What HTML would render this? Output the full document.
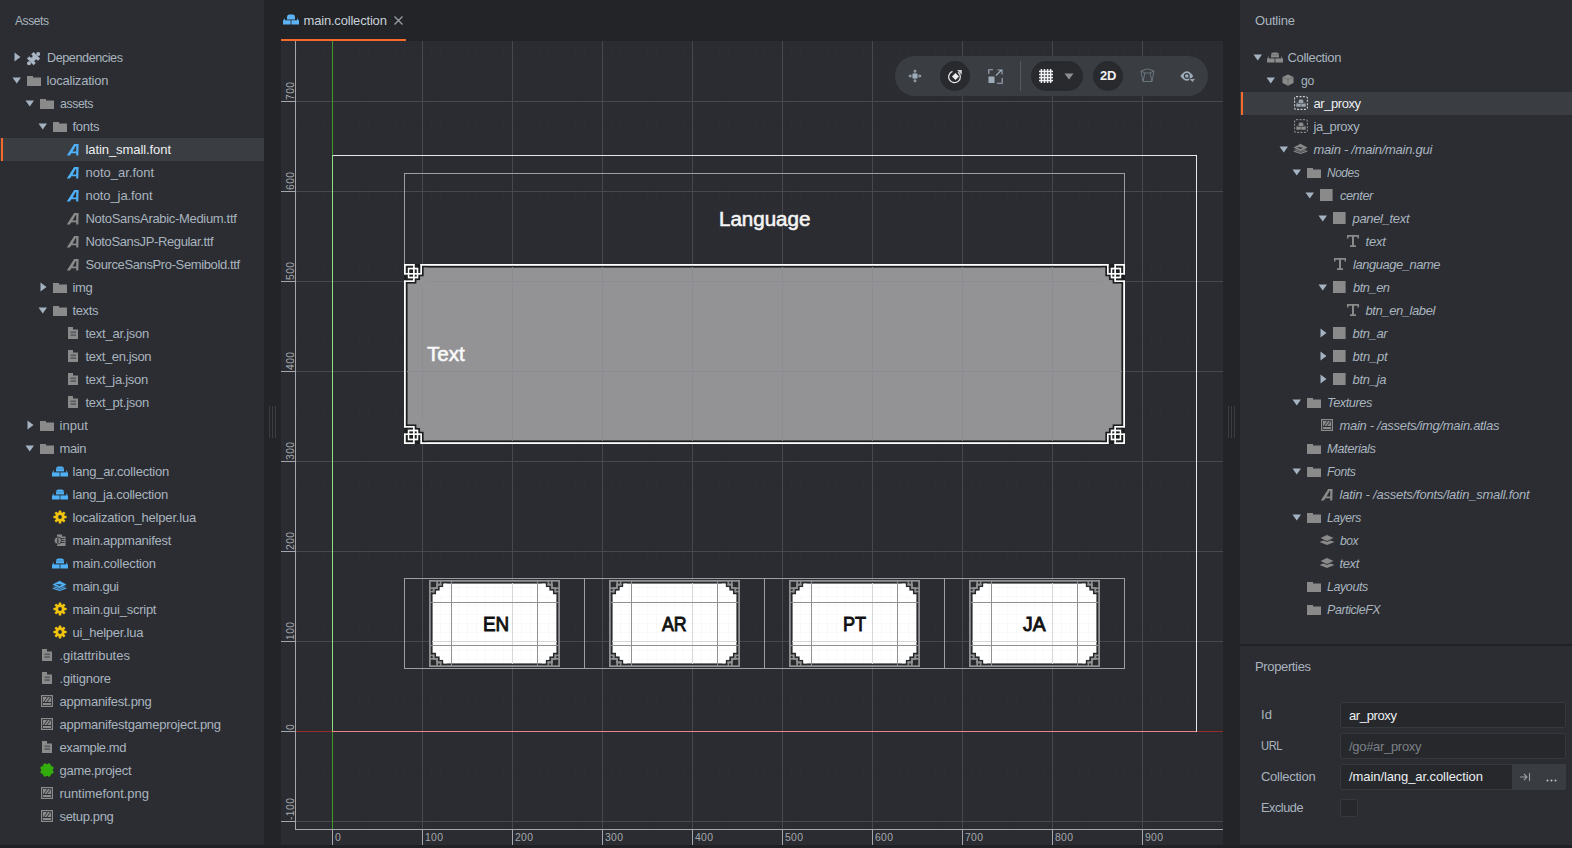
<!DOCTYPE html>
<html><head><meta charset="utf-8">
<style>
html,body{margin:0;padding:0;}
body{width:1572px;height:848px;overflow:hidden;position:relative;background:#1f2124;font-family:"Liberation Sans",sans-serif;}
.abs{position:absolute;}
svg{display:block;}
</style></head><body>
<!-- left panel -->
<div class="abs" style="left:0;top:0;width:264px;height:845px;background:#2b2d32;"></div>
<div class="abs" style="left:0;top:138px;width:264px;height:23px;background:#3a3d42;"></div>
<div class="abs" style="left:1px;top:138px;width:2px;height:23px;background:#f5692a;"></div>
<!-- editor area -->
<div class="abs" style="left:264px;top:0;width:976px;height:845px;background:#222428;"></div>
<!-- grips -->
<div class="abs" style="left:269px;top:406px;width:1px;height:32px;background:#3a3d42;"></div>
<div class="abs" style="left:272px;top:406px;width:1px;height:32px;background:#3a3d42;"></div>
<div class="abs" style="left:275px;top:406px;width:1px;height:32px;background:#3a3d42;"></div>
<div class="abs" style="left:1228px;top:406px;width:1px;height:32px;background:#3a3d42;"></div>
<div class="abs" style="left:1231px;top:406px;width:1px;height:32px;background:#3a3d42;"></div>
<div class="abs" style="left:1234px;top:406px;width:1px;height:32px;background:#3a3d42;"></div>
<!-- right panel -->
<div class="abs" style="left:1240px;top:0;width:332px;height:644px;background:#2b2d32;"></div>
<div class="abs" style="left:1240px;top:646px;width:332px;height:199px;background:#2b2d32;"></div>
<div class="abs" style="left:1240px;top:92px;width:332px;height:23px;background:#3a3d42;"></div>
<div class="abs" style="left:1241px;top:92px;width:2px;height:23px;background:#f5692a;"></div>
<!-- property fields -->
<div class="abs" style="left:1340px;top:702px;width:224px;height:24px;background:#26282c;border:1px solid #35383d;border-radius:2px;"></div>
<div class="abs" style="left:1340px;top:733px;width:224px;height:24px;background:#26282c;border:1px solid #35383d;border-radius:2px;"></div>
<div class="abs" style="left:1340px;top:764px;width:224px;height:24px;background:#26282c;border:1px solid #35383d;border-radius:2px;"></div>
<div class="abs" style="left:1512px;top:764px;width:54px;height:26px;background:#393c41;border-radius:0 2px 2px 0;"></div>
<div class="abs" style="left:1519px;top:771px;width:12px;height:12px;">
<svg width="12" height="12" viewBox="0 0 12 12"><path d="M1 6 H8 M5 3 L8 6 L5 9 M10.5 2 V10" stroke="#9aa0a6" stroke-width="1.1" fill="none"/></svg></div>
<div class="abs" style="left:1546px;top:779px;width:11px;height:3px;">
<svg width="11" height="3" viewBox="0 0 11 3"><circle cx="1.5" cy="1.5" r="1" fill="#c0c5ca"/><circle cx="5.5" cy="1.5" r="1" fill="#c0c5ca"/><circle cx="9.5" cy="1.5" r="1" fill="#c0c5ca"/></svg></div>
<div class="abs" style="left:1340px;top:799px;width:16px;height:16px;background:#26282c;border:1px solid #35383d;border-radius:2px;"></div>
<!-- tab -->
<div class="abs" style="left:281px;top:39px;width:125px;height:2px;background:#f5692a;"></div>
<div class="abs" style="left:283px;top:14px;"><svg width="16" height="11" viewBox="0 0 16 11"><path d="M4 3 Q4 0.5 6 0.5 H10 Q12 0.5 12 3 V5.5 H4 Z" fill="#5db3f5"/><path d="M1.5 4 L0 7 V10.5 H7.6 V6.2 H2 Z" fill="#5db3f5"/><path d="M14.5 4 L16 7 V10.5 H8.4 V6.2 H14 Z" fill="#5db3f5"/></svg></div>
<div class="abs" style="left:394px;top:16px;"><svg width="9" height="9" viewBox="0 0 9 9"><path d="M0.5 0.5 L8.5 8.5 M8.5 0.5 L0.5 8.5" stroke="#9a9fa5" stroke-width="1.3"/></svg></div>
<div style="position:absolute;left:303.5px;top:11px;height:20px;line-height:20px;white-space:nowrap;color:#c8d0d8;font-family:'Liberation Sans', sans-serif;font-size:13px;letter-spacing:-0.186px;">main.collection</div>
<svg style="position:absolute;left:13.75px;top:52px" width="7" height="10" viewBox="0 0 7 10"><path d="M0.5 0.5 V9.5 L6.5 5 Z" fill="#a4b2c1"/></svg>
<svg style="position:absolute;left:25.9px;top:49.6px" width="16" height="16" viewBox="0 0 16 16"><path d="M1 8.6 L7.6 2 L14.2 8.6 L7.6 15.2 Z" fill="#a9b6c3"/><circle cx="12.2" cy="4" r="2" fill="#a9b6c3"/><circle cx="3" cy="13.2" r="2" fill="#a9b6c3"/><circle cx="5" cy="6" r="1.6" fill="#2b2d32"/><circle cx="10.2" cy="11.2" r="1.6" fill="#2b2d32"/></svg>
<div style="position:absolute;left:46.5px;top:48px;height:20px;line-height:20px;white-space:nowrap;color:#a9b4bf;font-family:'Liberation Sans', sans-serif;font-size:13px;letter-spacing:-0.450px;transform:scaleX(0.9722);transform-origin:0 0;">Dependencies</div>
<svg style="position:absolute;left:12.0px;top:76.5px" width="10" height="7" viewBox="0 0 10 7"><path d="M0.5 0.5 H9 L4.75 6.5 Z" fill="#a4b2c1"/></svg>
<svg style="position:absolute;left:26.5px;top:75px" width="14" height="11" viewBox="0 0 14 11"><path d="M0 1 H6 V2.5 H14 V11 H0 Z" fill="#8a8a8a"/></svg>
<div style="position:absolute;left:46.5px;top:71px;height:20px;line-height:20px;white-space:nowrap;color:#a9b4bf;font-family:'Liberation Sans', sans-serif;font-size:13px;letter-spacing:-0.212px;">localization</div>
<svg style="position:absolute;left:25.0px;top:99.5px" width="10" height="7" viewBox="0 0 10 7"><path d="M0.5 0.5 H9 L4.75 6.5 Z" fill="#a4b2c1"/></svg>
<svg style="position:absolute;left:39.5px;top:98px" width="14" height="11" viewBox="0 0 14 11"><path d="M0 1 H6 V2.5 H14 V11 H0 Z" fill="#8a8a8a"/></svg>
<div style="position:absolute;left:59.5px;top:94px;height:20px;line-height:20px;white-space:nowrap;color:#a9b4bf;font-family:'Liberation Sans', sans-serif;font-size:13px;letter-spacing:-0.450px;transform:scaleX(0.9483);transform-origin:0 0;">assets</div>
<svg style="position:absolute;left:38.0px;top:122.5px" width="10" height="7" viewBox="0 0 10 7"><path d="M0.5 0.5 H9 L4.75 6.5 Z" fill="#a4b2c1"/></svg>
<svg style="position:absolute;left:52.5px;top:121px" width="14" height="11" viewBox="0 0 14 11"><path d="M0 1 H6 V2.5 H14 V11 H0 Z" fill="#8a8a8a"/></svg>
<div style="position:absolute;left:72.5px;top:117px;height:20px;line-height:20px;white-space:nowrap;color:#a9b4bf;font-family:'Liberation Sans', sans-serif;font-size:13px;letter-spacing:-0.297px;">fonts</div>
<svg style="position:absolute;left:66.3px;top:143.2px" width="13" height="13" viewBox="0 0 13 13"><path d="M0.8 12.5 L8.2 1 H12.6 L12.3 12.5 H10.2 V10.2 H5.4 L3.9 12.5 Z M6.6 8.4 H10.2 V3.1 H9.6 Z" fill="#4fb1f7" fill-rule="evenodd"/></svg>
<div style="position:absolute;left:85.5px;top:140px;height:20px;line-height:20px;white-space:nowrap;color:#eceff1;font-family:'Liberation Sans', sans-serif;font-size:13px;letter-spacing:-0.081px;">latin_small.font</div>
<svg style="position:absolute;left:66.3px;top:166.2px" width="13" height="13" viewBox="0 0 13 13"><path d="M0.8 12.5 L8.2 1 H12.6 L12.3 12.5 H10.2 V10.2 H5.4 L3.9 12.5 Z M6.6 8.4 H10.2 V3.1 H9.6 Z" fill="#4fb1f7" fill-rule="evenodd"/></svg>
<div style="position:absolute;left:85.5px;top:163px;height:20px;line-height:20px;white-space:nowrap;color:#a9b4bf;font-family:'Liberation Sans', sans-serif;font-size:13px;letter-spacing:-0.007px;">noto_ar.font</div>
<svg style="position:absolute;left:66.3px;top:189.2px" width="13" height="13" viewBox="0 0 13 13"><path d="M0.8 12.5 L8.2 1 H12.6 L12.3 12.5 H10.2 V10.2 H5.4 L3.9 12.5 Z M6.6 8.4 H10.2 V3.1 H9.6 Z" fill="#4fb1f7" fill-rule="evenodd"/></svg>
<div style="position:absolute;left:85.5px;top:186px;height:20px;line-height:20px;white-space:nowrap;color:#a9b4bf;font-family:'Liberation Sans', sans-serif;font-size:13px;letter-spacing:-0.087px;">noto_ja.font</div>
<svg style="position:absolute;left:66.3px;top:212.2px" width="13" height="13" viewBox="0 0 13 13"><path d="M0.8 12.5 L8.2 1 H12.6 L12.3 12.5 H10.2 V10.2 H5.4 L3.9 12.5 Z M6.6 8.4 H10.2 V3.1 H9.6 Z" fill="#8a8a8a" fill-rule="evenodd"/></svg>
<div style="position:absolute;left:85.5px;top:209px;height:20px;line-height:20px;white-space:nowrap;color:#a9b4bf;font-family:'Liberation Sans', sans-serif;font-size:13px;letter-spacing:-0.319px;">NotoSansArabic-Medium.ttf</div>
<svg style="position:absolute;left:66.3px;top:235.2px" width="13" height="13" viewBox="0 0 13 13"><path d="M0.8 12.5 L8.2 1 H12.6 L12.3 12.5 H10.2 V10.2 H5.4 L3.9 12.5 Z M6.6 8.4 H10.2 V3.1 H9.6 Z" fill="#8a8a8a" fill-rule="evenodd"/></svg>
<div style="position:absolute;left:85.5px;top:232px;height:20px;line-height:20px;white-space:nowrap;color:#a9b4bf;font-family:'Liberation Sans', sans-serif;font-size:13px;letter-spacing:-0.374px;">NotoSansJP-Regular.ttf</div>
<svg style="position:absolute;left:66.3px;top:258.2px" width="13" height="13" viewBox="0 0 13 13"><path d="M0.8 12.5 L8.2 1 H12.6 L12.3 12.5 H10.2 V10.2 H5.4 L3.9 12.5 Z M6.6 8.4 H10.2 V3.1 H9.6 Z" fill="#8a8a8a" fill-rule="evenodd"/></svg>
<div style="position:absolute;left:85.5px;top:255px;height:20px;line-height:20px;white-space:nowrap;color:#a9b4bf;font-family:'Liberation Sans', sans-serif;font-size:13px;letter-spacing:-0.377px;">SourceSansPro-Semibold.ttf</div>
<svg style="position:absolute;left:39.75px;top:282px" width="7" height="10" viewBox="0 0 7 10"><path d="M0.5 0.5 V9.5 L6.5 5 Z" fill="#a4b2c1"/></svg>
<svg style="position:absolute;left:52.5px;top:282px" width="14" height="11" viewBox="0 0 14 11"><path d="M0 1 H6 V2.5 H14 V11 H0 Z" fill="#8a8a8a"/></svg>
<div style="position:absolute;left:72.5px;top:278px;height:20px;line-height:20px;white-space:nowrap;color:#a9b4bf;font-family:'Liberation Sans', sans-serif;font-size:13px;letter-spacing:-0.327px;">img</div>
<svg style="position:absolute;left:38.0px;top:306.5px" width="10" height="7" viewBox="0 0 10 7"><path d="M0.5 0.5 H9 L4.75 6.5 Z" fill="#a4b2c1"/></svg>
<svg style="position:absolute;left:52.5px;top:305px" width="14" height="11" viewBox="0 0 14 11"><path d="M0 1 H6 V2.5 H14 V11 H0 Z" fill="#8a8a8a"/></svg>
<div style="position:absolute;left:72.5px;top:301px;height:20px;line-height:20px;white-space:nowrap;color:#a9b4bf;font-family:'Liberation Sans', sans-serif;font-size:13px;letter-spacing:-0.367px;">texts</div>
<svg style="position:absolute;left:67.5px;top:327px" width="10" height="12" viewBox="0 0 10 12"><path d="M0 0 H5 V2.5 H10 V12 H0 Z" fill="#8a8a8a"/><rect x="2.5" y="4.5" width="5.5" height="1.6" fill="#55585c"/><rect x="2.5" y="7.3" width="5.5" height="1.6" fill="#55585c"/></svg>
<div style="position:absolute;left:85.5px;top:324px;height:20px;line-height:20px;white-space:nowrap;color:#a9b4bf;font-family:'Liberation Sans', sans-serif;font-size:13px;letter-spacing:-0.245px;">text_ar.json</div>
<svg style="position:absolute;left:67.5px;top:350px" width="10" height="12" viewBox="0 0 10 12"><path d="M0 0 H5 V2.5 H10 V12 H0 Z" fill="#8a8a8a"/><rect x="2.5" y="4.5" width="5.5" height="1.6" fill="#55585c"/><rect x="2.5" y="7.3" width="5.5" height="1.6" fill="#55585c"/></svg>
<div style="position:absolute;left:85.5px;top:347px;height:20px;line-height:20px;white-space:nowrap;color:#a9b4bf;font-family:'Liberation Sans', sans-serif;font-size:13px;letter-spacing:-0.374px;">text_en.json</div>
<svg style="position:absolute;left:67.5px;top:373px" width="10" height="12" viewBox="0 0 10 12"><path d="M0 0 H5 V2.5 H10 V12 H0 Z" fill="#8a8a8a"/><rect x="2.5" y="4.5" width="5.5" height="1.6" fill="#55585c"/><rect x="2.5" y="7.3" width="5.5" height="1.6" fill="#55585c"/></svg>
<div style="position:absolute;left:85.5px;top:370px;height:20px;line-height:20px;white-space:nowrap;color:#a9b4bf;font-family:'Liberation Sans', sans-serif;font-size:13px;letter-spacing:-0.279px;">text_ja.json</div>
<svg style="position:absolute;left:67.5px;top:396px" width="10" height="12" viewBox="0 0 10 12"><path d="M0 0 H5 V2.5 H10 V12 H0 Z" fill="#8a8a8a"/><rect x="2.5" y="4.5" width="5.5" height="1.6" fill="#55585c"/><rect x="2.5" y="7.3" width="5.5" height="1.6" fill="#55585c"/></svg>
<div style="position:absolute;left:85.5px;top:393px;height:20px;line-height:20px;white-space:nowrap;color:#a9b4bf;font-family:'Liberation Sans', sans-serif;font-size:13px;letter-spacing:-0.245px;">text_pt.json</div>
<svg style="position:absolute;left:26.75px;top:420px" width="7" height="10" viewBox="0 0 7 10"><path d="M0.5 0.5 V9.5 L6.5 5 Z" fill="#a4b2c1"/></svg>
<svg style="position:absolute;left:39.5px;top:420px" width="14" height="11" viewBox="0 0 14 11"><path d="M0 1 H6 V2.5 H14 V11 H0 Z" fill="#8a8a8a"/></svg>
<div style="position:absolute;left:59.5px;top:416px;height:20px;line-height:20px;white-space:nowrap;color:#a9b4bf;font-family:'Liberation Sans', sans-serif;font-size:13px;letter-spacing:0.049px;">input</div>
<svg style="position:absolute;left:25.0px;top:444.5px" width="10" height="7" viewBox="0 0 10 7"><path d="M0.5 0.5 H9 L4.75 6.5 Z" fill="#a4b2c1"/></svg>
<svg style="position:absolute;left:39.5px;top:443px" width="14" height="11" viewBox="0 0 14 11"><path d="M0 1 H6 V2.5 H14 V11 H0 Z" fill="#8a8a8a"/></svg>
<div style="position:absolute;left:59.5px;top:439px;height:20px;line-height:20px;white-space:nowrap;color:#a9b4bf;font-family:'Liberation Sans', sans-serif;font-size:13px;letter-spacing:-0.396px;">main</div>
<svg style="position:absolute;left:51.5px;top:466px" width="16" height="11" viewBox="0 0 16 11"><path d="M4 3 Q4 0.5 6 0.5 H10 Q12 0.5 12 3 V5.5 H4 Z" fill="#4fb1f7"/><rect x="4" y="2.5" width="8" height="0.8" fill="#2b2d32" opacity="0.35"/><path d="M1.5 4 L0 7 V10.5 H7.6 V6.2 H2 Z" fill="#4fb1f7"/><path d="M14.5 4 L16 7 V10.5 H8.4 V6.2 H14 Z" fill="#4fb1f7"/><rect x="0" y="5.6" width="16" height="0.8" fill="#2b2d32" opacity="0.5"/></svg>
<div style="position:absolute;left:72.5px;top:462px;height:20px;line-height:20px;white-space:nowrap;color:#a9b4bf;font-family:'Liberation Sans', sans-serif;font-size:13px;letter-spacing:-0.216px;">lang_ar.collection</div>
<svg style="position:absolute;left:51.5px;top:489px" width="16" height="11" viewBox="0 0 16 11"><path d="M4 3 Q4 0.5 6 0.5 H10 Q12 0.5 12 3 V5.5 H4 Z" fill="#4fb1f7"/><rect x="4" y="2.5" width="8" height="0.8" fill="#2b2d32" opacity="0.35"/><path d="M1.5 4 L0 7 V10.5 H7.6 V6.2 H2 Z" fill="#4fb1f7"/><path d="M14.5 4 L16 7 V10.5 H8.4 V6.2 H14 Z" fill="#4fb1f7"/><rect x="0" y="5.6" width="16" height="0.8" fill="#2b2d32" opacity="0.5"/></svg>
<div style="position:absolute;left:72.5px;top:485px;height:20px;line-height:20px;white-space:nowrap;color:#a9b4bf;font-family:'Liberation Sans', sans-serif;font-size:13px;letter-spacing:-0.237px;">lang_ja.collection</div>
<svg style="position:absolute;left:52.5px;top:510px" width="14" height="14" viewBox="0 0 14 14"><circle cx="7" cy="7" r="4.7" fill="#f1c40f"/><rect x="5.7" y="0.4" width="2.6" height="3.6" rx="0.7" fill="#f1c40f" transform="rotate(0 7 7)"/><rect x="5.7" y="0.4" width="2.6" height="3.6" rx="0.7" fill="#f1c40f" transform="rotate(45 7 7)"/><rect x="5.7" y="0.4" width="2.6" height="3.6" rx="0.7" fill="#f1c40f" transform="rotate(90 7 7)"/><rect x="5.7" y="0.4" width="2.6" height="3.6" rx="0.7" fill="#f1c40f" transform="rotate(135 7 7)"/><rect x="5.7" y="0.4" width="2.6" height="3.6" rx="0.7" fill="#f1c40f" transform="rotate(180 7 7)"/><rect x="5.7" y="0.4" width="2.6" height="3.6" rx="0.7" fill="#f1c40f" transform="rotate(225 7 7)"/><rect x="5.7" y="0.4" width="2.6" height="3.6" rx="0.7" fill="#f1c40f" transform="rotate(270 7 7)"/><rect x="5.7" y="0.4" width="2.6" height="3.6" rx="0.7" fill="#f1c40f" transform="rotate(315 7 7)"/><circle cx="7" cy="7" r="1.9" fill="#2b2d32"/></svg>
<div style="position:absolute;left:72.5px;top:508px;height:20px;line-height:20px;white-space:nowrap;color:#a9b4bf;font-family:'Liberation Sans', sans-serif;font-size:13px;letter-spacing:-0.193px;">localization_helper.lua</div>
<svg style="position:absolute;left:53.5px;top:533.5px" width="12" height="13" viewBox="0 0 12 13"><path d="M3 0.5 H8 V2.5 H11.5 V12 H3 Z" fill="#8a8a8a"/><rect x="6" y="4" width="4.5" height="0.9" fill="#2b2d32"/><rect x="6" y="6" width="4.5" height="0.9" fill="#2b2d32"/><rect x="6" y="8" width="4.5" height="0.9" fill="#2b2d32"/><circle cx="3.8" cy="6.5" r="3.6" fill="#8a8a8a" stroke="#2b2d32" stroke-width="0.8"/><rect x="3.2" y="5.2" width="1.3" height="3.6" fill="#2b2d32"/><rect x="3.2" y="3.6" width="1.3" height="1" fill="#2b2d32"/></svg>
<div style="position:absolute;left:72.5px;top:531px;height:20px;line-height:20px;white-space:nowrap;color:#a9b4bf;font-family:'Liberation Sans', sans-serif;font-size:13px;letter-spacing:-0.242px;">main.appmanifest</div>
<svg style="position:absolute;left:51.5px;top:558px" width="16" height="11" viewBox="0 0 16 11"><path d="M4 3 Q4 0.5 6 0.5 H10 Q12 0.5 12 3 V5.5 H4 Z" fill="#4fb1f7"/><rect x="4" y="2.5" width="8" height="0.8" fill="#2b2d32" opacity="0.35"/><path d="M1.5 4 L0 7 V10.5 H7.6 V6.2 H2 Z" fill="#4fb1f7"/><path d="M14.5 4 L16 7 V10.5 H8.4 V6.2 H14 Z" fill="#4fb1f7"/><rect x="0" y="5.6" width="16" height="0.8" fill="#2b2d32" opacity="0.5"/></svg>
<div style="position:absolute;left:72.5px;top:554px;height:20px;line-height:20px;white-space:nowrap;color:#a9b4bf;font-family:'Liberation Sans', sans-serif;font-size:13px;letter-spacing:-0.171px;">main.collection</div>
<svg style="position:absolute;left:52.0px;top:580px" width="15" height="12" viewBox="0 0 15 12"><path d="M7.5 6 L15 8.5 L7.5 11 L0 8.5 Z" fill="#4fb1f7"/><path d="M7.5 4.5 L15 7 L7.5 9.5 L0 7 Z" fill="#4fb1f7" stroke="#2b2d32" stroke-width="0.6"/><path d="M7.5 0.5 L15 4.5 L7.5 8.5 L0 4.5 Z" fill="#4fb1f7" stroke="#2b2d32" stroke-width="0.6"/><path d="M3.5 4 L10 4.3 L7.5 6.6 Z" fill="#2b2d32" opacity="0.8"/></svg>
<div style="position:absolute;left:72.5px;top:577px;height:20px;line-height:20px;white-space:nowrap;color:#a9b4bf;font-family:'Liberation Sans', sans-serif;font-size:13px;letter-spacing:-0.377px;">main.gui</div>
<svg style="position:absolute;left:52.5px;top:602px" width="14" height="14" viewBox="0 0 14 14"><circle cx="7" cy="7" r="4.7" fill="#f1c40f"/><rect x="5.7" y="0.4" width="2.6" height="3.6" rx="0.7" fill="#f1c40f" transform="rotate(0 7 7)"/><rect x="5.7" y="0.4" width="2.6" height="3.6" rx="0.7" fill="#f1c40f" transform="rotate(45 7 7)"/><rect x="5.7" y="0.4" width="2.6" height="3.6" rx="0.7" fill="#f1c40f" transform="rotate(90 7 7)"/><rect x="5.7" y="0.4" width="2.6" height="3.6" rx="0.7" fill="#f1c40f" transform="rotate(135 7 7)"/><rect x="5.7" y="0.4" width="2.6" height="3.6" rx="0.7" fill="#f1c40f" transform="rotate(180 7 7)"/><rect x="5.7" y="0.4" width="2.6" height="3.6" rx="0.7" fill="#f1c40f" transform="rotate(225 7 7)"/><rect x="5.7" y="0.4" width="2.6" height="3.6" rx="0.7" fill="#f1c40f" transform="rotate(270 7 7)"/><rect x="5.7" y="0.4" width="2.6" height="3.6" rx="0.7" fill="#f1c40f" transform="rotate(315 7 7)"/><circle cx="7" cy="7" r="1.9" fill="#2b2d32"/></svg>
<div style="position:absolute;left:72.5px;top:600px;height:20px;line-height:20px;white-space:nowrap;color:#a9b4bf;font-family:'Liberation Sans', sans-serif;font-size:13px;letter-spacing:-0.246px;">main.gui_script</div>
<svg style="position:absolute;left:52.5px;top:625px" width="14" height="14" viewBox="0 0 14 14"><circle cx="7" cy="7" r="4.7" fill="#f1c40f"/><rect x="5.7" y="0.4" width="2.6" height="3.6" rx="0.7" fill="#f1c40f" transform="rotate(0 7 7)"/><rect x="5.7" y="0.4" width="2.6" height="3.6" rx="0.7" fill="#f1c40f" transform="rotate(45 7 7)"/><rect x="5.7" y="0.4" width="2.6" height="3.6" rx="0.7" fill="#f1c40f" transform="rotate(90 7 7)"/><rect x="5.7" y="0.4" width="2.6" height="3.6" rx="0.7" fill="#f1c40f" transform="rotate(135 7 7)"/><rect x="5.7" y="0.4" width="2.6" height="3.6" rx="0.7" fill="#f1c40f" transform="rotate(180 7 7)"/><rect x="5.7" y="0.4" width="2.6" height="3.6" rx="0.7" fill="#f1c40f" transform="rotate(225 7 7)"/><rect x="5.7" y="0.4" width="2.6" height="3.6" rx="0.7" fill="#f1c40f" transform="rotate(270 7 7)"/><rect x="5.7" y="0.4" width="2.6" height="3.6" rx="0.7" fill="#f1c40f" transform="rotate(315 7 7)"/><circle cx="7" cy="7" r="1.9" fill="#2b2d32"/></svg>
<div style="position:absolute;left:72.5px;top:623px;height:20px;line-height:20px;white-space:nowrap;color:#a9b4bf;font-family:'Liberation Sans', sans-serif;font-size:13px;letter-spacing:-0.228px;">ui_helper.lua</div>
<svg style="position:absolute;left:41.5px;top:649px" width="10" height="12" viewBox="0 0 10 12"><path d="M0 0 H5 V2.5 H10 V12 H0 Z" fill="#8a8a8a"/><rect x="2.5" y="4.5" width="5.5" height="1.6" fill="#55585c"/><rect x="2.5" y="7.3" width="5.5" height="1.6" fill="#55585c"/></svg>
<div style="position:absolute;left:59.5px;top:646px;height:20px;line-height:20px;white-space:nowrap;color:#a9b4bf;font-family:'Liberation Sans', sans-serif;font-size:13px;letter-spacing:-0.033px;">.gitattributes</div>
<svg style="position:absolute;left:41.5px;top:672px" width="10" height="12" viewBox="0 0 10 12"><path d="M0 0 H5 V2.5 H10 V12 H0 Z" fill="#8a8a8a"/><rect x="2.5" y="4.5" width="5.5" height="1.6" fill="#55585c"/><rect x="2.5" y="7.3" width="5.5" height="1.6" fill="#55585c"/></svg>
<div style="position:absolute;left:59.5px;top:669px;height:20px;line-height:20px;white-space:nowrap;color:#a9b4bf;font-family:'Liberation Sans', sans-serif;font-size:13px;letter-spacing:-0.220px;">.gitignore</div>
<svg style="position:absolute;left:40.5px;top:695px" width="12" height="12" viewBox="0 0 12 12"><rect x="0.6" y="0.6" width="10.8" height="10.8" fill="none" stroke="#8a8a8a" stroke-width="1.2"/><rect x="2" y="2" width="8" height="5" fill="#8a8a8a"/><path d="M3 7 L6.5 2 M6 7 L9.5 2" stroke="#2b2d32" stroke-width="0.9"/><rect x="2" y="8" width="8" height="2" fill="#8a8a8a"/></svg>
<div style="position:absolute;left:59.5px;top:692px;height:20px;line-height:20px;white-space:nowrap;color:#a9b4bf;font-family:'Liberation Sans', sans-serif;font-size:13px;letter-spacing:-0.273px;">appmanifest.png</div>
<svg style="position:absolute;left:40.5px;top:718px" width="12" height="12" viewBox="0 0 12 12"><rect x="0.6" y="0.6" width="10.8" height="10.8" fill="none" stroke="#8a8a8a" stroke-width="1.2"/><rect x="2" y="2" width="8" height="5" fill="#8a8a8a"/><path d="M3 7 L6.5 2 M6 7 L9.5 2" stroke="#2b2d32" stroke-width="0.9"/><rect x="2" y="8" width="8" height="2" fill="#8a8a8a"/></svg>
<div style="position:absolute;left:59.5px;top:715px;height:20px;line-height:20px;white-space:nowrap;color:#a9b4bf;font-family:'Liberation Sans', sans-serif;font-size:13px;letter-spacing:-0.243px;">appmanifestgameproject.png</div>
<svg style="position:absolute;left:41.5px;top:741px" width="10" height="12" viewBox="0 0 10 12"><path d="M0 0 H5 V2.5 H10 V12 H0 Z" fill="#8a8a8a"/><rect x="2.5" y="4.5" width="5.5" height="1.6" fill="#55585c"/><rect x="2.5" y="7.3" width="5.5" height="1.6" fill="#55585c"/></svg>
<div style="position:absolute;left:59.5px;top:738px;height:20px;line-height:20px;white-space:nowrap;color:#a9b4bf;font-family:'Liberation Sans', sans-serif;font-size:13px;letter-spacing:-0.424px;">example.md</div>
<svg style="position:absolute;left:39.5px;top:763px" width="14" height="14" viewBox="0 0 14 14"><circle cx="7" cy="7" r="5.9" fill="#33ad0d"/><circle cx="7" cy="1.5" r="1.5" fill="#33ad0d" transform="rotate(22.5 7 7)"/><circle cx="7" cy="1.5" r="1.5" fill="#33ad0d" transform="rotate(67.5 7 7)"/><circle cx="7" cy="1.5" r="1.5" fill="#33ad0d" transform="rotate(112.5 7 7)"/><circle cx="7" cy="1.5" r="1.5" fill="#33ad0d" transform="rotate(157.5 7 7)"/><circle cx="7" cy="1.5" r="1.5" fill="#33ad0d" transform="rotate(202.5 7 7)"/><circle cx="7" cy="1.5" r="1.5" fill="#33ad0d" transform="rotate(247.5 7 7)"/><circle cx="7" cy="1.5" r="1.5" fill="#33ad0d" transform="rotate(292.5 7 7)"/><circle cx="7" cy="1.5" r="1.5" fill="#33ad0d" transform="rotate(337.5 7 7)"/></svg>
<div style="position:absolute;left:59.5px;top:761px;height:20px;line-height:20px;white-space:nowrap;color:#a9b4bf;font-family:'Liberation Sans', sans-serif;font-size:13px;letter-spacing:-0.287px;">game.project</div>
<svg style="position:absolute;left:40.5px;top:787px" width="12" height="12" viewBox="0 0 12 12"><rect x="0.6" y="0.6" width="10.8" height="10.8" fill="none" stroke="#8a8a8a" stroke-width="1.2"/><rect x="2" y="2" width="8" height="5" fill="#8a8a8a"/><path d="M3 7 L6.5 2 M6 7 L9.5 2" stroke="#2b2d32" stroke-width="0.9"/><rect x="2" y="8" width="8" height="2" fill="#8a8a8a"/></svg>
<div style="position:absolute;left:59.5px;top:784px;height:20px;line-height:20px;white-space:nowrap;color:#a9b4bf;font-family:'Liberation Sans', sans-serif;font-size:13px;letter-spacing:-0.067px;">runtimefont.png</div>
<svg style="position:absolute;left:40.5px;top:810px" width="12" height="12" viewBox="0 0 12 12"><rect x="0.6" y="0.6" width="10.8" height="10.8" fill="none" stroke="#8a8a8a" stroke-width="1.2"/><rect x="2" y="2" width="8" height="5" fill="#8a8a8a"/><path d="M3 7 L6.5 2 M6 7 L9.5 2" stroke="#2b2d32" stroke-width="0.9"/><rect x="2" y="8" width="8" height="2" fill="#8a8a8a"/></svg>
<div style="position:absolute;left:59.5px;top:807px;height:20px;line-height:20px;white-space:nowrap;color:#a9b4bf;font-family:'Liberation Sans', sans-serif;font-size:13px;letter-spacing:-0.351px;">setup.png</div>
<svg style="position:absolute;left:1253.0px;top:53.5px" width="10" height="7" viewBox="0 0 10 7"><path d="M0.5 0.5 H9 L4.75 6.5 Z" fill="#a4b2c1"/></svg>
<svg style="position:absolute;left:1266.5px;top:52px" width="16" height="11" viewBox="0 0 16 11"><path d="M4 3 Q4 0.5 6 0.5 H10 Q12 0.5 12 3 V5.5 H4 Z" fill="#8a8a8a"/><rect x="4" y="2.5" width="8" height="0.8" fill="#2b2d32" opacity="0.35"/><path d="M1.5 4 L0 7 V10.5 H7.6 V6.2 H2 Z" fill="#8a8a8a"/><path d="M14.5 4 L16 7 V10.5 H8.4 V6.2 H14 Z" fill="#8a8a8a"/><rect x="0" y="5.6" width="16" height="0.8" fill="#2b2d32" opacity="0.5"/></svg>
<div style="position:absolute;left:1287.5px;top:48px;height:20px;line-height:20px;white-space:nowrap;color:#a9b4bf;font-family:'Liberation Sans', sans-serif;font-size:13px;letter-spacing:-0.344px;">Collection</div>
<svg style="position:absolute;left:1266.0px;top:76.5px" width="10" height="7" viewBox="0 0 10 7"><path d="M0.5 0.5 H9 L4.75 6.5 Z" fill="#a4b2c1"/></svg>
<svg style="position:absolute;left:1281.5px;top:74px" width="12" height="12" viewBox="0 0 12 12"><path d="M6 0.5 L11.5 3 V9 L6 11.8 L0.5 9 V3 Z" fill="#8a8a8a"/><path d="M0.5 3 L6 5.6 L11.5 3 M6 5.6 V11.8" stroke="#6a6a6a" stroke-width="0.8" fill="none"/></svg>
<div style="position:absolute;left:1300.5px;top:71px;height:20px;line-height:20px;white-space:nowrap;color:#a9b4bf;font-family:'Liberation Sans', sans-serif;font-size:13px;letter-spacing:-0.450px;transform:scaleX(0.9416);transform-origin:0 0;">go</div>
<svg style="position:absolute;left:1293.5px;top:96px" width="14" height="14" viewBox="0 0 14 14"><rect x="0.6" y="0.6" width="12.8" height="12.8" rx="1.5" fill="none" stroke="#c9ced3" stroke-width="1.1" stroke-dasharray="2 1.4"/><g transform="translate(2.3 3.2) scale(0.59 0.72)"><path d="M4 3 Q4 0.5 6 0.5 H10 Q12 0.5 12 3 V5.5 H4 Z" fill="#9aa3ab"/><path d="M1.5 4 L0 7 V10.5 H7.6 V6.2 H2 Z" fill="#9aa3ab"/><path d="M14.5 4 L16 7 V10.5 H8.4 V6.2 H14 Z" fill="#9aa3ab"/></g></svg>
<div style="position:absolute;left:1313.5px;top:94px;height:20px;line-height:20px;white-space:nowrap;color:#eceff1;font-family:'Liberation Sans', sans-serif;font-size:13px;letter-spacing:-0.425px;">ar_proxy</div>
<svg style="position:absolute;left:1293.5px;top:119px" width="14" height="14" viewBox="0 0 14 14"><rect x="0.6" y="0.6" width="12.8" height="12.8" rx="1.5" fill="none" stroke="#8a8a8a" stroke-width="1.1" stroke-dasharray="2 1.4"/><g transform="translate(2.3 3.2) scale(0.59 0.72)"><path d="M4 3 Q4 0.5 6 0.5 H10 Q12 0.5 12 3 V5.5 H4 Z" fill="#8a8a8a"/><path d="M1.5 4 L0 7 V10.5 H7.6 V6.2 H2 Z" fill="#8a8a8a"/><path d="M14.5 4 L16 7 V10.5 H8.4 V6.2 H14 Z" fill="#8a8a8a"/></g></svg>
<div style="position:absolute;left:1313.5px;top:117px;height:20px;line-height:20px;white-space:nowrap;color:#a9b4bf;font-family:'Liberation Sans', sans-serif;font-size:13px;letter-spacing:-0.420px;">ja_proxy</div>
<svg style="position:absolute;left:1279.0px;top:145.5px" width="10" height="7" viewBox="0 0 10 7"><path d="M0.5 0.5 H9 L4.75 6.5 Z" fill="#a4b2c1"/></svg>
<svg style="position:absolute;left:1293.0px;top:143px" width="15" height="12" viewBox="0 0 15 12"><path d="M7.5 6 L15 8.5 L7.5 11 L0 8.5 Z" fill="#8a8a8a"/><path d="M7.5 4.5 L15 7 L7.5 9.5 L0 7 Z" fill="#8a8a8a" stroke="#2b2d32" stroke-width="0.6"/><path d="M7.5 0.5 L15 4.5 L7.5 8.5 L0 4.5 Z" fill="#8a8a8a" stroke="#2b2d32" stroke-width="0.6"/><path d="M3.5 4 L10 4.3 L7.5 6.6 Z" fill="#2b2d32" opacity="0.8"/></svg>
<div style="position:absolute;left:1313.5px;top:140px;height:20px;line-height:20px;white-space:nowrap;color:#a9b4bf;font-family:'Liberation Sans', sans-serif;font-size:13px;font-style:italic;letter-spacing:-0.274px;">main - /main/main.gui</div>
<svg style="position:absolute;left:1292.0px;top:168.5px" width="10" height="7" viewBox="0 0 10 7"><path d="M0.5 0.5 H9 L4.75 6.5 Z" fill="#a4b2c1"/></svg>
<svg style="position:absolute;left:1306.5px;top:167px" width="14" height="11" viewBox="0 0 14 11"><path d="M0 1 H6 V2.5 H14 V11 H0 Z" fill="#8a8a8a"/></svg>
<div style="position:absolute;left:1326.5px;top:163px;height:20px;line-height:20px;white-space:nowrap;color:#a9b4bf;font-family:'Liberation Sans', sans-serif;font-size:13px;font-style:italic;letter-spacing:-0.450px;transform:scaleX(0.9140);transform-origin:0 0;">Nodes</div>
<svg style="position:absolute;left:1305.0px;top:191.5px" width="10" height="7" viewBox="0 0 10 7"><path d="M0.5 0.5 H9 L4.75 6.5 Z" fill="#a4b2c1"/></svg>
<svg style="position:absolute;left:1320.2px;top:189px" width="13" height="12" viewBox="0 0 13 12"><rect x="0" y="0" width="12.6" height="12" fill="#8a8a8a"/></svg>
<div style="position:absolute;left:1339.5px;top:186px;height:20px;line-height:20px;white-space:nowrap;color:#a9b4bf;font-family:'Liberation Sans', sans-serif;font-size:13px;font-style:italic;letter-spacing:-0.450px;transform:scaleX(0.9826);transform-origin:0 0;">center</div>
<svg style="position:absolute;left:1318.0px;top:214.5px" width="10" height="7" viewBox="0 0 10 7"><path d="M0.5 0.5 H9 L4.75 6.5 Z" fill="#a4b2c1"/></svg>
<svg style="position:absolute;left:1333.2px;top:212px" width="13" height="12" viewBox="0 0 13 12"><rect x="0" y="0" width="12.6" height="12" fill="#8a8a8a"/></svg>
<div style="position:absolute;left:1352.5px;top:209px;height:20px;line-height:20px;white-space:nowrap;color:#a9b4bf;font-family:'Liberation Sans', sans-serif;font-size:13px;font-style:italic;letter-spacing:-0.333px;">panel_text</div>
<svg style="position:absolute;left:1346.5px;top:235px" width="12" height="12" viewBox="0 0 12 12"><path d="M0 0 H12 V3.5 H10.5 V1.8 H7 V10.2 H9 V12 H3 V10.2 H5 V1.8 H1.5 V3.5 H0 Z" fill="#8a8a8a"/></svg>
<div style="position:absolute;left:1365.5px;top:232px;height:20px;line-height:20px;white-space:nowrap;color:#a9b4bf;font-family:'Liberation Sans', sans-serif;font-size:13px;font-style:italic;letter-spacing:-0.190px;">text</div>
<svg style="position:absolute;left:1333.5px;top:258px" width="12" height="12" viewBox="0 0 12 12"><path d="M0 0 H12 V3.5 H10.5 V1.8 H7 V10.2 H9 V12 H3 V10.2 H5 V1.8 H1.5 V3.5 H0 Z" fill="#8a8a8a"/></svg>
<div style="position:absolute;left:1352.5px;top:255px;height:20px;line-height:20px;white-space:nowrap;color:#a9b4bf;font-family:'Liberation Sans', sans-serif;font-size:13px;font-style:italic;letter-spacing:-0.450px;transform:scaleX(0.9949);transform-origin:0 0;">language_name</div>
<svg style="position:absolute;left:1318.0px;top:283.5px" width="10" height="7" viewBox="0 0 10 7"><path d="M0.5 0.5 H9 L4.75 6.5 Z" fill="#a4b2c1"/></svg>
<svg style="position:absolute;left:1333.2px;top:281px" width="13" height="12" viewBox="0 0 13 12"><rect x="0" y="0" width="12.6" height="12" fill="#8a8a8a"/></svg>
<div style="position:absolute;left:1352.5px;top:278px;height:20px;line-height:20px;white-space:nowrap;color:#a9b4bf;font-family:'Liberation Sans', sans-serif;font-size:13px;font-style:italic;letter-spacing:-0.450px;transform:scaleX(0.9863);transform-origin:0 0;">btn_en</div>
<svg style="position:absolute;left:1346.5px;top:304px" width="12" height="12" viewBox="0 0 12 12"><path d="M0 0 H12 V3.5 H10.5 V1.8 H7 V10.2 H9 V12 H3 V10.2 H5 V1.8 H1.5 V3.5 H0 Z" fill="#8a8a8a"/></svg>
<div style="position:absolute;left:1365.5px;top:301px;height:20px;line-height:20px;white-space:nowrap;color:#a9b4bf;font-family:'Liberation Sans', sans-serif;font-size:13px;font-style:italic;letter-spacing:-0.415px;">btn_en_label</div>
<svg style="position:absolute;left:1319.75px;top:328px" width="7" height="10" viewBox="0 0 7 10"><path d="M0.5 0.5 V9.5 L6.5 5 Z" fill="#a4b2c1"/></svg>
<svg style="position:absolute;left:1333.2px;top:327px" width="13" height="12" viewBox="0 0 13 12"><rect x="0" y="0" width="12.6" height="12" fill="#8a8a8a"/></svg>
<div style="position:absolute;left:1352.5px;top:324px;height:20px;line-height:20px;white-space:nowrap;color:#a9b4bf;font-family:'Liberation Sans', sans-serif;font-size:13px;font-style:italic;letter-spacing:-0.335px;">btn_ar</div>
<svg style="position:absolute;left:1319.75px;top:351px" width="7" height="10" viewBox="0 0 7 10"><path d="M0.5 0.5 V9.5 L6.5 5 Z" fill="#a4b2c1"/></svg>
<svg style="position:absolute;left:1333.2px;top:350px" width="13" height="12" viewBox="0 0 13 12"><rect x="0" y="0" width="12.6" height="12" fill="#8a8a8a"/></svg>
<div style="position:absolute;left:1352.5px;top:347px;height:20px;line-height:20px;white-space:nowrap;color:#a9b4bf;font-family:'Liberation Sans', sans-serif;font-size:13px;font-style:italic;letter-spacing:-0.191px;">btn_pt</div>
<svg style="position:absolute;left:1319.75px;top:374px" width="7" height="10" viewBox="0 0 7 10"><path d="M0.5 0.5 V9.5 L6.5 5 Z" fill="#a4b2c1"/></svg>
<svg style="position:absolute;left:1333.2px;top:373px" width="13" height="12" viewBox="0 0 13 12"><rect x="0" y="0" width="12.6" height="12" fill="#8a8a8a"/></svg>
<div style="position:absolute;left:1352.5px;top:370px;height:20px;line-height:20px;white-space:nowrap;color:#a9b4bf;font-family:'Liberation Sans', sans-serif;font-size:13px;font-style:italic;letter-spacing:-0.284px;">btn_ja</div>
<svg style="position:absolute;left:1292.0px;top:398.5px" width="10" height="7" viewBox="0 0 10 7"><path d="M0.5 0.5 H9 L4.75 6.5 Z" fill="#a4b2c1"/></svg>
<svg style="position:absolute;left:1306.5px;top:397px" width="14" height="11" viewBox="0 0 14 11"><path d="M0 1 H6 V2.5 H14 V11 H0 Z" fill="#8a8a8a"/></svg>
<div style="position:absolute;left:1326.5px;top:393px;height:20px;line-height:20px;white-space:nowrap;color:#a9b4bf;font-family:'Liberation Sans', sans-serif;font-size:13px;font-style:italic;letter-spacing:-0.450px;transform:scaleX(0.9797);transform-origin:0 0;">Textures</div>
<svg style="position:absolute;left:1320.5px;top:419px" width="12" height="12" viewBox="0 0 12 12"><rect x="0.6" y="0.6" width="10.8" height="10.8" fill="none" stroke="#8a8a8a" stroke-width="1.2"/><rect x="2" y="2" width="8" height="5" fill="#8a8a8a"/><path d="M3 7 L6.5 2 M6 7 L9.5 2" stroke="#2b2d32" stroke-width="0.9"/><rect x="2" y="8" width="8" height="2" fill="#8a8a8a"/></svg>
<div style="position:absolute;left:1339.5px;top:416px;height:20px;line-height:20px;white-space:nowrap;color:#a9b4bf;font-family:'Liberation Sans', sans-serif;font-size:13px;font-style:italic;letter-spacing:-0.302px;">main - /assets/img/main.atlas</div>
<svg style="position:absolute;left:1306.5px;top:443px" width="14" height="11" viewBox="0 0 14 11"><path d="M0 1 H6 V2.5 H14 V11 H0 Z" fill="#8a8a8a"/></svg>
<div style="position:absolute;left:1326.5px;top:439px;height:20px;line-height:20px;white-space:nowrap;color:#a9b4bf;font-family:'Liberation Sans', sans-serif;font-size:13px;font-style:italic;letter-spacing:-0.450px;transform:scaleX(0.9969);transform-origin:0 0;">Materials</div>
<svg style="position:absolute;left:1292.0px;top:467.5px" width="10" height="7" viewBox="0 0 10 7"><path d="M0.5 0.5 H9 L4.75 6.5 Z" fill="#a4b2c1"/></svg>
<svg style="position:absolute;left:1306.5px;top:466px" width="14" height="11" viewBox="0 0 14 11"><path d="M0 1 H6 V2.5 H14 V11 H0 Z" fill="#8a8a8a"/></svg>
<div style="position:absolute;left:1326.5px;top:462px;height:20px;line-height:20px;white-space:nowrap;color:#a9b4bf;font-family:'Liberation Sans', sans-serif;font-size:13px;font-style:italic;letter-spacing:-0.450px;transform:scaleX(0.9376);transform-origin:0 0;">Fonts</div>
<svg style="position:absolute;left:1320.3px;top:488.2px" width="13" height="13" viewBox="0 0 13 13"><path d="M0.8 12.5 L8.2 1 H12.6 L12.3 12.5 H10.2 V10.2 H5.4 L3.9 12.5 Z M6.6 8.4 H10.2 V3.1 H9.6 Z" fill="#8a8a8a" fill-rule="evenodd"/></svg>
<div style="position:absolute;left:1339.5px;top:485px;height:20px;line-height:20px;white-space:nowrap;color:#a9b4bf;font-family:'Liberation Sans', sans-serif;font-size:13px;font-style:italic;letter-spacing:-0.230px;">latin - /assets/fonts/latin_small.font</div>
<svg style="position:absolute;left:1292.0px;top:513.5px" width="10" height="7" viewBox="0 0 10 7"><path d="M0.5 0.5 H9 L4.75 6.5 Z" fill="#a4b2c1"/></svg>
<svg style="position:absolute;left:1306.5px;top:512px" width="14" height="11" viewBox="0 0 14 11"><path d="M0 1 H6 V2.5 H14 V11 H0 Z" fill="#8a8a8a"/></svg>
<div style="position:absolute;left:1326.5px;top:508px;height:20px;line-height:20px;white-space:nowrap;color:#a9b4bf;font-family:'Liberation Sans', sans-serif;font-size:13px;font-style:italic;letter-spacing:-0.450px;transform:scaleX(0.9298);transform-origin:0 0;">Layers</div>
<svg style="position:absolute;left:1318.5px;top:534px" width="16" height="12" viewBox="0 0 16 12"><path d="M8 5 L15.5 8 L8 11 L0.5 8 Z" fill="#8a8a8a"/><path d="M8 0.5 L15.5 4 L8 7.5 L0.5 4 Z" fill="#8a8a8a" stroke="#2b2d32" stroke-width="0.9"/></svg>
<div style="position:absolute;left:1339.5px;top:531px;height:20px;line-height:20px;white-space:nowrap;color:#a9b4bf;font-family:'Liberation Sans', sans-serif;font-size:13px;font-style:italic;letter-spacing:-0.450px;transform:scaleX(0.9268);transform-origin:0 0;">box</div>
<svg style="position:absolute;left:1318.5px;top:557px" width="16" height="12" viewBox="0 0 16 12"><path d="M8 5 L15.5 8 L8 11 L0.5 8 Z" fill="#8a8a8a"/><path d="M8 0.5 L15.5 4 L8 7.5 L0.5 4 Z" fill="#8a8a8a" stroke="#2b2d32" stroke-width="0.9"/></svg>
<div style="position:absolute;left:1339.5px;top:554px;height:20px;line-height:20px;white-space:nowrap;color:#a9b4bf;font-family:'Liberation Sans', sans-serif;font-size:13px;font-style:italic;letter-spacing:-0.390px;">text</div>
<svg style="position:absolute;left:1306.5px;top:581px" width="14" height="11" viewBox="0 0 14 11"><path d="M0 1 H6 V2.5 H14 V11 H0 Z" fill="#8a8a8a"/></svg>
<div style="position:absolute;left:1326.5px;top:577px;height:20px;line-height:20px;white-space:nowrap;color:#a9b4bf;font-family:'Liberation Sans', sans-serif;font-size:13px;font-style:italic;letter-spacing:-0.450px;transform:scaleX(0.9616);transform-origin:0 0;">Layouts</div>
<svg style="position:absolute;left:1306.5px;top:604px" width="14" height="11" viewBox="0 0 14 11"><path d="M0 1 H6 V2.5 H14 V11 H0 Z" fill="#8a8a8a"/></svg>
<div style="position:absolute;left:1326.5px;top:600px;height:20px;line-height:20px;white-space:nowrap;color:#a9b4bf;font-family:'Liberation Sans', sans-serif;font-size:13px;font-style:italic;letter-spacing:-0.450px;transform:scaleX(0.9603);transform-origin:0 0;">ParticleFX</div>
<div style="position:absolute;left:15px;top:11px;height:20px;line-height:20px;white-space:nowrap;color:#a9b4bf;font-family:'Liberation Sans', sans-serif;font-size:13px;letter-spacing:-0.450px;transform:scaleX(0.9248);transform-origin:0 0;">Assets</div>
<div style="position:absolute;left:1255px;top:11px;height:20px;line-height:20px;white-space:nowrap;color:#a9b4bf;font-family:'Liberation Sans', sans-serif;font-size:13px;letter-spacing:-0.201px;">Outline</div>
<div style="position:absolute;left:1255px;top:657px;height:20px;line-height:20px;white-space:nowrap;color:#a9b4bf;font-family:'Liberation Sans', sans-serif;font-size:13px;letter-spacing:-0.361px;">Properties</div>
<div style="position:absolute;left:1261px;top:705px;height:20px;line-height:20px;white-space:nowrap;color:#a9b4bf;font-family:'Liberation Sans', sans-serif;font-size:13px;letter-spacing:0.156px;">Id</div>
<div style="position:absolute;left:1261px;top:736px;height:20px;line-height:20px;white-space:nowrap;color:#a9b4bf;font-family:'Liberation Sans', sans-serif;font-size:13px;letter-spacing:-0.450px;transform:scaleX(0.8600);transform-origin:0 0;">URL</div>
<div style="position:absolute;left:1261px;top:767px;height:20px;line-height:20px;white-space:nowrap;color:#a9b4bf;font-family:'Liberation Sans', sans-serif;font-size:13px;letter-spacing:-0.266px;">Collection</div>
<div style="position:absolute;left:1261px;top:798px;height:20px;line-height:20px;white-space:nowrap;color:#a9b4bf;font-family:'Liberation Sans', sans-serif;font-size:13px;letter-spacing:-0.450px;transform:scaleX(0.9759);transform-origin:0 0;">Exclude</div>
<div style="position:absolute;left:1349px;top:706px;height:20px;line-height:20px;white-space:nowrap;color:#eceff1;font-family:'Liberation Sans', sans-serif;font-size:13px;letter-spacing:-0.368px;">ar_proxy</div>
<div style="position:absolute;left:1349px;top:737px;height:20px;line-height:20px;white-space:nowrap;color:#7b8086;font-family:'Liberation Sans', sans-serif;font-size:13px;letter-spacing:-0.308px;">/go#ar_proxy</div>
<div style="position:absolute;left:1349px;top:767px;height:20px;line-height:20px;white-space:nowrap;color:#eceff1;font-family:'Liberation Sans', sans-serif;font-size:13px;letter-spacing:-0.081px;">/main/lang_ar.collection</div>
<div class="abs" style="left:281px;top:41px;width:942px;height:804px;background:#2a2c31;overflow:hidden;">
<svg width="942" height="804" style="position:absolute;left:0;top:0" shape-rendering="crispEdges"><rect x="15" y="0" width="1" height="788" fill="#2c2e33" /><rect x="24" y="0" width="1" height="788" fill="#2c2e33" /><rect x="33" y="0" width="1" height="788" fill="#2c2e33" /><rect x="42" y="0" width="1" height="788" fill="#2c2e33" /><rect x="60" y="0" width="1" height="788" fill="#2c2e33" /><rect x="69" y="0" width="1" height="788" fill="#2c2e33" /><rect x="78" y="0" width="1" height="788" fill="#2c2e33" /><rect x="87" y="0" width="1" height="788" fill="#2c2e33" /><rect x="96" y="0" width="1" height="788" fill="#2c2e33" /><rect x="105" y="0" width="1" height="788" fill="#2c2e33" /><rect x="114" y="0" width="1" height="788" fill="#2c2e33" /><rect x="123" y="0" width="1" height="788" fill="#2c2e33" /><rect x="132" y="0" width="1" height="788" fill="#2c2e33" /><rect x="150" y="0" width="1" height="788" fill="#2c2e33" /><rect x="159" y="0" width="1" height="788" fill="#2c2e33" /><rect x="168" y="0" width="1" height="788" fill="#2c2e33" /><rect x="177" y="0" width="1" height="788" fill="#2c2e33" /><rect x="186" y="0" width="1" height="788" fill="#2c2e33" /><rect x="195" y="0" width="1" height="788" fill="#2c2e33" /><rect x="204" y="0" width="1" height="788" fill="#2c2e33" /><rect x="213" y="0" width="1" height="788" fill="#2c2e33" /><rect x="222" y="0" width="1" height="788" fill="#2c2e33" /><rect x="240" y="0" width="1" height="788" fill="#2c2e33" /><rect x="249" y="0" width="1" height="788" fill="#2c2e33" /><rect x="258" y="0" width="1" height="788" fill="#2c2e33" /><rect x="267" y="0" width="1" height="788" fill="#2c2e33" /><rect x="276" y="0" width="1" height="788" fill="#2c2e33" /><rect x="285" y="0" width="1" height="788" fill="#2c2e33" /><rect x="294" y="0" width="1" height="788" fill="#2c2e33" /><rect x="303" y="0" width="1" height="788" fill="#2c2e33" /><rect x="312" y="0" width="1" height="788" fill="#2c2e33" /><rect x="330" y="0" width="1" height="788" fill="#2c2e33" /><rect x="339" y="0" width="1" height="788" fill="#2c2e33" /><rect x="348" y="0" width="1" height="788" fill="#2c2e33" /><rect x="357" y="0" width="1" height="788" fill="#2c2e33" /><rect x="366" y="0" width="1" height="788" fill="#2c2e33" /><rect x="375" y="0" width="1" height="788" fill="#2c2e33" /><rect x="384" y="0" width="1" height="788" fill="#2c2e33" /><rect x="393" y="0" width="1" height="788" fill="#2c2e33" /><rect x="402" y="0" width="1" height="788" fill="#2c2e33" /><rect x="420" y="0" width="1" height="788" fill="#2c2e33" /><rect x="429" y="0" width="1" height="788" fill="#2c2e33" /><rect x="438" y="0" width="1" height="788" fill="#2c2e33" /><rect x="447" y="0" width="1" height="788" fill="#2c2e33" /><rect x="456" y="0" width="1" height="788" fill="#2c2e33" /><rect x="465" y="0" width="1" height="788" fill="#2c2e33" /><rect x="474" y="0" width="1" height="788" fill="#2c2e33" /><rect x="483" y="0" width="1" height="788" fill="#2c2e33" /><rect x="492" y="0" width="1" height="788" fill="#2c2e33" /><rect x="510" y="0" width="1" height="788" fill="#2c2e33" /><rect x="519" y="0" width="1" height="788" fill="#2c2e33" /><rect x="528" y="0" width="1" height="788" fill="#2c2e33" /><rect x="537" y="0" width="1" height="788" fill="#2c2e33" /><rect x="546" y="0" width="1" height="788" fill="#2c2e33" /><rect x="555" y="0" width="1" height="788" fill="#2c2e33" /><rect x="564" y="0" width="1" height="788" fill="#2c2e33" /><rect x="573" y="0" width="1" height="788" fill="#2c2e33" /><rect x="582" y="0" width="1" height="788" fill="#2c2e33" /><rect x="600" y="0" width="1" height="788" fill="#2c2e33" /><rect x="609" y="0" width="1" height="788" fill="#2c2e33" /><rect x="618" y="0" width="1" height="788" fill="#2c2e33" /><rect x="627" y="0" width="1" height="788" fill="#2c2e33" /><rect x="636" y="0" width="1" height="788" fill="#2c2e33" /><rect x="645" y="0" width="1" height="788" fill="#2c2e33" /><rect x="654" y="0" width="1" height="788" fill="#2c2e33" /><rect x="663" y="0" width="1" height="788" fill="#2c2e33" /><rect x="672" y="0" width="1" height="788" fill="#2c2e33" /><rect x="690" y="0" width="1" height="788" fill="#2c2e33" /><rect x="699" y="0" width="1" height="788" fill="#2c2e33" /><rect x="708" y="0" width="1" height="788" fill="#2c2e33" /><rect x="717" y="0" width="1" height="788" fill="#2c2e33" /><rect x="726" y="0" width="1" height="788" fill="#2c2e33" /><rect x="735" y="0" width="1" height="788" fill="#2c2e33" /><rect x="744" y="0" width="1" height="788" fill="#2c2e33" /><rect x="753" y="0" width="1" height="788" fill="#2c2e33" /><rect x="762" y="0" width="1" height="788" fill="#2c2e33" /><rect x="780" y="0" width="1" height="788" fill="#2c2e33" /><rect x="789" y="0" width="1" height="788" fill="#2c2e33" /><rect x="798" y="0" width="1" height="788" fill="#2c2e33" /><rect x="807" y="0" width="1" height="788" fill="#2c2e33" /><rect x="816" y="0" width="1" height="788" fill="#2c2e33" /><rect x="825" y="0" width="1" height="788" fill="#2c2e33" /><rect x="834" y="0" width="1" height="788" fill="#2c2e33" /><rect x="843" y="0" width="1" height="788" fill="#2c2e33" /><rect x="852" y="0" width="1" height="788" fill="#2c2e33" /><rect x="870" y="0" width="1" height="788" fill="#2c2e33" /><rect x="879" y="0" width="1" height="788" fill="#2c2e33" /><rect x="888" y="0" width="1" height="788" fill="#2c2e33" /><rect x="897" y="0" width="1" height="788" fill="#2c2e33" /><rect x="906" y="0" width="1" height="788" fill="#2c2e33" /><rect x="915" y="0" width="1" height="788" fill="#2c2e33" /><rect x="924" y="0" width="1" height="788" fill="#2c2e33" /><rect x="933" y="0" width="1" height="788" fill="#2c2e33" /><rect x="14" y="771" width="928" height="1" fill="#2c2e33" /><rect x="14" y="762" width="928" height="1" fill="#2c2e33" /><rect x="14" y="753" width="928" height="1" fill="#2c2e33" /><rect x="14" y="744" width="928" height="1" fill="#2c2e33" /><rect x="14" y="735" width="928" height="1" fill="#2c2e33" /><rect x="14" y="726" width="928" height="1" fill="#2c2e33" /><rect x="14" y="717" width="928" height="1" fill="#2c2e33" /><rect x="14" y="708" width="928" height="1" fill="#2c2e33" /><rect x="14" y="699" width="928" height="1" fill="#2c2e33" /><rect x="14" y="681" width="928" height="1" fill="#2c2e33" /><rect x="14" y="672" width="928" height="1" fill="#2c2e33" /><rect x="14" y="663" width="928" height="1" fill="#2c2e33" /><rect x="14" y="654" width="928" height="1" fill="#2c2e33" /><rect x="14" y="645" width="928" height="1" fill="#2c2e33" /><rect x="14" y="636" width="928" height="1" fill="#2c2e33" /><rect x="14" y="627" width="928" height="1" fill="#2c2e33" /><rect x="14" y="618" width="928" height="1" fill="#2c2e33" /><rect x="14" y="609" width="928" height="1" fill="#2c2e33" /><rect x="14" y="591" width="928" height="1" fill="#2c2e33" /><rect x="14" y="582" width="928" height="1" fill="#2c2e33" /><rect x="14" y="573" width="928" height="1" fill="#2c2e33" /><rect x="14" y="564" width="928" height="1" fill="#2c2e33" /><rect x="14" y="555" width="928" height="1" fill="#2c2e33" /><rect x="14" y="546" width="928" height="1" fill="#2c2e33" /><rect x="14" y="537" width="928" height="1" fill="#2c2e33" /><rect x="14" y="528" width="928" height="1" fill="#2c2e33" /><rect x="14" y="519" width="928" height="1" fill="#2c2e33" /><rect x="14" y="501" width="928" height="1" fill="#2c2e33" /><rect x="14" y="492" width="928" height="1" fill="#2c2e33" /><rect x="14" y="483" width="928" height="1" fill="#2c2e33" /><rect x="14" y="474" width="928" height="1" fill="#2c2e33" /><rect x="14" y="465" width="928" height="1" fill="#2c2e33" /><rect x="14" y="456" width="928" height="1" fill="#2c2e33" /><rect x="14" y="447" width="928" height="1" fill="#2c2e33" /><rect x="14" y="438" width="928" height="1" fill="#2c2e33" /><rect x="14" y="429" width="928" height="1" fill="#2c2e33" /><rect x="14" y="411" width="928" height="1" fill="#2c2e33" /><rect x="14" y="402" width="928" height="1" fill="#2c2e33" /><rect x="14" y="393" width="928" height="1" fill="#2c2e33" /><rect x="14" y="384" width="928" height="1" fill="#2c2e33" /><rect x="14" y="375" width="928" height="1" fill="#2c2e33" /><rect x="14" y="366" width="928" height="1" fill="#2c2e33" /><rect x="14" y="357" width="928" height="1" fill="#2c2e33" /><rect x="14" y="348" width="928" height="1" fill="#2c2e33" /><rect x="14" y="339" width="928" height="1" fill="#2c2e33" /><rect x="14" y="321" width="928" height="1" fill="#2c2e33" /><rect x="14" y="312" width="928" height="1" fill="#2c2e33" /><rect x="14" y="303" width="928" height="1" fill="#2c2e33" /><rect x="14" y="294" width="928" height="1" fill="#2c2e33" /><rect x="14" y="285" width="928" height="1" fill="#2c2e33" /><rect x="14" y="276" width="928" height="1" fill="#2c2e33" /><rect x="14" y="267" width="928" height="1" fill="#2c2e33" /><rect x="14" y="258" width="928" height="1" fill="#2c2e33" /><rect x="14" y="249" width="928" height="1" fill="#2c2e33" /><rect x="14" y="231" width="928" height="1" fill="#2c2e33" /><rect x="14" y="222" width="928" height="1" fill="#2c2e33" /><rect x="14" y="213" width="928" height="1" fill="#2c2e33" /><rect x="14" y="204" width="928" height="1" fill="#2c2e33" /><rect x="14" y="195" width="928" height="1" fill="#2c2e33" /><rect x="14" y="186" width="928" height="1" fill="#2c2e33" /><rect x="14" y="177" width="928" height="1" fill="#2c2e33" /><rect x="14" y="168" width="928" height="1" fill="#2c2e33" /><rect x="14" y="159" width="928" height="1" fill="#2c2e33" /><rect x="14" y="141" width="928" height="1" fill="#2c2e33" /><rect x="14" y="132" width="928" height="1" fill="#2c2e33" /><rect x="14" y="123" width="928" height="1" fill="#2c2e33" /><rect x="14" y="114" width="928" height="1" fill="#2c2e33" /><rect x="14" y="105" width="928" height="1" fill="#2c2e33" /><rect x="14" y="96" width="928" height="1" fill="#2c2e33" /><rect x="14" y="87" width="928" height="1" fill="#2c2e33" /><rect x="14" y="78" width="928" height="1" fill="#2c2e33" /><rect x="14" y="69" width="928" height="1" fill="#2c2e33" /><rect x="14" y="51" width="928" height="1" fill="#2c2e33" /><rect x="14" y="42" width="928" height="1" fill="#2c2e33" /><rect x="14" y="33" width="928" height="1" fill="#2c2e33" /><rect x="14" y="24" width="928" height="1" fill="#2c2e33" /><rect x="14" y="15" width="928" height="1" fill="#2c2e33" /><rect x="14" y="6" width="928" height="1" fill="#2c2e33" /><rect x="141" y="0" width="1" height="788" fill="#46484d" /><rect x="231" y="0" width="1" height="788" fill="#46484d" /><rect x="321" y="0" width="1" height="788" fill="#46484d" /><rect x="411" y="0" width="1" height="788" fill="#46484d" /><rect x="501" y="0" width="1" height="788" fill="#46484d" /><rect x="591" y="0" width="1" height="788" fill="#46484d" /><rect x="681" y="0" width="1" height="788" fill="#46484d" /><rect x="771" y="0" width="1" height="788" fill="#46484d" /><rect x="861" y="0" width="1" height="788" fill="#46484d" /><rect x="14" y="780" width="928" height="1" fill="#46484d" /><rect x="14" y="600" width="928" height="1" fill="#46484d" /><rect x="14" y="510" width="928" height="1" fill="#46484d" /><rect x="14" y="420" width="928" height="1" fill="#46484d" /><rect x="14" y="330" width="928" height="1" fill="#46484d" /><rect x="14" y="240" width="928" height="1" fill="#46484d" /><rect x="14" y="150" width="928" height="1" fill="#46484d" /><rect x="14" y="60" width="928" height="1" fill="#46484d" /><rect x="15" y="690" width="927" height="1" fill="#9a2b2b" /><rect x="51" y="0" width="1" height="788" fill="#3f9a2a" /><rect x="51" y="114" width="865" height="1" fill="#e6e6e6" /><rect x="915" y="114" width="1" height="577" fill="#e6e6e6" /><rect x="51" y="690" width="864" height="1" fill="#e98585" /><rect x="51" y="114" width="1" height="576" fill="#8fe07c" /><rect x="123" y="132" width="721" height="1" fill="#9c9ea2" /><rect x="123" y="132" width="1" height="271" fill="#9c9ea2" /><rect x="843" y="132" width="1" height="271" fill="#9c9ea2" /><rect x="123" y="223" width="721" height="180" fill="#ffffff" /><rect x="124.80000000000001" y="224.8" width="717.4" height="176.4" fill="#1d1e20" shape-rendering="auto"/><rect x="126.60000000000002" y="226.60000000000002" width="713.8" height="172.8" fill="#939395" shape-rendering="auto"/><rect x="141" y="226" width="1" height="174" fill="#8a8d93" /><rect x="231" y="226" width="1" height="174" fill="#8a8d93" /><rect x="321" y="226" width="1" height="174" fill="#8a8d93" /><rect x="411" y="226" width="1" height="174" fill="#8a8d93" /><rect x="501" y="226" width="1" height="174" fill="#8a8d93" /><rect x="591" y="226" width="1" height="174" fill="#8a8d93" /><rect x="681" y="226" width="1" height="174" fill="#8a8d93" /><rect x="771" y="226" width="1" height="174" fill="#8a8d93" /><rect x="126" y="330" width="715" height="1" fill="#8a8d93" /><rect x="126" y="240" width="715" height="1" fill="#8a8d93" /><path d="M123.00 223.00h1.8v1.8h-1.8ZM124.80 223.00h1.8v1.8h-1.8ZM126.60 223.00h1.8v1.8h-1.8ZM128.40 223.00h1.8v1.8h-1.8ZM130.20 223.00h1.8v1.8h-1.8ZM132.00 223.00h1.8v1.8h-1.8ZM139.20 223.00h1.8v1.8h-1.8ZM141.00 223.00h1.8v1.8h-1.8ZM142.80 223.00h1.8v1.8h-1.8ZM144.60 223.00h1.8v1.8h-1.8ZM123.00 224.80h1.8v1.8h-1.8ZM132.00 224.80h1.8v1.8h-1.8ZM139.20 224.80h1.8v1.8h-1.8ZM123.00 226.60h1.8v1.8h-1.8ZM126.60 226.60h1.8v1.8h-1.8ZM128.40 226.60h1.8v1.8h-1.8ZM130.20 226.60h1.8v1.8h-1.8ZM132.00 226.60h1.8v1.8h-1.8ZM133.80 226.60h1.8v1.8h-1.8ZM135.60 226.60h1.8v1.8h-1.8ZM139.20 226.60h1.8v1.8h-1.8ZM123.00 228.40h1.8v1.8h-1.8ZM126.60 228.40h1.8v1.8h-1.8ZM132.00 228.40h1.8v1.8h-1.8ZM135.60 228.40h1.8v1.8h-1.8ZM139.20 228.40h1.8v1.8h-1.8ZM123.00 230.20h1.8v1.8h-1.8ZM126.60 230.20h1.8v1.8h-1.8ZM132.00 230.20h1.8v1.8h-1.8ZM135.60 230.20h1.8v1.8h-1.8ZM139.20 230.20h1.8v1.8h-1.8ZM123.00 232.00h1.8v1.8h-1.8ZM124.80 232.00h1.8v1.8h-1.8ZM126.60 232.00h1.8v1.8h-1.8ZM128.40 232.00h1.8v1.8h-1.8ZM130.20 232.00h1.8v1.8h-1.8ZM132.00 232.00h1.8v1.8h-1.8ZM133.80 232.00h1.8v1.8h-1.8ZM135.60 232.00h1.8v1.8h-1.8ZM137.40 232.00h1.8v1.8h-1.8ZM139.20 232.00h1.8v1.8h-1.8ZM126.60 233.80h1.8v1.8h-1.8ZM132.00 233.80h1.8v1.8h-1.8ZM135.60 233.80h1.8v1.8h-1.8ZM126.60 235.60h1.8v1.8h-1.8ZM128.40 235.60h1.8v1.8h-1.8ZM130.20 235.60h1.8v1.8h-1.8ZM132.00 235.60h1.8v1.8h-1.8ZM133.80 235.60h1.8v1.8h-1.8ZM135.60 235.60h1.8v1.8h-1.8ZM132.00 237.40h1.8v1.8h-1.8ZM123.00 239.20h1.8v1.8h-1.8ZM124.80 239.20h1.8v1.8h-1.8ZM126.60 239.20h1.8v1.8h-1.8ZM128.40 239.20h1.8v1.8h-1.8ZM130.20 239.20h1.8v1.8h-1.8ZM132.00 239.20h1.8v1.8h-1.8ZM123.00 241.00h1.8v1.8h-1.8ZM123.00 242.80h1.8v1.8h-1.8ZM123.00 244.60h1.8v1.8h-1.8Z" fill="#ffffff" shape-rendering="auto"/><path d="M133.80 223.00h1.8v1.8h-1.8ZM135.60 223.00h1.8v1.8h-1.8ZM137.40 223.00h1.8v1.8h-1.8ZM124.80 224.80h1.8v1.8h-1.8ZM126.60 224.80h1.8v1.8h-1.8ZM128.40 224.80h1.8v1.8h-1.8ZM130.20 224.80h1.8v1.8h-1.8ZM133.80 224.80h1.8v1.8h-1.8ZM135.60 224.80h1.8v1.8h-1.8ZM137.40 224.80h1.8v1.8h-1.8ZM141.00 224.80h1.8v1.8h-1.8ZM142.80 224.80h1.8v1.8h-1.8ZM144.60 224.80h1.8v1.8h-1.8ZM124.80 226.60h1.8v1.8h-1.8ZM137.40 226.60h1.8v1.8h-1.8ZM141.00 226.60h1.8v1.8h-1.8ZM124.80 228.40h1.8v1.8h-1.8ZM128.40 228.40h1.8v1.8h-1.8ZM130.20 228.40h1.8v1.8h-1.8ZM133.80 228.40h1.8v1.8h-1.8ZM137.40 228.40h1.8v1.8h-1.8ZM141.00 228.40h1.8v1.8h-1.8ZM124.80 230.20h1.8v1.8h-1.8ZM128.40 230.20h1.8v1.8h-1.8ZM130.20 230.20h1.8v1.8h-1.8ZM133.80 230.20h1.8v1.8h-1.8ZM137.40 230.20h1.8v1.8h-1.8ZM141.00 230.20h1.8v1.8h-1.8ZM141.00 232.00h1.8v1.8h-1.8ZM123.00 233.80h1.8v1.8h-1.8ZM124.80 233.80h1.8v1.8h-1.8ZM128.40 233.80h1.8v1.8h-1.8ZM130.20 233.80h1.8v1.8h-1.8ZM133.80 233.80h1.8v1.8h-1.8ZM137.40 233.80h1.8v1.8h-1.8ZM139.20 233.80h1.8v1.8h-1.8ZM141.00 233.80h1.8v1.8h-1.8ZM123.00 235.60h1.8v1.8h-1.8ZM124.80 235.60h1.8v1.8h-1.8ZM137.40 235.60h1.8v1.8h-1.8ZM123.00 237.40h1.8v1.8h-1.8ZM124.80 237.40h1.8v1.8h-1.8ZM126.60 237.40h1.8v1.8h-1.8ZM128.40 237.40h1.8v1.8h-1.8ZM130.20 237.40h1.8v1.8h-1.8ZM133.80 237.40h1.8v1.8h-1.8ZM135.60 237.40h1.8v1.8h-1.8ZM137.40 237.40h1.8v1.8h-1.8ZM133.80 239.20h1.8v1.8h-1.8ZM124.80 241.00h1.8v1.8h-1.8ZM126.60 241.00h1.8v1.8h-1.8ZM128.40 241.00h1.8v1.8h-1.8ZM130.20 241.00h1.8v1.8h-1.8ZM132.00 241.00h1.8v1.8h-1.8ZM133.80 241.00h1.8v1.8h-1.8ZM124.80 242.80h1.8v1.8h-1.8ZM124.80 244.60h1.8v1.8h-1.8Z" fill="#1d1e20" shape-rendering="auto"/><path d="M142.80 226.60h1.8v1.8h-1.8ZM144.60 226.60h1.8v1.8h-1.8ZM142.80 228.40h1.8v1.8h-1.8ZM144.60 228.40h1.8v1.8h-1.8ZM142.80 230.20h1.8v1.8h-1.8ZM144.60 230.20h1.8v1.8h-1.8ZM142.80 232.00h1.8v1.8h-1.8ZM144.60 232.00h1.8v1.8h-1.8ZM142.80 233.80h1.8v1.8h-1.8ZM144.60 233.80h1.8v1.8h-1.8ZM139.20 235.60h1.8v1.8h-1.8ZM141.00 235.60h1.8v1.8h-1.8ZM142.80 235.60h1.8v1.8h-1.8ZM144.60 235.60h1.8v1.8h-1.8ZM139.20 237.40h1.8v1.8h-1.8ZM141.00 237.40h1.8v1.8h-1.8ZM142.80 237.40h1.8v1.8h-1.8ZM144.60 237.40h1.8v1.8h-1.8ZM135.60 239.20h1.8v1.8h-1.8ZM137.40 239.20h1.8v1.8h-1.8ZM139.20 239.20h1.8v1.8h-1.8ZM141.00 239.20h1.8v1.8h-1.8ZM142.80 239.20h1.8v1.8h-1.8ZM144.60 239.20h1.8v1.8h-1.8ZM135.60 241.00h1.8v1.8h-1.8ZM137.40 241.00h1.8v1.8h-1.8ZM139.20 241.00h1.8v1.8h-1.8ZM141.00 241.00h1.8v1.8h-1.8ZM142.80 241.00h1.8v1.8h-1.8ZM144.60 241.00h1.8v1.8h-1.8ZM126.60 242.80h1.8v1.8h-1.8ZM128.40 242.80h1.8v1.8h-1.8ZM130.20 242.80h1.8v1.8h-1.8ZM132.00 242.80h1.8v1.8h-1.8ZM133.80 242.80h1.8v1.8h-1.8ZM135.60 242.80h1.8v1.8h-1.8ZM137.40 242.80h1.8v1.8h-1.8ZM139.20 242.80h1.8v1.8h-1.8ZM141.00 242.80h1.8v1.8h-1.8ZM142.80 242.80h1.8v1.8h-1.8ZM144.60 242.80h1.8v1.8h-1.8ZM126.60 244.60h1.8v1.8h-1.8ZM128.40 244.60h1.8v1.8h-1.8ZM130.20 244.60h1.8v1.8h-1.8ZM132.00 244.60h1.8v1.8h-1.8ZM133.80 244.60h1.8v1.8h-1.8ZM135.60 244.60h1.8v1.8h-1.8ZM137.40 244.60h1.8v1.8h-1.8ZM139.20 244.60h1.8v1.8h-1.8ZM141.00 244.60h1.8v1.8h-1.8ZM142.80 244.60h1.8v1.8h-1.8ZM144.60 244.60h1.8v1.8h-1.8Z" fill="#939395" shape-rendering="auto"/><path d="M842.20 223.00h1.8v1.8h-1.8ZM840.40 223.00h1.8v1.8h-1.8ZM838.60 223.00h1.8v1.8h-1.8ZM836.80 223.00h1.8v1.8h-1.8ZM835.00 223.00h1.8v1.8h-1.8ZM833.20 223.00h1.8v1.8h-1.8ZM826.00 223.00h1.8v1.8h-1.8ZM824.20 223.00h1.8v1.8h-1.8ZM822.40 223.00h1.8v1.8h-1.8ZM820.60 223.00h1.8v1.8h-1.8ZM842.20 224.80h1.8v1.8h-1.8ZM833.20 224.80h1.8v1.8h-1.8ZM826.00 224.80h1.8v1.8h-1.8ZM842.20 226.60h1.8v1.8h-1.8ZM838.60 226.60h1.8v1.8h-1.8ZM836.80 226.60h1.8v1.8h-1.8ZM835.00 226.60h1.8v1.8h-1.8ZM833.20 226.60h1.8v1.8h-1.8ZM831.40 226.60h1.8v1.8h-1.8ZM829.60 226.60h1.8v1.8h-1.8ZM826.00 226.60h1.8v1.8h-1.8ZM842.20 228.40h1.8v1.8h-1.8ZM838.60 228.40h1.8v1.8h-1.8ZM833.20 228.40h1.8v1.8h-1.8ZM829.60 228.40h1.8v1.8h-1.8ZM826.00 228.40h1.8v1.8h-1.8ZM842.20 230.20h1.8v1.8h-1.8ZM838.60 230.20h1.8v1.8h-1.8ZM833.20 230.20h1.8v1.8h-1.8ZM829.60 230.20h1.8v1.8h-1.8ZM826.00 230.20h1.8v1.8h-1.8ZM842.20 232.00h1.8v1.8h-1.8ZM840.40 232.00h1.8v1.8h-1.8ZM838.60 232.00h1.8v1.8h-1.8ZM836.80 232.00h1.8v1.8h-1.8ZM835.00 232.00h1.8v1.8h-1.8ZM833.20 232.00h1.8v1.8h-1.8ZM831.40 232.00h1.8v1.8h-1.8ZM829.60 232.00h1.8v1.8h-1.8ZM827.80 232.00h1.8v1.8h-1.8ZM826.00 232.00h1.8v1.8h-1.8ZM838.60 233.80h1.8v1.8h-1.8ZM833.20 233.80h1.8v1.8h-1.8ZM829.60 233.80h1.8v1.8h-1.8ZM838.60 235.60h1.8v1.8h-1.8ZM836.80 235.60h1.8v1.8h-1.8ZM835.00 235.60h1.8v1.8h-1.8ZM833.20 235.60h1.8v1.8h-1.8ZM831.40 235.60h1.8v1.8h-1.8ZM829.60 235.60h1.8v1.8h-1.8ZM833.20 237.40h1.8v1.8h-1.8ZM842.20 239.20h1.8v1.8h-1.8ZM840.40 239.20h1.8v1.8h-1.8ZM838.60 239.20h1.8v1.8h-1.8ZM836.80 239.20h1.8v1.8h-1.8ZM835.00 239.20h1.8v1.8h-1.8ZM833.20 239.20h1.8v1.8h-1.8ZM842.20 241.00h1.8v1.8h-1.8ZM842.20 242.80h1.8v1.8h-1.8ZM842.20 244.60h1.8v1.8h-1.8Z" fill="#ffffff" shape-rendering="auto"/><path d="M831.40 223.00h1.8v1.8h-1.8ZM829.60 223.00h1.8v1.8h-1.8ZM827.80 223.00h1.8v1.8h-1.8ZM840.40 224.80h1.8v1.8h-1.8ZM838.60 224.80h1.8v1.8h-1.8ZM836.80 224.80h1.8v1.8h-1.8ZM835.00 224.80h1.8v1.8h-1.8ZM831.40 224.80h1.8v1.8h-1.8ZM829.60 224.80h1.8v1.8h-1.8ZM827.80 224.80h1.8v1.8h-1.8ZM824.20 224.80h1.8v1.8h-1.8ZM822.40 224.80h1.8v1.8h-1.8ZM820.60 224.80h1.8v1.8h-1.8ZM840.40 226.60h1.8v1.8h-1.8ZM827.80 226.60h1.8v1.8h-1.8ZM824.20 226.60h1.8v1.8h-1.8ZM840.40 228.40h1.8v1.8h-1.8ZM836.80 228.40h1.8v1.8h-1.8ZM835.00 228.40h1.8v1.8h-1.8ZM831.40 228.40h1.8v1.8h-1.8ZM827.80 228.40h1.8v1.8h-1.8ZM824.20 228.40h1.8v1.8h-1.8ZM840.40 230.20h1.8v1.8h-1.8ZM836.80 230.20h1.8v1.8h-1.8ZM835.00 230.20h1.8v1.8h-1.8ZM831.40 230.20h1.8v1.8h-1.8ZM827.80 230.20h1.8v1.8h-1.8ZM824.20 230.20h1.8v1.8h-1.8ZM824.20 232.00h1.8v1.8h-1.8ZM842.20 233.80h1.8v1.8h-1.8ZM840.40 233.80h1.8v1.8h-1.8ZM836.80 233.80h1.8v1.8h-1.8ZM835.00 233.80h1.8v1.8h-1.8ZM831.40 233.80h1.8v1.8h-1.8ZM827.80 233.80h1.8v1.8h-1.8ZM826.00 233.80h1.8v1.8h-1.8ZM824.20 233.80h1.8v1.8h-1.8ZM842.20 235.60h1.8v1.8h-1.8ZM840.40 235.60h1.8v1.8h-1.8ZM827.80 235.60h1.8v1.8h-1.8ZM842.20 237.40h1.8v1.8h-1.8ZM840.40 237.40h1.8v1.8h-1.8ZM838.60 237.40h1.8v1.8h-1.8ZM836.80 237.40h1.8v1.8h-1.8ZM835.00 237.40h1.8v1.8h-1.8ZM831.40 237.40h1.8v1.8h-1.8ZM829.60 237.40h1.8v1.8h-1.8ZM827.80 237.40h1.8v1.8h-1.8ZM831.40 239.20h1.8v1.8h-1.8ZM840.40 241.00h1.8v1.8h-1.8ZM838.60 241.00h1.8v1.8h-1.8ZM836.80 241.00h1.8v1.8h-1.8ZM835.00 241.00h1.8v1.8h-1.8ZM833.20 241.00h1.8v1.8h-1.8ZM831.40 241.00h1.8v1.8h-1.8ZM840.40 242.80h1.8v1.8h-1.8ZM840.40 244.60h1.8v1.8h-1.8Z" fill="#1d1e20" shape-rendering="auto"/><path d="M822.40 226.60h1.8v1.8h-1.8ZM820.60 226.60h1.8v1.8h-1.8ZM822.40 228.40h1.8v1.8h-1.8ZM820.60 228.40h1.8v1.8h-1.8ZM822.40 230.20h1.8v1.8h-1.8ZM820.60 230.20h1.8v1.8h-1.8ZM822.40 232.00h1.8v1.8h-1.8ZM820.60 232.00h1.8v1.8h-1.8ZM822.40 233.80h1.8v1.8h-1.8ZM820.60 233.80h1.8v1.8h-1.8ZM826.00 235.60h1.8v1.8h-1.8ZM824.20 235.60h1.8v1.8h-1.8ZM822.40 235.60h1.8v1.8h-1.8ZM820.60 235.60h1.8v1.8h-1.8ZM826.00 237.40h1.8v1.8h-1.8ZM824.20 237.40h1.8v1.8h-1.8ZM822.40 237.40h1.8v1.8h-1.8ZM820.60 237.40h1.8v1.8h-1.8ZM829.60 239.20h1.8v1.8h-1.8ZM827.80 239.20h1.8v1.8h-1.8ZM826.00 239.20h1.8v1.8h-1.8ZM824.20 239.20h1.8v1.8h-1.8ZM822.40 239.20h1.8v1.8h-1.8ZM820.60 239.20h1.8v1.8h-1.8ZM829.60 241.00h1.8v1.8h-1.8ZM827.80 241.00h1.8v1.8h-1.8ZM826.00 241.00h1.8v1.8h-1.8ZM824.20 241.00h1.8v1.8h-1.8ZM822.40 241.00h1.8v1.8h-1.8ZM820.60 241.00h1.8v1.8h-1.8ZM838.60 242.80h1.8v1.8h-1.8ZM836.80 242.80h1.8v1.8h-1.8ZM835.00 242.80h1.8v1.8h-1.8ZM833.20 242.80h1.8v1.8h-1.8ZM831.40 242.80h1.8v1.8h-1.8ZM829.60 242.80h1.8v1.8h-1.8ZM827.80 242.80h1.8v1.8h-1.8ZM826.00 242.80h1.8v1.8h-1.8ZM824.20 242.80h1.8v1.8h-1.8ZM822.40 242.80h1.8v1.8h-1.8ZM820.60 242.80h1.8v1.8h-1.8ZM838.60 244.60h1.8v1.8h-1.8ZM836.80 244.60h1.8v1.8h-1.8ZM835.00 244.60h1.8v1.8h-1.8ZM833.20 244.60h1.8v1.8h-1.8ZM831.40 244.60h1.8v1.8h-1.8ZM829.60 244.60h1.8v1.8h-1.8ZM827.80 244.60h1.8v1.8h-1.8ZM826.00 244.60h1.8v1.8h-1.8ZM824.20 244.60h1.8v1.8h-1.8ZM822.40 244.60h1.8v1.8h-1.8ZM820.60 244.60h1.8v1.8h-1.8Z" fill="#939395" shape-rendering="auto"/><path d="M123.00 401.20h1.8v1.8h-1.8ZM124.80 401.20h1.8v1.8h-1.8ZM126.60 401.20h1.8v1.8h-1.8ZM128.40 401.20h1.8v1.8h-1.8ZM130.20 401.20h1.8v1.8h-1.8ZM132.00 401.20h1.8v1.8h-1.8ZM139.20 401.20h1.8v1.8h-1.8ZM141.00 401.20h1.8v1.8h-1.8ZM142.80 401.20h1.8v1.8h-1.8ZM144.60 401.20h1.8v1.8h-1.8ZM123.00 399.40h1.8v1.8h-1.8ZM132.00 399.40h1.8v1.8h-1.8ZM139.20 399.40h1.8v1.8h-1.8ZM123.00 397.60h1.8v1.8h-1.8ZM126.60 397.60h1.8v1.8h-1.8ZM128.40 397.60h1.8v1.8h-1.8ZM130.20 397.60h1.8v1.8h-1.8ZM132.00 397.60h1.8v1.8h-1.8ZM133.80 397.60h1.8v1.8h-1.8ZM135.60 397.60h1.8v1.8h-1.8ZM139.20 397.60h1.8v1.8h-1.8ZM123.00 395.80h1.8v1.8h-1.8ZM126.60 395.80h1.8v1.8h-1.8ZM132.00 395.80h1.8v1.8h-1.8ZM135.60 395.80h1.8v1.8h-1.8ZM139.20 395.80h1.8v1.8h-1.8ZM123.00 394.00h1.8v1.8h-1.8ZM126.60 394.00h1.8v1.8h-1.8ZM132.00 394.00h1.8v1.8h-1.8ZM135.60 394.00h1.8v1.8h-1.8ZM139.20 394.00h1.8v1.8h-1.8ZM123.00 392.20h1.8v1.8h-1.8ZM124.80 392.20h1.8v1.8h-1.8ZM126.60 392.20h1.8v1.8h-1.8ZM128.40 392.20h1.8v1.8h-1.8ZM130.20 392.20h1.8v1.8h-1.8ZM132.00 392.20h1.8v1.8h-1.8ZM133.80 392.20h1.8v1.8h-1.8ZM135.60 392.20h1.8v1.8h-1.8ZM137.40 392.20h1.8v1.8h-1.8ZM139.20 392.20h1.8v1.8h-1.8ZM126.60 390.40h1.8v1.8h-1.8ZM132.00 390.40h1.8v1.8h-1.8ZM135.60 390.40h1.8v1.8h-1.8ZM126.60 388.60h1.8v1.8h-1.8ZM128.40 388.60h1.8v1.8h-1.8ZM130.20 388.60h1.8v1.8h-1.8ZM132.00 388.60h1.8v1.8h-1.8ZM133.80 388.60h1.8v1.8h-1.8ZM135.60 388.60h1.8v1.8h-1.8ZM132.00 386.80h1.8v1.8h-1.8ZM123.00 385.00h1.8v1.8h-1.8ZM124.80 385.00h1.8v1.8h-1.8ZM126.60 385.00h1.8v1.8h-1.8ZM128.40 385.00h1.8v1.8h-1.8ZM130.20 385.00h1.8v1.8h-1.8ZM132.00 385.00h1.8v1.8h-1.8ZM123.00 383.20h1.8v1.8h-1.8ZM123.00 381.40h1.8v1.8h-1.8ZM123.00 379.60h1.8v1.8h-1.8Z" fill="#ffffff" shape-rendering="auto"/><path d="M133.80 401.20h1.8v1.8h-1.8ZM135.60 401.20h1.8v1.8h-1.8ZM137.40 401.20h1.8v1.8h-1.8ZM124.80 399.40h1.8v1.8h-1.8ZM126.60 399.40h1.8v1.8h-1.8ZM128.40 399.40h1.8v1.8h-1.8ZM130.20 399.40h1.8v1.8h-1.8ZM133.80 399.40h1.8v1.8h-1.8ZM135.60 399.40h1.8v1.8h-1.8ZM137.40 399.40h1.8v1.8h-1.8ZM141.00 399.40h1.8v1.8h-1.8ZM142.80 399.40h1.8v1.8h-1.8ZM144.60 399.40h1.8v1.8h-1.8ZM124.80 397.60h1.8v1.8h-1.8ZM137.40 397.60h1.8v1.8h-1.8ZM141.00 397.60h1.8v1.8h-1.8ZM124.80 395.80h1.8v1.8h-1.8ZM128.40 395.80h1.8v1.8h-1.8ZM130.20 395.80h1.8v1.8h-1.8ZM133.80 395.80h1.8v1.8h-1.8ZM137.40 395.80h1.8v1.8h-1.8ZM141.00 395.80h1.8v1.8h-1.8ZM124.80 394.00h1.8v1.8h-1.8ZM128.40 394.00h1.8v1.8h-1.8ZM130.20 394.00h1.8v1.8h-1.8ZM133.80 394.00h1.8v1.8h-1.8ZM137.40 394.00h1.8v1.8h-1.8ZM141.00 394.00h1.8v1.8h-1.8ZM141.00 392.20h1.8v1.8h-1.8ZM123.00 390.40h1.8v1.8h-1.8ZM124.80 390.40h1.8v1.8h-1.8ZM128.40 390.40h1.8v1.8h-1.8ZM130.20 390.40h1.8v1.8h-1.8ZM133.80 390.40h1.8v1.8h-1.8ZM137.40 390.40h1.8v1.8h-1.8ZM139.20 390.40h1.8v1.8h-1.8ZM141.00 390.40h1.8v1.8h-1.8ZM123.00 388.60h1.8v1.8h-1.8ZM124.80 388.60h1.8v1.8h-1.8ZM137.40 388.60h1.8v1.8h-1.8ZM123.00 386.80h1.8v1.8h-1.8ZM124.80 386.80h1.8v1.8h-1.8ZM126.60 386.80h1.8v1.8h-1.8ZM128.40 386.80h1.8v1.8h-1.8ZM130.20 386.80h1.8v1.8h-1.8ZM133.80 386.80h1.8v1.8h-1.8ZM135.60 386.80h1.8v1.8h-1.8ZM137.40 386.80h1.8v1.8h-1.8ZM133.80 385.00h1.8v1.8h-1.8ZM124.80 383.20h1.8v1.8h-1.8ZM126.60 383.20h1.8v1.8h-1.8ZM128.40 383.20h1.8v1.8h-1.8ZM130.20 383.20h1.8v1.8h-1.8ZM132.00 383.20h1.8v1.8h-1.8ZM133.80 383.20h1.8v1.8h-1.8ZM124.80 381.40h1.8v1.8h-1.8ZM124.80 379.60h1.8v1.8h-1.8Z" fill="#1d1e20" shape-rendering="auto"/><path d="M142.80 397.60h1.8v1.8h-1.8ZM144.60 397.60h1.8v1.8h-1.8ZM142.80 395.80h1.8v1.8h-1.8ZM144.60 395.80h1.8v1.8h-1.8ZM142.80 394.00h1.8v1.8h-1.8ZM144.60 394.00h1.8v1.8h-1.8ZM142.80 392.20h1.8v1.8h-1.8ZM144.60 392.20h1.8v1.8h-1.8ZM142.80 390.40h1.8v1.8h-1.8ZM144.60 390.40h1.8v1.8h-1.8ZM139.20 388.60h1.8v1.8h-1.8ZM141.00 388.60h1.8v1.8h-1.8ZM142.80 388.60h1.8v1.8h-1.8ZM144.60 388.60h1.8v1.8h-1.8ZM139.20 386.80h1.8v1.8h-1.8ZM141.00 386.80h1.8v1.8h-1.8ZM142.80 386.80h1.8v1.8h-1.8ZM144.60 386.80h1.8v1.8h-1.8ZM135.60 385.00h1.8v1.8h-1.8ZM137.40 385.00h1.8v1.8h-1.8ZM139.20 385.00h1.8v1.8h-1.8ZM141.00 385.00h1.8v1.8h-1.8ZM142.80 385.00h1.8v1.8h-1.8ZM144.60 385.00h1.8v1.8h-1.8ZM135.60 383.20h1.8v1.8h-1.8ZM137.40 383.20h1.8v1.8h-1.8ZM139.20 383.20h1.8v1.8h-1.8ZM141.00 383.20h1.8v1.8h-1.8ZM142.80 383.20h1.8v1.8h-1.8ZM144.60 383.20h1.8v1.8h-1.8ZM126.60 381.40h1.8v1.8h-1.8ZM128.40 381.40h1.8v1.8h-1.8ZM130.20 381.40h1.8v1.8h-1.8ZM132.00 381.40h1.8v1.8h-1.8ZM133.80 381.40h1.8v1.8h-1.8ZM135.60 381.40h1.8v1.8h-1.8ZM137.40 381.40h1.8v1.8h-1.8ZM139.20 381.40h1.8v1.8h-1.8ZM141.00 381.40h1.8v1.8h-1.8ZM142.80 381.40h1.8v1.8h-1.8ZM144.60 381.40h1.8v1.8h-1.8ZM126.60 379.60h1.8v1.8h-1.8ZM128.40 379.60h1.8v1.8h-1.8ZM130.20 379.60h1.8v1.8h-1.8ZM132.00 379.60h1.8v1.8h-1.8ZM133.80 379.60h1.8v1.8h-1.8ZM135.60 379.60h1.8v1.8h-1.8ZM137.40 379.60h1.8v1.8h-1.8ZM139.20 379.60h1.8v1.8h-1.8ZM141.00 379.60h1.8v1.8h-1.8ZM142.80 379.60h1.8v1.8h-1.8ZM144.60 379.60h1.8v1.8h-1.8Z" fill="#939395" shape-rendering="auto"/><path d="M842.20 401.20h1.8v1.8h-1.8ZM840.40 401.20h1.8v1.8h-1.8ZM838.60 401.20h1.8v1.8h-1.8ZM836.80 401.20h1.8v1.8h-1.8ZM835.00 401.20h1.8v1.8h-1.8ZM833.20 401.20h1.8v1.8h-1.8ZM826.00 401.20h1.8v1.8h-1.8ZM824.20 401.20h1.8v1.8h-1.8ZM822.40 401.20h1.8v1.8h-1.8ZM820.60 401.20h1.8v1.8h-1.8ZM842.20 399.40h1.8v1.8h-1.8ZM833.20 399.40h1.8v1.8h-1.8ZM826.00 399.40h1.8v1.8h-1.8ZM842.20 397.60h1.8v1.8h-1.8ZM838.60 397.60h1.8v1.8h-1.8ZM836.80 397.60h1.8v1.8h-1.8ZM835.00 397.60h1.8v1.8h-1.8ZM833.20 397.60h1.8v1.8h-1.8ZM831.40 397.60h1.8v1.8h-1.8ZM829.60 397.60h1.8v1.8h-1.8ZM826.00 397.60h1.8v1.8h-1.8ZM842.20 395.80h1.8v1.8h-1.8ZM838.60 395.80h1.8v1.8h-1.8ZM833.20 395.80h1.8v1.8h-1.8ZM829.60 395.80h1.8v1.8h-1.8ZM826.00 395.80h1.8v1.8h-1.8ZM842.20 394.00h1.8v1.8h-1.8ZM838.60 394.00h1.8v1.8h-1.8ZM833.20 394.00h1.8v1.8h-1.8ZM829.60 394.00h1.8v1.8h-1.8ZM826.00 394.00h1.8v1.8h-1.8ZM842.20 392.20h1.8v1.8h-1.8ZM840.40 392.20h1.8v1.8h-1.8ZM838.60 392.20h1.8v1.8h-1.8ZM836.80 392.20h1.8v1.8h-1.8ZM835.00 392.20h1.8v1.8h-1.8ZM833.20 392.20h1.8v1.8h-1.8ZM831.40 392.20h1.8v1.8h-1.8ZM829.60 392.20h1.8v1.8h-1.8ZM827.80 392.20h1.8v1.8h-1.8ZM826.00 392.20h1.8v1.8h-1.8ZM838.60 390.40h1.8v1.8h-1.8ZM833.20 390.40h1.8v1.8h-1.8ZM829.60 390.40h1.8v1.8h-1.8ZM838.60 388.60h1.8v1.8h-1.8ZM836.80 388.60h1.8v1.8h-1.8ZM835.00 388.60h1.8v1.8h-1.8ZM833.20 388.60h1.8v1.8h-1.8ZM831.40 388.60h1.8v1.8h-1.8ZM829.60 388.60h1.8v1.8h-1.8ZM833.20 386.80h1.8v1.8h-1.8ZM842.20 385.00h1.8v1.8h-1.8ZM840.40 385.00h1.8v1.8h-1.8ZM838.60 385.00h1.8v1.8h-1.8ZM836.80 385.00h1.8v1.8h-1.8ZM835.00 385.00h1.8v1.8h-1.8ZM833.20 385.00h1.8v1.8h-1.8ZM842.20 383.20h1.8v1.8h-1.8ZM842.20 381.40h1.8v1.8h-1.8ZM842.20 379.60h1.8v1.8h-1.8Z" fill="#ffffff" shape-rendering="auto"/><path d="M831.40 401.20h1.8v1.8h-1.8ZM829.60 401.20h1.8v1.8h-1.8ZM827.80 401.20h1.8v1.8h-1.8ZM840.40 399.40h1.8v1.8h-1.8ZM838.60 399.40h1.8v1.8h-1.8ZM836.80 399.40h1.8v1.8h-1.8ZM835.00 399.40h1.8v1.8h-1.8ZM831.40 399.40h1.8v1.8h-1.8ZM829.60 399.40h1.8v1.8h-1.8ZM827.80 399.40h1.8v1.8h-1.8ZM824.20 399.40h1.8v1.8h-1.8ZM822.40 399.40h1.8v1.8h-1.8ZM820.60 399.40h1.8v1.8h-1.8ZM840.40 397.60h1.8v1.8h-1.8ZM827.80 397.60h1.8v1.8h-1.8ZM824.20 397.60h1.8v1.8h-1.8ZM840.40 395.80h1.8v1.8h-1.8ZM836.80 395.80h1.8v1.8h-1.8ZM835.00 395.80h1.8v1.8h-1.8ZM831.40 395.80h1.8v1.8h-1.8ZM827.80 395.80h1.8v1.8h-1.8ZM824.20 395.80h1.8v1.8h-1.8ZM840.40 394.00h1.8v1.8h-1.8ZM836.80 394.00h1.8v1.8h-1.8ZM835.00 394.00h1.8v1.8h-1.8ZM831.40 394.00h1.8v1.8h-1.8ZM827.80 394.00h1.8v1.8h-1.8ZM824.20 394.00h1.8v1.8h-1.8ZM824.20 392.20h1.8v1.8h-1.8ZM842.20 390.40h1.8v1.8h-1.8ZM840.40 390.40h1.8v1.8h-1.8ZM836.80 390.40h1.8v1.8h-1.8ZM835.00 390.40h1.8v1.8h-1.8ZM831.40 390.40h1.8v1.8h-1.8ZM827.80 390.40h1.8v1.8h-1.8ZM826.00 390.40h1.8v1.8h-1.8ZM824.20 390.40h1.8v1.8h-1.8ZM842.20 388.60h1.8v1.8h-1.8ZM840.40 388.60h1.8v1.8h-1.8ZM827.80 388.60h1.8v1.8h-1.8ZM842.20 386.80h1.8v1.8h-1.8ZM840.40 386.80h1.8v1.8h-1.8ZM838.60 386.80h1.8v1.8h-1.8ZM836.80 386.80h1.8v1.8h-1.8ZM835.00 386.80h1.8v1.8h-1.8ZM831.40 386.80h1.8v1.8h-1.8ZM829.60 386.80h1.8v1.8h-1.8ZM827.80 386.80h1.8v1.8h-1.8ZM831.40 385.00h1.8v1.8h-1.8ZM840.40 383.20h1.8v1.8h-1.8ZM838.60 383.20h1.8v1.8h-1.8ZM836.80 383.20h1.8v1.8h-1.8ZM835.00 383.20h1.8v1.8h-1.8ZM833.20 383.20h1.8v1.8h-1.8ZM831.40 383.20h1.8v1.8h-1.8ZM840.40 381.40h1.8v1.8h-1.8ZM840.40 379.60h1.8v1.8h-1.8Z" fill="#1d1e20" shape-rendering="auto"/><path d="M822.40 397.60h1.8v1.8h-1.8ZM820.60 397.60h1.8v1.8h-1.8ZM822.40 395.80h1.8v1.8h-1.8ZM820.60 395.80h1.8v1.8h-1.8ZM822.40 394.00h1.8v1.8h-1.8ZM820.60 394.00h1.8v1.8h-1.8ZM822.40 392.20h1.8v1.8h-1.8ZM820.60 392.20h1.8v1.8h-1.8ZM822.40 390.40h1.8v1.8h-1.8ZM820.60 390.40h1.8v1.8h-1.8ZM826.00 388.60h1.8v1.8h-1.8ZM824.20 388.60h1.8v1.8h-1.8ZM822.40 388.60h1.8v1.8h-1.8ZM820.60 388.60h1.8v1.8h-1.8ZM826.00 386.80h1.8v1.8h-1.8ZM824.20 386.80h1.8v1.8h-1.8ZM822.40 386.80h1.8v1.8h-1.8ZM820.60 386.80h1.8v1.8h-1.8ZM829.60 385.00h1.8v1.8h-1.8ZM827.80 385.00h1.8v1.8h-1.8ZM826.00 385.00h1.8v1.8h-1.8ZM824.20 385.00h1.8v1.8h-1.8ZM822.40 385.00h1.8v1.8h-1.8ZM820.60 385.00h1.8v1.8h-1.8ZM829.60 383.20h1.8v1.8h-1.8ZM827.80 383.20h1.8v1.8h-1.8ZM826.00 383.20h1.8v1.8h-1.8ZM824.20 383.20h1.8v1.8h-1.8ZM822.40 383.20h1.8v1.8h-1.8ZM820.60 383.20h1.8v1.8h-1.8ZM838.60 381.40h1.8v1.8h-1.8ZM836.80 381.40h1.8v1.8h-1.8ZM835.00 381.40h1.8v1.8h-1.8ZM833.20 381.40h1.8v1.8h-1.8ZM831.40 381.40h1.8v1.8h-1.8ZM829.60 381.40h1.8v1.8h-1.8ZM827.80 381.40h1.8v1.8h-1.8ZM826.00 381.40h1.8v1.8h-1.8ZM824.20 381.40h1.8v1.8h-1.8ZM822.40 381.40h1.8v1.8h-1.8ZM820.60 381.40h1.8v1.8h-1.8ZM838.60 379.60h1.8v1.8h-1.8ZM836.80 379.60h1.8v1.8h-1.8ZM835.00 379.60h1.8v1.8h-1.8ZM833.20 379.60h1.8v1.8h-1.8ZM831.40 379.60h1.8v1.8h-1.8ZM829.60 379.60h1.8v1.8h-1.8ZM827.80 379.60h1.8v1.8h-1.8ZM826.00 379.60h1.8v1.8h-1.8ZM824.20 379.60h1.8v1.8h-1.8ZM822.40 379.60h1.8v1.8h-1.8ZM820.60 379.60h1.8v1.8h-1.8Z" fill="#939395" shape-rendering="auto"/><rect x="123" y="537" width="181" height="1" fill="#9c9ea2" /><rect x="123" y="627" width="181" height="1" fill="#9c9ea2" /><rect x="123" y="537" width="1" height="91" fill="#9c9ea2" /><rect x="303" y="537" width="181" height="1" fill="#9c9ea2" /><rect x="303" y="627" width="181" height="1" fill="#9c9ea2" /><rect x="303" y="537" width="1" height="91" fill="#9c9ea2" /><rect x="483" y="537" width="181" height="1" fill="#9c9ea2" /><rect x="483" y="627" width="181" height="1" fill="#9c9ea2" /><rect x="483" y="537" width="1" height="91" fill="#9c9ea2" /><rect x="663" y="537" width="181" height="1" fill="#9c9ea2" /><rect x="663" y="627" width="181" height="1" fill="#9c9ea2" /><rect x="663" y="537" width="1" height="91" fill="#9c9ea2" /><rect x="843" y="537" width="1" height="91" fill="#9c9ea2" /><rect x="148" y="539" width="131" height="87" fill="#8e8f91" /><rect x="149.8" y="540.8" width="127.4" height="83.4" fill="#2a2b2e" shape-rendering="auto"/><rect x="151.60000000000002" y="542.6" width="123.8" height="79.8" fill="#ffffff" shape-rendering="auto"/><rect x="159" y="543" width="1" height="79" fill="#f9f9f9" /><rect x="168" y="543" width="1" height="79" fill="#f9f9f9" /><rect x="177" y="543" width="1" height="79" fill="#f9f9f9" /><rect x="186" y="543" width="1" height="79" fill="#f9f9f9" /><rect x="195" y="543" width="1" height="79" fill="#f9f9f9" /><rect x="204" y="543" width="1" height="79" fill="#f9f9f9" /><rect x="213" y="543" width="1" height="79" fill="#f9f9f9" /><rect x="222" y="543" width="1" height="79" fill="#f9f9f9" /><rect x="240" y="543" width="1" height="79" fill="#f9f9f9" /><rect x="249" y="543" width="1" height="79" fill="#f9f9f9" /><rect x="258" y="543" width="1" height="79" fill="#f9f9f9" /><rect x="267" y="543" width="1" height="79" fill="#f9f9f9" /><rect x="152" y="618" width="123" height="1" fill="#f9f9f9" /><rect x="152" y="609" width="123" height="1" fill="#f9f9f9" /><rect x="152" y="591" width="123" height="1" fill="#f9f9f9" /><rect x="152" y="582" width="123" height="1" fill="#f9f9f9" /><rect x="152" y="573" width="123" height="1" fill="#f9f9f9" /><rect x="152" y="564" width="123" height="1" fill="#f9f9f9" /><rect x="152" y="555" width="123" height="1" fill="#f9f9f9" /><rect x="152" y="546" width="123" height="1" fill="#f9f9f9" /><rect x="231" y="542" width="1" height="81" fill="#d8d8d8" /><rect x="151" y="600" width="125" height="1" fill="#d8d8d8" /><rect x="170" y="539" width="1" height="87" fill="#8e9094" /><rect x="256" y="539" width="1" height="87" fill="#8e9094" /><rect x="150" y="561" width="127" height="1" fill="#8e9094" /><rect x="150" y="604" width="127" height="1" fill="#8e9094" /><path d="M148.00 539.00h1.8v1.8h-1.8ZM149.80 539.00h1.8v1.8h-1.8ZM151.60 539.00h1.8v1.8h-1.8ZM153.40 539.00h1.8v1.8h-1.8ZM155.20 539.00h1.8v1.8h-1.8ZM157.00 539.00h1.8v1.8h-1.8ZM158.80 539.00h1.8v1.8h-1.8ZM160.60 539.00h1.8v1.8h-1.8ZM162.40 539.00h1.8v1.8h-1.8ZM164.20 539.00h1.8v1.8h-1.8ZM148.00 540.80h1.8v1.8h-1.8ZM155.20 540.80h1.8v1.8h-1.8ZM158.80 540.80h1.8v1.8h-1.8ZM148.00 542.60h1.8v1.8h-1.8ZM155.20 542.60h1.8v1.8h-1.8ZM157.00 542.60h1.8v1.8h-1.8ZM158.80 542.60h1.8v1.8h-1.8ZM148.00 544.40h1.8v1.8h-1.8ZM155.20 544.40h1.8v1.8h-1.8ZM148.00 546.20h1.8v1.8h-1.8ZM149.80 546.20h1.8v1.8h-1.8ZM151.60 546.20h1.8v1.8h-1.8ZM153.40 546.20h1.8v1.8h-1.8ZM155.20 546.20h1.8v1.8h-1.8ZM148.00 548.00h1.8v1.8h-1.8ZM151.60 548.00h1.8v1.8h-1.8ZM148.00 549.80h1.8v1.8h-1.8ZM149.80 549.80h1.8v1.8h-1.8ZM151.60 549.80h1.8v1.8h-1.8ZM148.00 551.60h1.8v1.8h-1.8ZM148.00 553.40h1.8v1.8h-1.8Z" fill="#8e8f91" shape-rendering="auto"/><path d="M149.80 540.80h1.8v1.8h-1.8ZM151.60 540.80h1.8v1.8h-1.8ZM153.40 540.80h1.8v1.8h-1.8ZM157.00 540.80h1.8v1.8h-1.8ZM160.60 540.80h1.8v1.8h-1.8ZM162.40 540.80h1.8v1.8h-1.8ZM164.20 540.80h1.8v1.8h-1.8ZM149.80 542.60h1.8v1.8h-1.8ZM151.60 542.60h1.8v1.8h-1.8ZM153.40 542.60h1.8v1.8h-1.8ZM160.60 542.60h1.8v1.8h-1.8ZM149.80 544.40h1.8v1.8h-1.8ZM151.60 544.40h1.8v1.8h-1.8ZM153.40 544.40h1.8v1.8h-1.8ZM157.00 544.40h1.8v1.8h-1.8ZM158.80 544.40h1.8v1.8h-1.8ZM160.60 544.40h1.8v1.8h-1.8ZM157.00 546.20h1.8v1.8h-1.8ZM149.80 548.00h1.8v1.8h-1.8ZM153.40 548.00h1.8v1.8h-1.8ZM155.20 548.00h1.8v1.8h-1.8ZM157.00 548.00h1.8v1.8h-1.8ZM153.40 549.80h1.8v1.8h-1.8ZM149.80 551.60h1.8v1.8h-1.8ZM151.60 551.60h1.8v1.8h-1.8ZM153.40 551.60h1.8v1.8h-1.8ZM149.80 553.40h1.8v1.8h-1.8Z" fill="#2a2b2e" shape-rendering="auto"/><path d="M162.40 542.60h1.8v1.8h-1.8ZM164.20 542.60h1.8v1.8h-1.8ZM162.40 544.40h1.8v1.8h-1.8ZM164.20 544.40h1.8v1.8h-1.8ZM158.80 546.20h1.8v1.8h-1.8ZM160.60 546.20h1.8v1.8h-1.8ZM162.40 546.20h1.8v1.8h-1.8ZM164.20 546.20h1.8v1.8h-1.8ZM158.80 548.00h1.8v1.8h-1.8ZM160.60 548.00h1.8v1.8h-1.8ZM162.40 548.00h1.8v1.8h-1.8ZM164.20 548.00h1.8v1.8h-1.8ZM155.20 549.80h1.8v1.8h-1.8ZM157.00 549.80h1.8v1.8h-1.8ZM158.80 549.80h1.8v1.8h-1.8ZM160.60 549.80h1.8v1.8h-1.8ZM162.40 549.80h1.8v1.8h-1.8ZM164.20 549.80h1.8v1.8h-1.8ZM155.20 551.60h1.8v1.8h-1.8ZM157.00 551.60h1.8v1.8h-1.8ZM158.80 551.60h1.8v1.8h-1.8ZM160.60 551.60h1.8v1.8h-1.8ZM162.40 551.60h1.8v1.8h-1.8ZM164.20 551.60h1.8v1.8h-1.8ZM151.60 553.40h1.8v1.8h-1.8ZM153.40 553.40h1.8v1.8h-1.8ZM155.20 553.40h1.8v1.8h-1.8ZM157.00 553.40h1.8v1.8h-1.8ZM158.80 553.40h1.8v1.8h-1.8ZM160.60 553.40h1.8v1.8h-1.8ZM162.40 553.40h1.8v1.8h-1.8ZM164.20 553.40h1.8v1.8h-1.8Z" fill="#ffffff" shape-rendering="auto"/><path d="M277.20 539.00h1.8v1.8h-1.8ZM275.40 539.00h1.8v1.8h-1.8ZM273.60 539.00h1.8v1.8h-1.8ZM271.80 539.00h1.8v1.8h-1.8ZM270.00 539.00h1.8v1.8h-1.8ZM268.20 539.00h1.8v1.8h-1.8ZM266.40 539.00h1.8v1.8h-1.8ZM264.60 539.00h1.8v1.8h-1.8ZM262.80 539.00h1.8v1.8h-1.8ZM261.00 539.00h1.8v1.8h-1.8ZM277.20 540.80h1.8v1.8h-1.8ZM270.00 540.80h1.8v1.8h-1.8ZM266.40 540.80h1.8v1.8h-1.8ZM277.20 542.60h1.8v1.8h-1.8ZM270.00 542.60h1.8v1.8h-1.8ZM268.20 542.60h1.8v1.8h-1.8ZM266.40 542.60h1.8v1.8h-1.8ZM277.20 544.40h1.8v1.8h-1.8ZM270.00 544.40h1.8v1.8h-1.8ZM277.20 546.20h1.8v1.8h-1.8ZM275.40 546.20h1.8v1.8h-1.8ZM273.60 546.20h1.8v1.8h-1.8ZM271.80 546.20h1.8v1.8h-1.8ZM270.00 546.20h1.8v1.8h-1.8ZM277.20 548.00h1.8v1.8h-1.8ZM273.60 548.00h1.8v1.8h-1.8ZM277.20 549.80h1.8v1.8h-1.8ZM275.40 549.80h1.8v1.8h-1.8ZM273.60 549.80h1.8v1.8h-1.8ZM277.20 551.60h1.8v1.8h-1.8ZM277.20 553.40h1.8v1.8h-1.8Z" fill="#8e8f91" shape-rendering="auto"/><path d="M275.40 540.80h1.8v1.8h-1.8ZM273.60 540.80h1.8v1.8h-1.8ZM271.80 540.80h1.8v1.8h-1.8ZM268.20 540.80h1.8v1.8h-1.8ZM264.60 540.80h1.8v1.8h-1.8ZM262.80 540.80h1.8v1.8h-1.8ZM261.00 540.80h1.8v1.8h-1.8ZM275.40 542.60h1.8v1.8h-1.8ZM273.60 542.60h1.8v1.8h-1.8ZM271.80 542.60h1.8v1.8h-1.8ZM264.60 542.60h1.8v1.8h-1.8ZM275.40 544.40h1.8v1.8h-1.8ZM273.60 544.40h1.8v1.8h-1.8ZM271.80 544.40h1.8v1.8h-1.8ZM268.20 544.40h1.8v1.8h-1.8ZM266.40 544.40h1.8v1.8h-1.8ZM264.60 544.40h1.8v1.8h-1.8ZM268.20 546.20h1.8v1.8h-1.8ZM275.40 548.00h1.8v1.8h-1.8ZM271.80 548.00h1.8v1.8h-1.8ZM270.00 548.00h1.8v1.8h-1.8ZM268.20 548.00h1.8v1.8h-1.8ZM271.80 549.80h1.8v1.8h-1.8ZM275.40 551.60h1.8v1.8h-1.8ZM273.60 551.60h1.8v1.8h-1.8ZM271.80 551.60h1.8v1.8h-1.8ZM275.40 553.40h1.8v1.8h-1.8Z" fill="#2a2b2e" shape-rendering="auto"/><path d="M262.80 542.60h1.8v1.8h-1.8ZM261.00 542.60h1.8v1.8h-1.8ZM262.80 544.40h1.8v1.8h-1.8ZM261.00 544.40h1.8v1.8h-1.8ZM266.40 546.20h1.8v1.8h-1.8ZM264.60 546.20h1.8v1.8h-1.8ZM262.80 546.20h1.8v1.8h-1.8ZM261.00 546.20h1.8v1.8h-1.8ZM266.40 548.00h1.8v1.8h-1.8ZM264.60 548.00h1.8v1.8h-1.8ZM262.80 548.00h1.8v1.8h-1.8ZM261.00 548.00h1.8v1.8h-1.8ZM270.00 549.80h1.8v1.8h-1.8ZM268.20 549.80h1.8v1.8h-1.8ZM266.40 549.80h1.8v1.8h-1.8ZM264.60 549.80h1.8v1.8h-1.8ZM262.80 549.80h1.8v1.8h-1.8ZM261.00 549.80h1.8v1.8h-1.8ZM270.00 551.60h1.8v1.8h-1.8ZM268.20 551.60h1.8v1.8h-1.8ZM266.40 551.60h1.8v1.8h-1.8ZM264.60 551.60h1.8v1.8h-1.8ZM262.80 551.60h1.8v1.8h-1.8ZM261.00 551.60h1.8v1.8h-1.8ZM273.60 553.40h1.8v1.8h-1.8ZM271.80 553.40h1.8v1.8h-1.8ZM270.00 553.40h1.8v1.8h-1.8ZM268.20 553.40h1.8v1.8h-1.8ZM266.40 553.40h1.8v1.8h-1.8ZM264.60 553.40h1.8v1.8h-1.8ZM262.80 553.40h1.8v1.8h-1.8ZM261.00 553.40h1.8v1.8h-1.8Z" fill="#ffffff" shape-rendering="auto"/><path d="M148.00 624.20h1.8v1.8h-1.8ZM149.80 624.20h1.8v1.8h-1.8ZM151.60 624.20h1.8v1.8h-1.8ZM153.40 624.20h1.8v1.8h-1.8ZM155.20 624.20h1.8v1.8h-1.8ZM157.00 624.20h1.8v1.8h-1.8ZM158.80 624.20h1.8v1.8h-1.8ZM160.60 624.20h1.8v1.8h-1.8ZM162.40 624.20h1.8v1.8h-1.8ZM164.20 624.20h1.8v1.8h-1.8ZM148.00 622.40h1.8v1.8h-1.8ZM155.20 622.40h1.8v1.8h-1.8ZM158.80 622.40h1.8v1.8h-1.8ZM148.00 620.60h1.8v1.8h-1.8ZM155.20 620.60h1.8v1.8h-1.8ZM157.00 620.60h1.8v1.8h-1.8ZM158.80 620.60h1.8v1.8h-1.8ZM148.00 618.80h1.8v1.8h-1.8ZM155.20 618.80h1.8v1.8h-1.8ZM148.00 617.00h1.8v1.8h-1.8ZM149.80 617.00h1.8v1.8h-1.8ZM151.60 617.00h1.8v1.8h-1.8ZM153.40 617.00h1.8v1.8h-1.8ZM155.20 617.00h1.8v1.8h-1.8ZM148.00 615.20h1.8v1.8h-1.8ZM151.60 615.20h1.8v1.8h-1.8ZM148.00 613.40h1.8v1.8h-1.8ZM149.80 613.40h1.8v1.8h-1.8ZM151.60 613.40h1.8v1.8h-1.8ZM148.00 611.60h1.8v1.8h-1.8ZM148.00 609.80h1.8v1.8h-1.8Z" fill="#8e8f91" shape-rendering="auto"/><path d="M149.80 622.40h1.8v1.8h-1.8ZM151.60 622.40h1.8v1.8h-1.8ZM153.40 622.40h1.8v1.8h-1.8ZM157.00 622.40h1.8v1.8h-1.8ZM160.60 622.40h1.8v1.8h-1.8ZM162.40 622.40h1.8v1.8h-1.8ZM164.20 622.40h1.8v1.8h-1.8ZM149.80 620.60h1.8v1.8h-1.8ZM151.60 620.60h1.8v1.8h-1.8ZM153.40 620.60h1.8v1.8h-1.8ZM160.60 620.60h1.8v1.8h-1.8ZM149.80 618.80h1.8v1.8h-1.8ZM151.60 618.80h1.8v1.8h-1.8ZM153.40 618.80h1.8v1.8h-1.8ZM157.00 618.80h1.8v1.8h-1.8ZM158.80 618.80h1.8v1.8h-1.8ZM160.60 618.80h1.8v1.8h-1.8ZM157.00 617.00h1.8v1.8h-1.8ZM149.80 615.20h1.8v1.8h-1.8ZM153.40 615.20h1.8v1.8h-1.8ZM155.20 615.20h1.8v1.8h-1.8ZM157.00 615.20h1.8v1.8h-1.8ZM153.40 613.40h1.8v1.8h-1.8ZM149.80 611.60h1.8v1.8h-1.8ZM151.60 611.60h1.8v1.8h-1.8ZM153.40 611.60h1.8v1.8h-1.8ZM149.80 609.80h1.8v1.8h-1.8Z" fill="#2a2b2e" shape-rendering="auto"/><path d="M162.40 620.60h1.8v1.8h-1.8ZM164.20 620.60h1.8v1.8h-1.8ZM162.40 618.80h1.8v1.8h-1.8ZM164.20 618.80h1.8v1.8h-1.8ZM158.80 617.00h1.8v1.8h-1.8ZM160.60 617.00h1.8v1.8h-1.8ZM162.40 617.00h1.8v1.8h-1.8ZM164.20 617.00h1.8v1.8h-1.8ZM158.80 615.20h1.8v1.8h-1.8ZM160.60 615.20h1.8v1.8h-1.8ZM162.40 615.20h1.8v1.8h-1.8ZM164.20 615.20h1.8v1.8h-1.8ZM155.20 613.40h1.8v1.8h-1.8ZM157.00 613.40h1.8v1.8h-1.8ZM158.80 613.40h1.8v1.8h-1.8ZM160.60 613.40h1.8v1.8h-1.8ZM162.40 613.40h1.8v1.8h-1.8ZM164.20 613.40h1.8v1.8h-1.8ZM155.20 611.60h1.8v1.8h-1.8ZM157.00 611.60h1.8v1.8h-1.8ZM158.80 611.60h1.8v1.8h-1.8ZM160.60 611.60h1.8v1.8h-1.8ZM162.40 611.60h1.8v1.8h-1.8ZM164.20 611.60h1.8v1.8h-1.8ZM151.60 609.80h1.8v1.8h-1.8ZM153.40 609.80h1.8v1.8h-1.8ZM155.20 609.80h1.8v1.8h-1.8ZM157.00 609.80h1.8v1.8h-1.8ZM158.80 609.80h1.8v1.8h-1.8ZM160.60 609.80h1.8v1.8h-1.8ZM162.40 609.80h1.8v1.8h-1.8ZM164.20 609.80h1.8v1.8h-1.8Z" fill="#ffffff" shape-rendering="auto"/><path d="M277.20 624.20h1.8v1.8h-1.8ZM275.40 624.20h1.8v1.8h-1.8ZM273.60 624.20h1.8v1.8h-1.8ZM271.80 624.20h1.8v1.8h-1.8ZM270.00 624.20h1.8v1.8h-1.8ZM268.20 624.20h1.8v1.8h-1.8ZM266.40 624.20h1.8v1.8h-1.8ZM264.60 624.20h1.8v1.8h-1.8ZM262.80 624.20h1.8v1.8h-1.8ZM261.00 624.20h1.8v1.8h-1.8ZM277.20 622.40h1.8v1.8h-1.8ZM270.00 622.40h1.8v1.8h-1.8ZM266.40 622.40h1.8v1.8h-1.8ZM277.20 620.60h1.8v1.8h-1.8ZM270.00 620.60h1.8v1.8h-1.8ZM268.20 620.60h1.8v1.8h-1.8ZM266.40 620.60h1.8v1.8h-1.8ZM277.20 618.80h1.8v1.8h-1.8ZM270.00 618.80h1.8v1.8h-1.8ZM277.20 617.00h1.8v1.8h-1.8ZM275.40 617.00h1.8v1.8h-1.8ZM273.60 617.00h1.8v1.8h-1.8ZM271.80 617.00h1.8v1.8h-1.8ZM270.00 617.00h1.8v1.8h-1.8ZM277.20 615.20h1.8v1.8h-1.8ZM273.60 615.20h1.8v1.8h-1.8ZM277.20 613.40h1.8v1.8h-1.8ZM275.40 613.40h1.8v1.8h-1.8ZM273.60 613.40h1.8v1.8h-1.8ZM277.20 611.60h1.8v1.8h-1.8ZM277.20 609.80h1.8v1.8h-1.8Z" fill="#8e8f91" shape-rendering="auto"/><path d="M275.40 622.40h1.8v1.8h-1.8ZM273.60 622.40h1.8v1.8h-1.8ZM271.80 622.40h1.8v1.8h-1.8ZM268.20 622.40h1.8v1.8h-1.8ZM264.60 622.40h1.8v1.8h-1.8ZM262.80 622.40h1.8v1.8h-1.8ZM261.00 622.40h1.8v1.8h-1.8ZM275.40 620.60h1.8v1.8h-1.8ZM273.60 620.60h1.8v1.8h-1.8ZM271.80 620.60h1.8v1.8h-1.8ZM264.60 620.60h1.8v1.8h-1.8ZM275.40 618.80h1.8v1.8h-1.8ZM273.60 618.80h1.8v1.8h-1.8ZM271.80 618.80h1.8v1.8h-1.8ZM268.20 618.80h1.8v1.8h-1.8ZM266.40 618.80h1.8v1.8h-1.8ZM264.60 618.80h1.8v1.8h-1.8ZM268.20 617.00h1.8v1.8h-1.8ZM275.40 615.20h1.8v1.8h-1.8ZM271.80 615.20h1.8v1.8h-1.8ZM270.00 615.20h1.8v1.8h-1.8ZM268.20 615.20h1.8v1.8h-1.8ZM271.80 613.40h1.8v1.8h-1.8ZM275.40 611.60h1.8v1.8h-1.8ZM273.60 611.60h1.8v1.8h-1.8ZM271.80 611.60h1.8v1.8h-1.8ZM275.40 609.80h1.8v1.8h-1.8Z" fill="#2a2b2e" shape-rendering="auto"/><path d="M262.80 620.60h1.8v1.8h-1.8ZM261.00 620.60h1.8v1.8h-1.8ZM262.80 618.80h1.8v1.8h-1.8ZM261.00 618.80h1.8v1.8h-1.8ZM266.40 617.00h1.8v1.8h-1.8ZM264.60 617.00h1.8v1.8h-1.8ZM262.80 617.00h1.8v1.8h-1.8ZM261.00 617.00h1.8v1.8h-1.8ZM266.40 615.20h1.8v1.8h-1.8ZM264.60 615.20h1.8v1.8h-1.8ZM262.80 615.20h1.8v1.8h-1.8ZM261.00 615.20h1.8v1.8h-1.8ZM270.00 613.40h1.8v1.8h-1.8ZM268.20 613.40h1.8v1.8h-1.8ZM266.40 613.40h1.8v1.8h-1.8ZM264.60 613.40h1.8v1.8h-1.8ZM262.80 613.40h1.8v1.8h-1.8ZM261.00 613.40h1.8v1.8h-1.8ZM270.00 611.60h1.8v1.8h-1.8ZM268.20 611.60h1.8v1.8h-1.8ZM266.40 611.60h1.8v1.8h-1.8ZM264.60 611.60h1.8v1.8h-1.8ZM262.80 611.60h1.8v1.8h-1.8ZM261.00 611.60h1.8v1.8h-1.8ZM273.60 609.80h1.8v1.8h-1.8ZM271.80 609.80h1.8v1.8h-1.8ZM270.00 609.80h1.8v1.8h-1.8ZM268.20 609.80h1.8v1.8h-1.8ZM266.40 609.80h1.8v1.8h-1.8ZM264.60 609.80h1.8v1.8h-1.8ZM262.80 609.80h1.8v1.8h-1.8ZM261.00 609.80h1.8v1.8h-1.8Z" fill="#ffffff" shape-rendering="auto"/><rect x="328" y="539" width="131" height="87" fill="#8e8f91" /><rect x="329.79999999999995" y="540.8" width="127.4" height="83.4" fill="#2a2b2e" shape-rendering="auto"/><rect x="331.6" y="542.6" width="123.8" height="79.8" fill="#ffffff" shape-rendering="auto"/><rect x="339" y="543" width="1" height="79" fill="#f9f9f9" /><rect x="348" y="543" width="1" height="79" fill="#f9f9f9" /><rect x="357" y="543" width="1" height="79" fill="#f9f9f9" /><rect x="366" y="543" width="1" height="79" fill="#f9f9f9" /><rect x="375" y="543" width="1" height="79" fill="#f9f9f9" /><rect x="384" y="543" width="1" height="79" fill="#f9f9f9" /><rect x="393" y="543" width="1" height="79" fill="#f9f9f9" /><rect x="402" y="543" width="1" height="79" fill="#f9f9f9" /><rect x="420" y="543" width="1" height="79" fill="#f9f9f9" /><rect x="429" y="543" width="1" height="79" fill="#f9f9f9" /><rect x="438" y="543" width="1" height="79" fill="#f9f9f9" /><rect x="447" y="543" width="1" height="79" fill="#f9f9f9" /><rect x="332" y="618" width="123" height="1" fill="#f9f9f9" /><rect x="332" y="609" width="123" height="1" fill="#f9f9f9" /><rect x="332" y="591" width="123" height="1" fill="#f9f9f9" /><rect x="332" y="582" width="123" height="1" fill="#f9f9f9" /><rect x="332" y="573" width="123" height="1" fill="#f9f9f9" /><rect x="332" y="564" width="123" height="1" fill="#f9f9f9" /><rect x="332" y="555" width="123" height="1" fill="#f9f9f9" /><rect x="332" y="546" width="123" height="1" fill="#f9f9f9" /><rect x="411" y="542" width="1" height="81" fill="#d8d8d8" /><rect x="331" y="600" width="125" height="1" fill="#d8d8d8" /><rect x="350" y="539" width="1" height="87" fill="#8e9094" /><rect x="436" y="539" width="1" height="87" fill="#8e9094" /><rect x="330" y="561" width="127" height="1" fill="#8e9094" /><rect x="330" y="604" width="127" height="1" fill="#8e9094" /><path d="M328.00 539.00h1.8v1.8h-1.8ZM329.80 539.00h1.8v1.8h-1.8ZM331.60 539.00h1.8v1.8h-1.8ZM333.40 539.00h1.8v1.8h-1.8ZM335.20 539.00h1.8v1.8h-1.8ZM337.00 539.00h1.8v1.8h-1.8ZM338.80 539.00h1.8v1.8h-1.8ZM340.60 539.00h1.8v1.8h-1.8ZM342.40 539.00h1.8v1.8h-1.8ZM344.20 539.00h1.8v1.8h-1.8ZM328.00 540.80h1.8v1.8h-1.8ZM335.20 540.80h1.8v1.8h-1.8ZM338.80 540.80h1.8v1.8h-1.8ZM328.00 542.60h1.8v1.8h-1.8ZM335.20 542.60h1.8v1.8h-1.8ZM337.00 542.60h1.8v1.8h-1.8ZM338.80 542.60h1.8v1.8h-1.8ZM328.00 544.40h1.8v1.8h-1.8ZM335.20 544.40h1.8v1.8h-1.8ZM328.00 546.20h1.8v1.8h-1.8ZM329.80 546.20h1.8v1.8h-1.8ZM331.60 546.20h1.8v1.8h-1.8ZM333.40 546.20h1.8v1.8h-1.8ZM335.20 546.20h1.8v1.8h-1.8ZM328.00 548.00h1.8v1.8h-1.8ZM331.60 548.00h1.8v1.8h-1.8ZM328.00 549.80h1.8v1.8h-1.8ZM329.80 549.80h1.8v1.8h-1.8ZM331.60 549.80h1.8v1.8h-1.8ZM328.00 551.60h1.8v1.8h-1.8ZM328.00 553.40h1.8v1.8h-1.8Z" fill="#8e8f91" shape-rendering="auto"/><path d="M329.80 540.80h1.8v1.8h-1.8ZM331.60 540.80h1.8v1.8h-1.8ZM333.40 540.80h1.8v1.8h-1.8ZM337.00 540.80h1.8v1.8h-1.8ZM340.60 540.80h1.8v1.8h-1.8ZM342.40 540.80h1.8v1.8h-1.8ZM344.20 540.80h1.8v1.8h-1.8ZM329.80 542.60h1.8v1.8h-1.8ZM331.60 542.60h1.8v1.8h-1.8ZM333.40 542.60h1.8v1.8h-1.8ZM340.60 542.60h1.8v1.8h-1.8ZM329.80 544.40h1.8v1.8h-1.8ZM331.60 544.40h1.8v1.8h-1.8ZM333.40 544.40h1.8v1.8h-1.8ZM337.00 544.40h1.8v1.8h-1.8ZM338.80 544.40h1.8v1.8h-1.8ZM340.60 544.40h1.8v1.8h-1.8ZM337.00 546.20h1.8v1.8h-1.8ZM329.80 548.00h1.8v1.8h-1.8ZM333.40 548.00h1.8v1.8h-1.8ZM335.20 548.00h1.8v1.8h-1.8ZM337.00 548.00h1.8v1.8h-1.8ZM333.40 549.80h1.8v1.8h-1.8ZM329.80 551.60h1.8v1.8h-1.8ZM331.60 551.60h1.8v1.8h-1.8ZM333.40 551.60h1.8v1.8h-1.8ZM329.80 553.40h1.8v1.8h-1.8Z" fill="#2a2b2e" shape-rendering="auto"/><path d="M342.40 542.60h1.8v1.8h-1.8ZM344.20 542.60h1.8v1.8h-1.8ZM342.40 544.40h1.8v1.8h-1.8ZM344.20 544.40h1.8v1.8h-1.8ZM338.80 546.20h1.8v1.8h-1.8ZM340.60 546.20h1.8v1.8h-1.8ZM342.40 546.20h1.8v1.8h-1.8ZM344.20 546.20h1.8v1.8h-1.8ZM338.80 548.00h1.8v1.8h-1.8ZM340.60 548.00h1.8v1.8h-1.8ZM342.40 548.00h1.8v1.8h-1.8ZM344.20 548.00h1.8v1.8h-1.8ZM335.20 549.80h1.8v1.8h-1.8ZM337.00 549.80h1.8v1.8h-1.8ZM338.80 549.80h1.8v1.8h-1.8ZM340.60 549.80h1.8v1.8h-1.8ZM342.40 549.80h1.8v1.8h-1.8ZM344.20 549.80h1.8v1.8h-1.8ZM335.20 551.60h1.8v1.8h-1.8ZM337.00 551.60h1.8v1.8h-1.8ZM338.80 551.60h1.8v1.8h-1.8ZM340.60 551.60h1.8v1.8h-1.8ZM342.40 551.60h1.8v1.8h-1.8ZM344.20 551.60h1.8v1.8h-1.8ZM331.60 553.40h1.8v1.8h-1.8ZM333.40 553.40h1.8v1.8h-1.8ZM335.20 553.40h1.8v1.8h-1.8ZM337.00 553.40h1.8v1.8h-1.8ZM338.80 553.40h1.8v1.8h-1.8ZM340.60 553.40h1.8v1.8h-1.8ZM342.40 553.40h1.8v1.8h-1.8ZM344.20 553.40h1.8v1.8h-1.8Z" fill="#ffffff" shape-rendering="auto"/><path d="M457.20 539.00h1.8v1.8h-1.8ZM455.40 539.00h1.8v1.8h-1.8ZM453.60 539.00h1.8v1.8h-1.8ZM451.80 539.00h1.8v1.8h-1.8ZM450.00 539.00h1.8v1.8h-1.8ZM448.20 539.00h1.8v1.8h-1.8ZM446.40 539.00h1.8v1.8h-1.8ZM444.60 539.00h1.8v1.8h-1.8ZM442.80 539.00h1.8v1.8h-1.8ZM441.00 539.00h1.8v1.8h-1.8ZM457.20 540.80h1.8v1.8h-1.8ZM450.00 540.80h1.8v1.8h-1.8ZM446.40 540.80h1.8v1.8h-1.8ZM457.20 542.60h1.8v1.8h-1.8ZM450.00 542.60h1.8v1.8h-1.8ZM448.20 542.60h1.8v1.8h-1.8ZM446.40 542.60h1.8v1.8h-1.8ZM457.20 544.40h1.8v1.8h-1.8ZM450.00 544.40h1.8v1.8h-1.8ZM457.20 546.20h1.8v1.8h-1.8ZM455.40 546.20h1.8v1.8h-1.8ZM453.60 546.20h1.8v1.8h-1.8ZM451.80 546.20h1.8v1.8h-1.8ZM450.00 546.20h1.8v1.8h-1.8ZM457.20 548.00h1.8v1.8h-1.8ZM453.60 548.00h1.8v1.8h-1.8ZM457.20 549.80h1.8v1.8h-1.8ZM455.40 549.80h1.8v1.8h-1.8ZM453.60 549.80h1.8v1.8h-1.8ZM457.20 551.60h1.8v1.8h-1.8ZM457.20 553.40h1.8v1.8h-1.8Z" fill="#8e8f91" shape-rendering="auto"/><path d="M455.40 540.80h1.8v1.8h-1.8ZM453.60 540.80h1.8v1.8h-1.8ZM451.80 540.80h1.8v1.8h-1.8ZM448.20 540.80h1.8v1.8h-1.8ZM444.60 540.80h1.8v1.8h-1.8ZM442.80 540.80h1.8v1.8h-1.8ZM441.00 540.80h1.8v1.8h-1.8ZM455.40 542.60h1.8v1.8h-1.8ZM453.60 542.60h1.8v1.8h-1.8ZM451.80 542.60h1.8v1.8h-1.8ZM444.60 542.60h1.8v1.8h-1.8ZM455.40 544.40h1.8v1.8h-1.8ZM453.60 544.40h1.8v1.8h-1.8ZM451.80 544.40h1.8v1.8h-1.8ZM448.20 544.40h1.8v1.8h-1.8ZM446.40 544.40h1.8v1.8h-1.8ZM444.60 544.40h1.8v1.8h-1.8ZM448.20 546.20h1.8v1.8h-1.8ZM455.40 548.00h1.8v1.8h-1.8ZM451.80 548.00h1.8v1.8h-1.8ZM450.00 548.00h1.8v1.8h-1.8ZM448.20 548.00h1.8v1.8h-1.8ZM451.80 549.80h1.8v1.8h-1.8ZM455.40 551.60h1.8v1.8h-1.8ZM453.60 551.60h1.8v1.8h-1.8ZM451.80 551.60h1.8v1.8h-1.8ZM455.40 553.40h1.8v1.8h-1.8Z" fill="#2a2b2e" shape-rendering="auto"/><path d="M442.80 542.60h1.8v1.8h-1.8ZM441.00 542.60h1.8v1.8h-1.8ZM442.80 544.40h1.8v1.8h-1.8ZM441.00 544.40h1.8v1.8h-1.8ZM446.40 546.20h1.8v1.8h-1.8ZM444.60 546.20h1.8v1.8h-1.8ZM442.80 546.20h1.8v1.8h-1.8ZM441.00 546.20h1.8v1.8h-1.8ZM446.40 548.00h1.8v1.8h-1.8ZM444.60 548.00h1.8v1.8h-1.8ZM442.80 548.00h1.8v1.8h-1.8ZM441.00 548.00h1.8v1.8h-1.8ZM450.00 549.80h1.8v1.8h-1.8ZM448.20 549.80h1.8v1.8h-1.8ZM446.40 549.80h1.8v1.8h-1.8ZM444.60 549.80h1.8v1.8h-1.8ZM442.80 549.80h1.8v1.8h-1.8ZM441.00 549.80h1.8v1.8h-1.8ZM450.00 551.60h1.8v1.8h-1.8ZM448.20 551.60h1.8v1.8h-1.8ZM446.40 551.60h1.8v1.8h-1.8ZM444.60 551.60h1.8v1.8h-1.8ZM442.80 551.60h1.8v1.8h-1.8ZM441.00 551.60h1.8v1.8h-1.8ZM453.60 553.40h1.8v1.8h-1.8ZM451.80 553.40h1.8v1.8h-1.8ZM450.00 553.40h1.8v1.8h-1.8ZM448.20 553.40h1.8v1.8h-1.8ZM446.40 553.40h1.8v1.8h-1.8ZM444.60 553.40h1.8v1.8h-1.8ZM442.80 553.40h1.8v1.8h-1.8ZM441.00 553.40h1.8v1.8h-1.8Z" fill="#ffffff" shape-rendering="auto"/><path d="M328.00 624.20h1.8v1.8h-1.8ZM329.80 624.20h1.8v1.8h-1.8ZM331.60 624.20h1.8v1.8h-1.8ZM333.40 624.20h1.8v1.8h-1.8ZM335.20 624.20h1.8v1.8h-1.8ZM337.00 624.20h1.8v1.8h-1.8ZM338.80 624.20h1.8v1.8h-1.8ZM340.60 624.20h1.8v1.8h-1.8ZM342.40 624.20h1.8v1.8h-1.8ZM344.20 624.20h1.8v1.8h-1.8ZM328.00 622.40h1.8v1.8h-1.8ZM335.20 622.40h1.8v1.8h-1.8ZM338.80 622.40h1.8v1.8h-1.8ZM328.00 620.60h1.8v1.8h-1.8ZM335.20 620.60h1.8v1.8h-1.8ZM337.00 620.60h1.8v1.8h-1.8ZM338.80 620.60h1.8v1.8h-1.8ZM328.00 618.80h1.8v1.8h-1.8ZM335.20 618.80h1.8v1.8h-1.8ZM328.00 617.00h1.8v1.8h-1.8ZM329.80 617.00h1.8v1.8h-1.8ZM331.60 617.00h1.8v1.8h-1.8ZM333.40 617.00h1.8v1.8h-1.8ZM335.20 617.00h1.8v1.8h-1.8ZM328.00 615.20h1.8v1.8h-1.8ZM331.60 615.20h1.8v1.8h-1.8ZM328.00 613.40h1.8v1.8h-1.8ZM329.80 613.40h1.8v1.8h-1.8ZM331.60 613.40h1.8v1.8h-1.8ZM328.00 611.60h1.8v1.8h-1.8ZM328.00 609.80h1.8v1.8h-1.8Z" fill="#8e8f91" shape-rendering="auto"/><path d="M329.80 622.40h1.8v1.8h-1.8ZM331.60 622.40h1.8v1.8h-1.8ZM333.40 622.40h1.8v1.8h-1.8ZM337.00 622.40h1.8v1.8h-1.8ZM340.60 622.40h1.8v1.8h-1.8ZM342.40 622.40h1.8v1.8h-1.8ZM344.20 622.40h1.8v1.8h-1.8ZM329.80 620.60h1.8v1.8h-1.8ZM331.60 620.60h1.8v1.8h-1.8ZM333.40 620.60h1.8v1.8h-1.8ZM340.60 620.60h1.8v1.8h-1.8ZM329.80 618.80h1.8v1.8h-1.8ZM331.60 618.80h1.8v1.8h-1.8ZM333.40 618.80h1.8v1.8h-1.8ZM337.00 618.80h1.8v1.8h-1.8ZM338.80 618.80h1.8v1.8h-1.8ZM340.60 618.80h1.8v1.8h-1.8ZM337.00 617.00h1.8v1.8h-1.8ZM329.80 615.20h1.8v1.8h-1.8ZM333.40 615.20h1.8v1.8h-1.8ZM335.20 615.20h1.8v1.8h-1.8ZM337.00 615.20h1.8v1.8h-1.8ZM333.40 613.40h1.8v1.8h-1.8ZM329.80 611.60h1.8v1.8h-1.8ZM331.60 611.60h1.8v1.8h-1.8ZM333.40 611.60h1.8v1.8h-1.8ZM329.80 609.80h1.8v1.8h-1.8Z" fill="#2a2b2e" shape-rendering="auto"/><path d="M342.40 620.60h1.8v1.8h-1.8ZM344.20 620.60h1.8v1.8h-1.8ZM342.40 618.80h1.8v1.8h-1.8ZM344.20 618.80h1.8v1.8h-1.8ZM338.80 617.00h1.8v1.8h-1.8ZM340.60 617.00h1.8v1.8h-1.8ZM342.40 617.00h1.8v1.8h-1.8ZM344.20 617.00h1.8v1.8h-1.8ZM338.80 615.20h1.8v1.8h-1.8ZM340.60 615.20h1.8v1.8h-1.8ZM342.40 615.20h1.8v1.8h-1.8ZM344.20 615.20h1.8v1.8h-1.8ZM335.20 613.40h1.8v1.8h-1.8ZM337.00 613.40h1.8v1.8h-1.8ZM338.80 613.40h1.8v1.8h-1.8ZM340.60 613.40h1.8v1.8h-1.8ZM342.40 613.40h1.8v1.8h-1.8ZM344.20 613.40h1.8v1.8h-1.8ZM335.20 611.60h1.8v1.8h-1.8ZM337.00 611.60h1.8v1.8h-1.8ZM338.80 611.60h1.8v1.8h-1.8ZM340.60 611.60h1.8v1.8h-1.8ZM342.40 611.60h1.8v1.8h-1.8ZM344.20 611.60h1.8v1.8h-1.8ZM331.60 609.80h1.8v1.8h-1.8ZM333.40 609.80h1.8v1.8h-1.8ZM335.20 609.80h1.8v1.8h-1.8ZM337.00 609.80h1.8v1.8h-1.8ZM338.80 609.80h1.8v1.8h-1.8ZM340.60 609.80h1.8v1.8h-1.8ZM342.40 609.80h1.8v1.8h-1.8ZM344.20 609.80h1.8v1.8h-1.8Z" fill="#ffffff" shape-rendering="auto"/><path d="M457.20 624.20h1.8v1.8h-1.8ZM455.40 624.20h1.8v1.8h-1.8ZM453.60 624.20h1.8v1.8h-1.8ZM451.80 624.20h1.8v1.8h-1.8ZM450.00 624.20h1.8v1.8h-1.8ZM448.20 624.20h1.8v1.8h-1.8ZM446.40 624.20h1.8v1.8h-1.8ZM444.60 624.20h1.8v1.8h-1.8ZM442.80 624.20h1.8v1.8h-1.8ZM441.00 624.20h1.8v1.8h-1.8ZM457.20 622.40h1.8v1.8h-1.8ZM450.00 622.40h1.8v1.8h-1.8ZM446.40 622.40h1.8v1.8h-1.8ZM457.20 620.60h1.8v1.8h-1.8ZM450.00 620.60h1.8v1.8h-1.8ZM448.20 620.60h1.8v1.8h-1.8ZM446.40 620.60h1.8v1.8h-1.8ZM457.20 618.80h1.8v1.8h-1.8ZM450.00 618.80h1.8v1.8h-1.8ZM457.20 617.00h1.8v1.8h-1.8ZM455.40 617.00h1.8v1.8h-1.8ZM453.60 617.00h1.8v1.8h-1.8ZM451.80 617.00h1.8v1.8h-1.8ZM450.00 617.00h1.8v1.8h-1.8ZM457.20 615.20h1.8v1.8h-1.8ZM453.60 615.20h1.8v1.8h-1.8ZM457.20 613.40h1.8v1.8h-1.8ZM455.40 613.40h1.8v1.8h-1.8ZM453.60 613.40h1.8v1.8h-1.8ZM457.20 611.60h1.8v1.8h-1.8ZM457.20 609.80h1.8v1.8h-1.8Z" fill="#8e8f91" shape-rendering="auto"/><path d="M455.40 622.40h1.8v1.8h-1.8ZM453.60 622.40h1.8v1.8h-1.8ZM451.80 622.40h1.8v1.8h-1.8ZM448.20 622.40h1.8v1.8h-1.8ZM444.60 622.40h1.8v1.8h-1.8ZM442.80 622.40h1.8v1.8h-1.8ZM441.00 622.40h1.8v1.8h-1.8ZM455.40 620.60h1.8v1.8h-1.8ZM453.60 620.60h1.8v1.8h-1.8ZM451.80 620.60h1.8v1.8h-1.8ZM444.60 620.60h1.8v1.8h-1.8ZM455.40 618.80h1.8v1.8h-1.8ZM453.60 618.80h1.8v1.8h-1.8ZM451.80 618.80h1.8v1.8h-1.8ZM448.20 618.80h1.8v1.8h-1.8ZM446.40 618.80h1.8v1.8h-1.8ZM444.60 618.80h1.8v1.8h-1.8ZM448.20 617.00h1.8v1.8h-1.8ZM455.40 615.20h1.8v1.8h-1.8ZM451.80 615.20h1.8v1.8h-1.8ZM450.00 615.20h1.8v1.8h-1.8ZM448.20 615.20h1.8v1.8h-1.8ZM451.80 613.40h1.8v1.8h-1.8ZM455.40 611.60h1.8v1.8h-1.8ZM453.60 611.60h1.8v1.8h-1.8ZM451.80 611.60h1.8v1.8h-1.8ZM455.40 609.80h1.8v1.8h-1.8Z" fill="#2a2b2e" shape-rendering="auto"/><path d="M442.80 620.60h1.8v1.8h-1.8ZM441.00 620.60h1.8v1.8h-1.8ZM442.80 618.80h1.8v1.8h-1.8ZM441.00 618.80h1.8v1.8h-1.8ZM446.40 617.00h1.8v1.8h-1.8ZM444.60 617.00h1.8v1.8h-1.8ZM442.80 617.00h1.8v1.8h-1.8ZM441.00 617.00h1.8v1.8h-1.8ZM446.40 615.20h1.8v1.8h-1.8ZM444.60 615.20h1.8v1.8h-1.8ZM442.80 615.20h1.8v1.8h-1.8ZM441.00 615.20h1.8v1.8h-1.8ZM450.00 613.40h1.8v1.8h-1.8ZM448.20 613.40h1.8v1.8h-1.8ZM446.40 613.40h1.8v1.8h-1.8ZM444.60 613.40h1.8v1.8h-1.8ZM442.80 613.40h1.8v1.8h-1.8ZM441.00 613.40h1.8v1.8h-1.8ZM450.00 611.60h1.8v1.8h-1.8ZM448.20 611.60h1.8v1.8h-1.8ZM446.40 611.60h1.8v1.8h-1.8ZM444.60 611.60h1.8v1.8h-1.8ZM442.80 611.60h1.8v1.8h-1.8ZM441.00 611.60h1.8v1.8h-1.8ZM453.60 609.80h1.8v1.8h-1.8ZM451.80 609.80h1.8v1.8h-1.8ZM450.00 609.80h1.8v1.8h-1.8ZM448.20 609.80h1.8v1.8h-1.8ZM446.40 609.80h1.8v1.8h-1.8ZM444.60 609.80h1.8v1.8h-1.8ZM442.80 609.80h1.8v1.8h-1.8ZM441.00 609.80h1.8v1.8h-1.8Z" fill="#ffffff" shape-rendering="auto"/><rect x="508" y="539" width="131" height="87" fill="#8e8f91" /><rect x="509.79999999999995" y="540.8" width="127.4" height="83.4" fill="#2a2b2e" shape-rendering="auto"/><rect x="511.6" y="542.6" width="123.8" height="79.8" fill="#ffffff" shape-rendering="auto"/><rect x="519" y="543" width="1" height="79" fill="#f9f9f9" /><rect x="528" y="543" width="1" height="79" fill="#f9f9f9" /><rect x="537" y="543" width="1" height="79" fill="#f9f9f9" /><rect x="546" y="543" width="1" height="79" fill="#f9f9f9" /><rect x="555" y="543" width="1" height="79" fill="#f9f9f9" /><rect x="564" y="543" width="1" height="79" fill="#f9f9f9" /><rect x="573" y="543" width="1" height="79" fill="#f9f9f9" /><rect x="582" y="543" width="1" height="79" fill="#f9f9f9" /><rect x="600" y="543" width="1" height="79" fill="#f9f9f9" /><rect x="609" y="543" width="1" height="79" fill="#f9f9f9" /><rect x="618" y="543" width="1" height="79" fill="#f9f9f9" /><rect x="627" y="543" width="1" height="79" fill="#f9f9f9" /><rect x="512" y="618" width="123" height="1" fill="#f9f9f9" /><rect x="512" y="609" width="123" height="1" fill="#f9f9f9" /><rect x="512" y="591" width="123" height="1" fill="#f9f9f9" /><rect x="512" y="582" width="123" height="1" fill="#f9f9f9" /><rect x="512" y="573" width="123" height="1" fill="#f9f9f9" /><rect x="512" y="564" width="123" height="1" fill="#f9f9f9" /><rect x="512" y="555" width="123" height="1" fill="#f9f9f9" /><rect x="512" y="546" width="123" height="1" fill="#f9f9f9" /><rect x="591" y="542" width="1" height="81" fill="#d8d8d8" /><rect x="511" y="600" width="125" height="1" fill="#d8d8d8" /><rect x="530" y="539" width="1" height="87" fill="#8e9094" /><rect x="616" y="539" width="1" height="87" fill="#8e9094" /><rect x="510" y="561" width="127" height="1" fill="#8e9094" /><rect x="510" y="604" width="127" height="1" fill="#8e9094" /><path d="M508.00 539.00h1.8v1.8h-1.8ZM509.80 539.00h1.8v1.8h-1.8ZM511.60 539.00h1.8v1.8h-1.8ZM513.40 539.00h1.8v1.8h-1.8ZM515.20 539.00h1.8v1.8h-1.8ZM517.00 539.00h1.8v1.8h-1.8ZM518.80 539.00h1.8v1.8h-1.8ZM520.60 539.00h1.8v1.8h-1.8ZM522.40 539.00h1.8v1.8h-1.8ZM524.20 539.00h1.8v1.8h-1.8ZM508.00 540.80h1.8v1.8h-1.8ZM515.20 540.80h1.8v1.8h-1.8ZM518.80 540.80h1.8v1.8h-1.8ZM508.00 542.60h1.8v1.8h-1.8ZM515.20 542.60h1.8v1.8h-1.8ZM517.00 542.60h1.8v1.8h-1.8ZM518.80 542.60h1.8v1.8h-1.8ZM508.00 544.40h1.8v1.8h-1.8ZM515.20 544.40h1.8v1.8h-1.8ZM508.00 546.20h1.8v1.8h-1.8ZM509.80 546.20h1.8v1.8h-1.8ZM511.60 546.20h1.8v1.8h-1.8ZM513.40 546.20h1.8v1.8h-1.8ZM515.20 546.20h1.8v1.8h-1.8ZM508.00 548.00h1.8v1.8h-1.8ZM511.60 548.00h1.8v1.8h-1.8ZM508.00 549.80h1.8v1.8h-1.8ZM509.80 549.80h1.8v1.8h-1.8ZM511.60 549.80h1.8v1.8h-1.8ZM508.00 551.60h1.8v1.8h-1.8ZM508.00 553.40h1.8v1.8h-1.8Z" fill="#8e8f91" shape-rendering="auto"/><path d="M509.80 540.80h1.8v1.8h-1.8ZM511.60 540.80h1.8v1.8h-1.8ZM513.40 540.80h1.8v1.8h-1.8ZM517.00 540.80h1.8v1.8h-1.8ZM520.60 540.80h1.8v1.8h-1.8ZM522.40 540.80h1.8v1.8h-1.8ZM524.20 540.80h1.8v1.8h-1.8ZM509.80 542.60h1.8v1.8h-1.8ZM511.60 542.60h1.8v1.8h-1.8ZM513.40 542.60h1.8v1.8h-1.8ZM520.60 542.60h1.8v1.8h-1.8ZM509.80 544.40h1.8v1.8h-1.8ZM511.60 544.40h1.8v1.8h-1.8ZM513.40 544.40h1.8v1.8h-1.8ZM517.00 544.40h1.8v1.8h-1.8ZM518.80 544.40h1.8v1.8h-1.8ZM520.60 544.40h1.8v1.8h-1.8ZM517.00 546.20h1.8v1.8h-1.8ZM509.80 548.00h1.8v1.8h-1.8ZM513.40 548.00h1.8v1.8h-1.8ZM515.20 548.00h1.8v1.8h-1.8ZM517.00 548.00h1.8v1.8h-1.8ZM513.40 549.80h1.8v1.8h-1.8ZM509.80 551.60h1.8v1.8h-1.8ZM511.60 551.60h1.8v1.8h-1.8ZM513.40 551.60h1.8v1.8h-1.8ZM509.80 553.40h1.8v1.8h-1.8Z" fill="#2a2b2e" shape-rendering="auto"/><path d="M522.40 542.60h1.8v1.8h-1.8ZM524.20 542.60h1.8v1.8h-1.8ZM522.40 544.40h1.8v1.8h-1.8ZM524.20 544.40h1.8v1.8h-1.8ZM518.80 546.20h1.8v1.8h-1.8ZM520.60 546.20h1.8v1.8h-1.8ZM522.40 546.20h1.8v1.8h-1.8ZM524.20 546.20h1.8v1.8h-1.8ZM518.80 548.00h1.8v1.8h-1.8ZM520.60 548.00h1.8v1.8h-1.8ZM522.40 548.00h1.8v1.8h-1.8ZM524.20 548.00h1.8v1.8h-1.8ZM515.20 549.80h1.8v1.8h-1.8ZM517.00 549.80h1.8v1.8h-1.8ZM518.80 549.80h1.8v1.8h-1.8ZM520.60 549.80h1.8v1.8h-1.8ZM522.40 549.80h1.8v1.8h-1.8ZM524.20 549.80h1.8v1.8h-1.8ZM515.20 551.60h1.8v1.8h-1.8ZM517.00 551.60h1.8v1.8h-1.8ZM518.80 551.60h1.8v1.8h-1.8ZM520.60 551.60h1.8v1.8h-1.8ZM522.40 551.60h1.8v1.8h-1.8ZM524.20 551.60h1.8v1.8h-1.8ZM511.60 553.40h1.8v1.8h-1.8ZM513.40 553.40h1.8v1.8h-1.8ZM515.20 553.40h1.8v1.8h-1.8ZM517.00 553.40h1.8v1.8h-1.8ZM518.80 553.40h1.8v1.8h-1.8ZM520.60 553.40h1.8v1.8h-1.8ZM522.40 553.40h1.8v1.8h-1.8ZM524.20 553.40h1.8v1.8h-1.8Z" fill="#ffffff" shape-rendering="auto"/><path d="M637.20 539.00h1.8v1.8h-1.8ZM635.40 539.00h1.8v1.8h-1.8ZM633.60 539.00h1.8v1.8h-1.8ZM631.80 539.00h1.8v1.8h-1.8ZM630.00 539.00h1.8v1.8h-1.8ZM628.20 539.00h1.8v1.8h-1.8ZM626.40 539.00h1.8v1.8h-1.8ZM624.60 539.00h1.8v1.8h-1.8ZM622.80 539.00h1.8v1.8h-1.8ZM621.00 539.00h1.8v1.8h-1.8ZM637.20 540.80h1.8v1.8h-1.8ZM630.00 540.80h1.8v1.8h-1.8ZM626.40 540.80h1.8v1.8h-1.8ZM637.20 542.60h1.8v1.8h-1.8ZM630.00 542.60h1.8v1.8h-1.8ZM628.20 542.60h1.8v1.8h-1.8ZM626.40 542.60h1.8v1.8h-1.8ZM637.20 544.40h1.8v1.8h-1.8ZM630.00 544.40h1.8v1.8h-1.8ZM637.20 546.20h1.8v1.8h-1.8ZM635.40 546.20h1.8v1.8h-1.8ZM633.60 546.20h1.8v1.8h-1.8ZM631.80 546.20h1.8v1.8h-1.8ZM630.00 546.20h1.8v1.8h-1.8ZM637.20 548.00h1.8v1.8h-1.8ZM633.60 548.00h1.8v1.8h-1.8ZM637.20 549.80h1.8v1.8h-1.8ZM635.40 549.80h1.8v1.8h-1.8ZM633.60 549.80h1.8v1.8h-1.8ZM637.20 551.60h1.8v1.8h-1.8ZM637.20 553.40h1.8v1.8h-1.8Z" fill="#8e8f91" shape-rendering="auto"/><path d="M635.40 540.80h1.8v1.8h-1.8ZM633.60 540.80h1.8v1.8h-1.8ZM631.80 540.80h1.8v1.8h-1.8ZM628.20 540.80h1.8v1.8h-1.8ZM624.60 540.80h1.8v1.8h-1.8ZM622.80 540.80h1.8v1.8h-1.8ZM621.00 540.80h1.8v1.8h-1.8ZM635.40 542.60h1.8v1.8h-1.8ZM633.60 542.60h1.8v1.8h-1.8ZM631.80 542.60h1.8v1.8h-1.8ZM624.60 542.60h1.8v1.8h-1.8ZM635.40 544.40h1.8v1.8h-1.8ZM633.60 544.40h1.8v1.8h-1.8ZM631.80 544.40h1.8v1.8h-1.8ZM628.20 544.40h1.8v1.8h-1.8ZM626.40 544.40h1.8v1.8h-1.8ZM624.60 544.40h1.8v1.8h-1.8ZM628.20 546.20h1.8v1.8h-1.8ZM635.40 548.00h1.8v1.8h-1.8ZM631.80 548.00h1.8v1.8h-1.8ZM630.00 548.00h1.8v1.8h-1.8ZM628.20 548.00h1.8v1.8h-1.8ZM631.80 549.80h1.8v1.8h-1.8ZM635.40 551.60h1.8v1.8h-1.8ZM633.60 551.60h1.8v1.8h-1.8ZM631.80 551.60h1.8v1.8h-1.8ZM635.40 553.40h1.8v1.8h-1.8Z" fill="#2a2b2e" shape-rendering="auto"/><path d="M622.80 542.60h1.8v1.8h-1.8ZM621.00 542.60h1.8v1.8h-1.8ZM622.80 544.40h1.8v1.8h-1.8ZM621.00 544.40h1.8v1.8h-1.8ZM626.40 546.20h1.8v1.8h-1.8ZM624.60 546.20h1.8v1.8h-1.8ZM622.80 546.20h1.8v1.8h-1.8ZM621.00 546.20h1.8v1.8h-1.8ZM626.40 548.00h1.8v1.8h-1.8ZM624.60 548.00h1.8v1.8h-1.8ZM622.80 548.00h1.8v1.8h-1.8ZM621.00 548.00h1.8v1.8h-1.8ZM630.00 549.80h1.8v1.8h-1.8ZM628.20 549.80h1.8v1.8h-1.8ZM626.40 549.80h1.8v1.8h-1.8ZM624.60 549.80h1.8v1.8h-1.8ZM622.80 549.80h1.8v1.8h-1.8ZM621.00 549.80h1.8v1.8h-1.8ZM630.00 551.60h1.8v1.8h-1.8ZM628.20 551.60h1.8v1.8h-1.8ZM626.40 551.60h1.8v1.8h-1.8ZM624.60 551.60h1.8v1.8h-1.8ZM622.80 551.60h1.8v1.8h-1.8ZM621.00 551.60h1.8v1.8h-1.8ZM633.60 553.40h1.8v1.8h-1.8ZM631.80 553.40h1.8v1.8h-1.8ZM630.00 553.40h1.8v1.8h-1.8ZM628.20 553.40h1.8v1.8h-1.8ZM626.40 553.40h1.8v1.8h-1.8ZM624.60 553.40h1.8v1.8h-1.8ZM622.80 553.40h1.8v1.8h-1.8ZM621.00 553.40h1.8v1.8h-1.8Z" fill="#ffffff" shape-rendering="auto"/><path d="M508.00 624.20h1.8v1.8h-1.8ZM509.80 624.20h1.8v1.8h-1.8ZM511.60 624.20h1.8v1.8h-1.8ZM513.40 624.20h1.8v1.8h-1.8ZM515.20 624.20h1.8v1.8h-1.8ZM517.00 624.20h1.8v1.8h-1.8ZM518.80 624.20h1.8v1.8h-1.8ZM520.60 624.20h1.8v1.8h-1.8ZM522.40 624.20h1.8v1.8h-1.8ZM524.20 624.20h1.8v1.8h-1.8ZM508.00 622.40h1.8v1.8h-1.8ZM515.20 622.40h1.8v1.8h-1.8ZM518.80 622.40h1.8v1.8h-1.8ZM508.00 620.60h1.8v1.8h-1.8ZM515.20 620.60h1.8v1.8h-1.8ZM517.00 620.60h1.8v1.8h-1.8ZM518.80 620.60h1.8v1.8h-1.8ZM508.00 618.80h1.8v1.8h-1.8ZM515.20 618.80h1.8v1.8h-1.8ZM508.00 617.00h1.8v1.8h-1.8ZM509.80 617.00h1.8v1.8h-1.8ZM511.60 617.00h1.8v1.8h-1.8ZM513.40 617.00h1.8v1.8h-1.8ZM515.20 617.00h1.8v1.8h-1.8ZM508.00 615.20h1.8v1.8h-1.8ZM511.60 615.20h1.8v1.8h-1.8ZM508.00 613.40h1.8v1.8h-1.8ZM509.80 613.40h1.8v1.8h-1.8ZM511.60 613.40h1.8v1.8h-1.8ZM508.00 611.60h1.8v1.8h-1.8ZM508.00 609.80h1.8v1.8h-1.8Z" fill="#8e8f91" shape-rendering="auto"/><path d="M509.80 622.40h1.8v1.8h-1.8ZM511.60 622.40h1.8v1.8h-1.8ZM513.40 622.40h1.8v1.8h-1.8ZM517.00 622.40h1.8v1.8h-1.8ZM520.60 622.40h1.8v1.8h-1.8ZM522.40 622.40h1.8v1.8h-1.8ZM524.20 622.40h1.8v1.8h-1.8ZM509.80 620.60h1.8v1.8h-1.8ZM511.60 620.60h1.8v1.8h-1.8ZM513.40 620.60h1.8v1.8h-1.8ZM520.60 620.60h1.8v1.8h-1.8ZM509.80 618.80h1.8v1.8h-1.8ZM511.60 618.80h1.8v1.8h-1.8ZM513.40 618.80h1.8v1.8h-1.8ZM517.00 618.80h1.8v1.8h-1.8ZM518.80 618.80h1.8v1.8h-1.8ZM520.60 618.80h1.8v1.8h-1.8ZM517.00 617.00h1.8v1.8h-1.8ZM509.80 615.20h1.8v1.8h-1.8ZM513.40 615.20h1.8v1.8h-1.8ZM515.20 615.20h1.8v1.8h-1.8ZM517.00 615.20h1.8v1.8h-1.8ZM513.40 613.40h1.8v1.8h-1.8ZM509.80 611.60h1.8v1.8h-1.8ZM511.60 611.60h1.8v1.8h-1.8ZM513.40 611.60h1.8v1.8h-1.8ZM509.80 609.80h1.8v1.8h-1.8Z" fill="#2a2b2e" shape-rendering="auto"/><path d="M522.40 620.60h1.8v1.8h-1.8ZM524.20 620.60h1.8v1.8h-1.8ZM522.40 618.80h1.8v1.8h-1.8ZM524.20 618.80h1.8v1.8h-1.8ZM518.80 617.00h1.8v1.8h-1.8ZM520.60 617.00h1.8v1.8h-1.8ZM522.40 617.00h1.8v1.8h-1.8ZM524.20 617.00h1.8v1.8h-1.8ZM518.80 615.20h1.8v1.8h-1.8ZM520.60 615.20h1.8v1.8h-1.8ZM522.40 615.20h1.8v1.8h-1.8ZM524.20 615.20h1.8v1.8h-1.8ZM515.20 613.40h1.8v1.8h-1.8ZM517.00 613.40h1.8v1.8h-1.8ZM518.80 613.40h1.8v1.8h-1.8ZM520.60 613.40h1.8v1.8h-1.8ZM522.40 613.40h1.8v1.8h-1.8ZM524.20 613.40h1.8v1.8h-1.8ZM515.20 611.60h1.8v1.8h-1.8ZM517.00 611.60h1.8v1.8h-1.8ZM518.80 611.60h1.8v1.8h-1.8ZM520.60 611.60h1.8v1.8h-1.8ZM522.40 611.60h1.8v1.8h-1.8ZM524.20 611.60h1.8v1.8h-1.8ZM511.60 609.80h1.8v1.8h-1.8ZM513.40 609.80h1.8v1.8h-1.8ZM515.20 609.80h1.8v1.8h-1.8ZM517.00 609.80h1.8v1.8h-1.8ZM518.80 609.80h1.8v1.8h-1.8ZM520.60 609.80h1.8v1.8h-1.8ZM522.40 609.80h1.8v1.8h-1.8ZM524.20 609.80h1.8v1.8h-1.8Z" fill="#ffffff" shape-rendering="auto"/><path d="M637.20 624.20h1.8v1.8h-1.8ZM635.40 624.20h1.8v1.8h-1.8ZM633.60 624.20h1.8v1.8h-1.8ZM631.80 624.20h1.8v1.8h-1.8ZM630.00 624.20h1.8v1.8h-1.8ZM628.20 624.20h1.8v1.8h-1.8ZM626.40 624.20h1.8v1.8h-1.8ZM624.60 624.20h1.8v1.8h-1.8ZM622.80 624.20h1.8v1.8h-1.8ZM621.00 624.20h1.8v1.8h-1.8ZM637.20 622.40h1.8v1.8h-1.8ZM630.00 622.40h1.8v1.8h-1.8ZM626.40 622.40h1.8v1.8h-1.8ZM637.20 620.60h1.8v1.8h-1.8ZM630.00 620.60h1.8v1.8h-1.8ZM628.20 620.60h1.8v1.8h-1.8ZM626.40 620.60h1.8v1.8h-1.8ZM637.20 618.80h1.8v1.8h-1.8ZM630.00 618.80h1.8v1.8h-1.8ZM637.20 617.00h1.8v1.8h-1.8ZM635.40 617.00h1.8v1.8h-1.8ZM633.60 617.00h1.8v1.8h-1.8ZM631.80 617.00h1.8v1.8h-1.8ZM630.00 617.00h1.8v1.8h-1.8ZM637.20 615.20h1.8v1.8h-1.8ZM633.60 615.20h1.8v1.8h-1.8ZM637.20 613.40h1.8v1.8h-1.8ZM635.40 613.40h1.8v1.8h-1.8ZM633.60 613.40h1.8v1.8h-1.8ZM637.20 611.60h1.8v1.8h-1.8ZM637.20 609.80h1.8v1.8h-1.8Z" fill="#8e8f91" shape-rendering="auto"/><path d="M635.40 622.40h1.8v1.8h-1.8ZM633.60 622.40h1.8v1.8h-1.8ZM631.80 622.40h1.8v1.8h-1.8ZM628.20 622.40h1.8v1.8h-1.8ZM624.60 622.40h1.8v1.8h-1.8ZM622.80 622.40h1.8v1.8h-1.8ZM621.00 622.40h1.8v1.8h-1.8ZM635.40 620.60h1.8v1.8h-1.8ZM633.60 620.60h1.8v1.8h-1.8ZM631.80 620.60h1.8v1.8h-1.8ZM624.60 620.60h1.8v1.8h-1.8ZM635.40 618.80h1.8v1.8h-1.8ZM633.60 618.80h1.8v1.8h-1.8ZM631.80 618.80h1.8v1.8h-1.8ZM628.20 618.80h1.8v1.8h-1.8ZM626.40 618.80h1.8v1.8h-1.8ZM624.60 618.80h1.8v1.8h-1.8ZM628.20 617.00h1.8v1.8h-1.8ZM635.40 615.20h1.8v1.8h-1.8ZM631.80 615.20h1.8v1.8h-1.8ZM630.00 615.20h1.8v1.8h-1.8ZM628.20 615.20h1.8v1.8h-1.8ZM631.80 613.40h1.8v1.8h-1.8ZM635.40 611.60h1.8v1.8h-1.8ZM633.60 611.60h1.8v1.8h-1.8ZM631.80 611.60h1.8v1.8h-1.8ZM635.40 609.80h1.8v1.8h-1.8Z" fill="#2a2b2e" shape-rendering="auto"/><path d="M622.80 620.60h1.8v1.8h-1.8ZM621.00 620.60h1.8v1.8h-1.8ZM622.80 618.80h1.8v1.8h-1.8ZM621.00 618.80h1.8v1.8h-1.8ZM626.40 617.00h1.8v1.8h-1.8ZM624.60 617.00h1.8v1.8h-1.8ZM622.80 617.00h1.8v1.8h-1.8ZM621.00 617.00h1.8v1.8h-1.8ZM626.40 615.20h1.8v1.8h-1.8ZM624.60 615.20h1.8v1.8h-1.8ZM622.80 615.20h1.8v1.8h-1.8ZM621.00 615.20h1.8v1.8h-1.8ZM630.00 613.40h1.8v1.8h-1.8ZM628.20 613.40h1.8v1.8h-1.8ZM626.40 613.40h1.8v1.8h-1.8ZM624.60 613.40h1.8v1.8h-1.8ZM622.80 613.40h1.8v1.8h-1.8ZM621.00 613.40h1.8v1.8h-1.8ZM630.00 611.60h1.8v1.8h-1.8ZM628.20 611.60h1.8v1.8h-1.8ZM626.40 611.60h1.8v1.8h-1.8ZM624.60 611.60h1.8v1.8h-1.8ZM622.80 611.60h1.8v1.8h-1.8ZM621.00 611.60h1.8v1.8h-1.8ZM633.60 609.80h1.8v1.8h-1.8ZM631.80 609.80h1.8v1.8h-1.8ZM630.00 609.80h1.8v1.8h-1.8ZM628.20 609.80h1.8v1.8h-1.8ZM626.40 609.80h1.8v1.8h-1.8ZM624.60 609.80h1.8v1.8h-1.8ZM622.80 609.80h1.8v1.8h-1.8ZM621.00 609.80h1.8v1.8h-1.8Z" fill="#ffffff" shape-rendering="auto"/><rect x="688" y="539" width="131" height="87" fill="#8e8f91" /><rect x="689.8" y="540.8" width="127.4" height="83.4" fill="#2a2b2e" shape-rendering="auto"/><rect x="691.6" y="542.6" width="123.8" height="79.8" fill="#ffffff" shape-rendering="auto"/><rect x="699" y="543" width="1" height="79" fill="#f9f9f9" /><rect x="708" y="543" width="1" height="79" fill="#f9f9f9" /><rect x="717" y="543" width="1" height="79" fill="#f9f9f9" /><rect x="726" y="543" width="1" height="79" fill="#f9f9f9" /><rect x="735" y="543" width="1" height="79" fill="#f9f9f9" /><rect x="744" y="543" width="1" height="79" fill="#f9f9f9" /><rect x="753" y="543" width="1" height="79" fill="#f9f9f9" /><rect x="762" y="543" width="1" height="79" fill="#f9f9f9" /><rect x="780" y="543" width="1" height="79" fill="#f9f9f9" /><rect x="789" y="543" width="1" height="79" fill="#f9f9f9" /><rect x="798" y="543" width="1" height="79" fill="#f9f9f9" /><rect x="807" y="543" width="1" height="79" fill="#f9f9f9" /><rect x="692" y="618" width="123" height="1" fill="#f9f9f9" /><rect x="692" y="609" width="123" height="1" fill="#f9f9f9" /><rect x="692" y="591" width="123" height="1" fill="#f9f9f9" /><rect x="692" y="582" width="123" height="1" fill="#f9f9f9" /><rect x="692" y="573" width="123" height="1" fill="#f9f9f9" /><rect x="692" y="564" width="123" height="1" fill="#f9f9f9" /><rect x="692" y="555" width="123" height="1" fill="#f9f9f9" /><rect x="692" y="546" width="123" height="1" fill="#f9f9f9" /><rect x="771" y="542" width="1" height="81" fill="#d8d8d8" /><rect x="691" y="600" width="125" height="1" fill="#d8d8d8" /><rect x="710" y="539" width="1" height="87" fill="#8e9094" /><rect x="796" y="539" width="1" height="87" fill="#8e9094" /><rect x="690" y="561" width="127" height="1" fill="#8e9094" /><rect x="690" y="604" width="127" height="1" fill="#8e9094" /><path d="M688.00 539.00h1.8v1.8h-1.8ZM689.80 539.00h1.8v1.8h-1.8ZM691.60 539.00h1.8v1.8h-1.8ZM693.40 539.00h1.8v1.8h-1.8ZM695.20 539.00h1.8v1.8h-1.8ZM697.00 539.00h1.8v1.8h-1.8ZM698.80 539.00h1.8v1.8h-1.8ZM700.60 539.00h1.8v1.8h-1.8ZM702.40 539.00h1.8v1.8h-1.8ZM704.20 539.00h1.8v1.8h-1.8ZM688.00 540.80h1.8v1.8h-1.8ZM695.20 540.80h1.8v1.8h-1.8ZM698.80 540.80h1.8v1.8h-1.8ZM688.00 542.60h1.8v1.8h-1.8ZM695.20 542.60h1.8v1.8h-1.8ZM697.00 542.60h1.8v1.8h-1.8ZM698.80 542.60h1.8v1.8h-1.8ZM688.00 544.40h1.8v1.8h-1.8ZM695.20 544.40h1.8v1.8h-1.8ZM688.00 546.20h1.8v1.8h-1.8ZM689.80 546.20h1.8v1.8h-1.8ZM691.60 546.20h1.8v1.8h-1.8ZM693.40 546.20h1.8v1.8h-1.8ZM695.20 546.20h1.8v1.8h-1.8ZM688.00 548.00h1.8v1.8h-1.8ZM691.60 548.00h1.8v1.8h-1.8ZM688.00 549.80h1.8v1.8h-1.8ZM689.80 549.80h1.8v1.8h-1.8ZM691.60 549.80h1.8v1.8h-1.8ZM688.00 551.60h1.8v1.8h-1.8ZM688.00 553.40h1.8v1.8h-1.8Z" fill="#8e8f91" shape-rendering="auto"/><path d="M689.80 540.80h1.8v1.8h-1.8ZM691.60 540.80h1.8v1.8h-1.8ZM693.40 540.80h1.8v1.8h-1.8ZM697.00 540.80h1.8v1.8h-1.8ZM700.60 540.80h1.8v1.8h-1.8ZM702.40 540.80h1.8v1.8h-1.8ZM704.20 540.80h1.8v1.8h-1.8ZM689.80 542.60h1.8v1.8h-1.8ZM691.60 542.60h1.8v1.8h-1.8ZM693.40 542.60h1.8v1.8h-1.8ZM700.60 542.60h1.8v1.8h-1.8ZM689.80 544.40h1.8v1.8h-1.8ZM691.60 544.40h1.8v1.8h-1.8ZM693.40 544.40h1.8v1.8h-1.8ZM697.00 544.40h1.8v1.8h-1.8ZM698.80 544.40h1.8v1.8h-1.8ZM700.60 544.40h1.8v1.8h-1.8ZM697.00 546.20h1.8v1.8h-1.8ZM689.80 548.00h1.8v1.8h-1.8ZM693.40 548.00h1.8v1.8h-1.8ZM695.20 548.00h1.8v1.8h-1.8ZM697.00 548.00h1.8v1.8h-1.8ZM693.40 549.80h1.8v1.8h-1.8ZM689.80 551.60h1.8v1.8h-1.8ZM691.60 551.60h1.8v1.8h-1.8ZM693.40 551.60h1.8v1.8h-1.8ZM689.80 553.40h1.8v1.8h-1.8Z" fill="#2a2b2e" shape-rendering="auto"/><path d="M702.40 542.60h1.8v1.8h-1.8ZM704.20 542.60h1.8v1.8h-1.8ZM702.40 544.40h1.8v1.8h-1.8ZM704.20 544.40h1.8v1.8h-1.8ZM698.80 546.20h1.8v1.8h-1.8ZM700.60 546.20h1.8v1.8h-1.8ZM702.40 546.20h1.8v1.8h-1.8ZM704.20 546.20h1.8v1.8h-1.8ZM698.80 548.00h1.8v1.8h-1.8ZM700.60 548.00h1.8v1.8h-1.8ZM702.40 548.00h1.8v1.8h-1.8ZM704.20 548.00h1.8v1.8h-1.8ZM695.20 549.80h1.8v1.8h-1.8ZM697.00 549.80h1.8v1.8h-1.8ZM698.80 549.80h1.8v1.8h-1.8ZM700.60 549.80h1.8v1.8h-1.8ZM702.40 549.80h1.8v1.8h-1.8ZM704.20 549.80h1.8v1.8h-1.8ZM695.20 551.60h1.8v1.8h-1.8ZM697.00 551.60h1.8v1.8h-1.8ZM698.80 551.60h1.8v1.8h-1.8ZM700.60 551.60h1.8v1.8h-1.8ZM702.40 551.60h1.8v1.8h-1.8ZM704.20 551.60h1.8v1.8h-1.8ZM691.60 553.40h1.8v1.8h-1.8ZM693.40 553.40h1.8v1.8h-1.8ZM695.20 553.40h1.8v1.8h-1.8ZM697.00 553.40h1.8v1.8h-1.8ZM698.80 553.40h1.8v1.8h-1.8ZM700.60 553.40h1.8v1.8h-1.8ZM702.40 553.40h1.8v1.8h-1.8ZM704.20 553.40h1.8v1.8h-1.8Z" fill="#ffffff" shape-rendering="auto"/><path d="M817.20 539.00h1.8v1.8h-1.8ZM815.40 539.00h1.8v1.8h-1.8ZM813.60 539.00h1.8v1.8h-1.8ZM811.80 539.00h1.8v1.8h-1.8ZM810.00 539.00h1.8v1.8h-1.8ZM808.20 539.00h1.8v1.8h-1.8ZM806.40 539.00h1.8v1.8h-1.8ZM804.60 539.00h1.8v1.8h-1.8ZM802.80 539.00h1.8v1.8h-1.8ZM801.00 539.00h1.8v1.8h-1.8ZM817.20 540.80h1.8v1.8h-1.8ZM810.00 540.80h1.8v1.8h-1.8ZM806.40 540.80h1.8v1.8h-1.8ZM817.20 542.60h1.8v1.8h-1.8ZM810.00 542.60h1.8v1.8h-1.8ZM808.20 542.60h1.8v1.8h-1.8ZM806.40 542.60h1.8v1.8h-1.8ZM817.20 544.40h1.8v1.8h-1.8ZM810.00 544.40h1.8v1.8h-1.8ZM817.20 546.20h1.8v1.8h-1.8ZM815.40 546.20h1.8v1.8h-1.8ZM813.60 546.20h1.8v1.8h-1.8ZM811.80 546.20h1.8v1.8h-1.8ZM810.00 546.20h1.8v1.8h-1.8ZM817.20 548.00h1.8v1.8h-1.8ZM813.60 548.00h1.8v1.8h-1.8ZM817.20 549.80h1.8v1.8h-1.8ZM815.40 549.80h1.8v1.8h-1.8ZM813.60 549.80h1.8v1.8h-1.8ZM817.20 551.60h1.8v1.8h-1.8ZM817.20 553.40h1.8v1.8h-1.8Z" fill="#8e8f91" shape-rendering="auto"/><path d="M815.40 540.80h1.8v1.8h-1.8ZM813.60 540.80h1.8v1.8h-1.8ZM811.80 540.80h1.8v1.8h-1.8ZM808.20 540.80h1.8v1.8h-1.8ZM804.60 540.80h1.8v1.8h-1.8ZM802.80 540.80h1.8v1.8h-1.8ZM801.00 540.80h1.8v1.8h-1.8ZM815.40 542.60h1.8v1.8h-1.8ZM813.60 542.60h1.8v1.8h-1.8ZM811.80 542.60h1.8v1.8h-1.8ZM804.60 542.60h1.8v1.8h-1.8ZM815.40 544.40h1.8v1.8h-1.8ZM813.60 544.40h1.8v1.8h-1.8ZM811.80 544.40h1.8v1.8h-1.8ZM808.20 544.40h1.8v1.8h-1.8ZM806.40 544.40h1.8v1.8h-1.8ZM804.60 544.40h1.8v1.8h-1.8ZM808.20 546.20h1.8v1.8h-1.8ZM815.40 548.00h1.8v1.8h-1.8ZM811.80 548.00h1.8v1.8h-1.8ZM810.00 548.00h1.8v1.8h-1.8ZM808.20 548.00h1.8v1.8h-1.8ZM811.80 549.80h1.8v1.8h-1.8ZM815.40 551.60h1.8v1.8h-1.8ZM813.60 551.60h1.8v1.8h-1.8ZM811.80 551.60h1.8v1.8h-1.8ZM815.40 553.40h1.8v1.8h-1.8Z" fill="#2a2b2e" shape-rendering="auto"/><path d="M802.80 542.60h1.8v1.8h-1.8ZM801.00 542.60h1.8v1.8h-1.8ZM802.80 544.40h1.8v1.8h-1.8ZM801.00 544.40h1.8v1.8h-1.8ZM806.40 546.20h1.8v1.8h-1.8ZM804.60 546.20h1.8v1.8h-1.8ZM802.80 546.20h1.8v1.8h-1.8ZM801.00 546.20h1.8v1.8h-1.8ZM806.40 548.00h1.8v1.8h-1.8ZM804.60 548.00h1.8v1.8h-1.8ZM802.80 548.00h1.8v1.8h-1.8ZM801.00 548.00h1.8v1.8h-1.8ZM810.00 549.80h1.8v1.8h-1.8ZM808.20 549.80h1.8v1.8h-1.8ZM806.40 549.80h1.8v1.8h-1.8ZM804.60 549.80h1.8v1.8h-1.8ZM802.80 549.80h1.8v1.8h-1.8ZM801.00 549.80h1.8v1.8h-1.8ZM810.00 551.60h1.8v1.8h-1.8ZM808.20 551.60h1.8v1.8h-1.8ZM806.40 551.60h1.8v1.8h-1.8ZM804.60 551.60h1.8v1.8h-1.8ZM802.80 551.60h1.8v1.8h-1.8ZM801.00 551.60h1.8v1.8h-1.8ZM813.60 553.40h1.8v1.8h-1.8ZM811.80 553.40h1.8v1.8h-1.8ZM810.00 553.40h1.8v1.8h-1.8ZM808.20 553.40h1.8v1.8h-1.8ZM806.40 553.40h1.8v1.8h-1.8ZM804.60 553.40h1.8v1.8h-1.8ZM802.80 553.40h1.8v1.8h-1.8ZM801.00 553.40h1.8v1.8h-1.8Z" fill="#ffffff" shape-rendering="auto"/><path d="M688.00 624.20h1.8v1.8h-1.8ZM689.80 624.20h1.8v1.8h-1.8ZM691.60 624.20h1.8v1.8h-1.8ZM693.40 624.20h1.8v1.8h-1.8ZM695.20 624.20h1.8v1.8h-1.8ZM697.00 624.20h1.8v1.8h-1.8ZM698.80 624.20h1.8v1.8h-1.8ZM700.60 624.20h1.8v1.8h-1.8ZM702.40 624.20h1.8v1.8h-1.8ZM704.20 624.20h1.8v1.8h-1.8ZM688.00 622.40h1.8v1.8h-1.8ZM695.20 622.40h1.8v1.8h-1.8ZM698.80 622.40h1.8v1.8h-1.8ZM688.00 620.60h1.8v1.8h-1.8ZM695.20 620.60h1.8v1.8h-1.8ZM697.00 620.60h1.8v1.8h-1.8ZM698.80 620.60h1.8v1.8h-1.8ZM688.00 618.80h1.8v1.8h-1.8ZM695.20 618.80h1.8v1.8h-1.8ZM688.00 617.00h1.8v1.8h-1.8ZM689.80 617.00h1.8v1.8h-1.8ZM691.60 617.00h1.8v1.8h-1.8ZM693.40 617.00h1.8v1.8h-1.8ZM695.20 617.00h1.8v1.8h-1.8ZM688.00 615.20h1.8v1.8h-1.8ZM691.60 615.20h1.8v1.8h-1.8ZM688.00 613.40h1.8v1.8h-1.8ZM689.80 613.40h1.8v1.8h-1.8ZM691.60 613.40h1.8v1.8h-1.8ZM688.00 611.60h1.8v1.8h-1.8ZM688.00 609.80h1.8v1.8h-1.8Z" fill="#8e8f91" shape-rendering="auto"/><path d="M689.80 622.40h1.8v1.8h-1.8ZM691.60 622.40h1.8v1.8h-1.8ZM693.40 622.40h1.8v1.8h-1.8ZM697.00 622.40h1.8v1.8h-1.8ZM700.60 622.40h1.8v1.8h-1.8ZM702.40 622.40h1.8v1.8h-1.8ZM704.20 622.40h1.8v1.8h-1.8ZM689.80 620.60h1.8v1.8h-1.8ZM691.60 620.60h1.8v1.8h-1.8ZM693.40 620.60h1.8v1.8h-1.8ZM700.60 620.60h1.8v1.8h-1.8ZM689.80 618.80h1.8v1.8h-1.8ZM691.60 618.80h1.8v1.8h-1.8ZM693.40 618.80h1.8v1.8h-1.8ZM697.00 618.80h1.8v1.8h-1.8ZM698.80 618.80h1.8v1.8h-1.8ZM700.60 618.80h1.8v1.8h-1.8ZM697.00 617.00h1.8v1.8h-1.8ZM689.80 615.20h1.8v1.8h-1.8ZM693.40 615.20h1.8v1.8h-1.8ZM695.20 615.20h1.8v1.8h-1.8ZM697.00 615.20h1.8v1.8h-1.8ZM693.40 613.40h1.8v1.8h-1.8ZM689.80 611.60h1.8v1.8h-1.8ZM691.60 611.60h1.8v1.8h-1.8ZM693.40 611.60h1.8v1.8h-1.8ZM689.80 609.80h1.8v1.8h-1.8Z" fill="#2a2b2e" shape-rendering="auto"/><path d="M702.40 620.60h1.8v1.8h-1.8ZM704.20 620.60h1.8v1.8h-1.8ZM702.40 618.80h1.8v1.8h-1.8ZM704.20 618.80h1.8v1.8h-1.8ZM698.80 617.00h1.8v1.8h-1.8ZM700.60 617.00h1.8v1.8h-1.8ZM702.40 617.00h1.8v1.8h-1.8ZM704.20 617.00h1.8v1.8h-1.8ZM698.80 615.20h1.8v1.8h-1.8ZM700.60 615.20h1.8v1.8h-1.8ZM702.40 615.20h1.8v1.8h-1.8ZM704.20 615.20h1.8v1.8h-1.8ZM695.20 613.40h1.8v1.8h-1.8ZM697.00 613.40h1.8v1.8h-1.8ZM698.80 613.40h1.8v1.8h-1.8ZM700.60 613.40h1.8v1.8h-1.8ZM702.40 613.40h1.8v1.8h-1.8ZM704.20 613.40h1.8v1.8h-1.8ZM695.20 611.60h1.8v1.8h-1.8ZM697.00 611.60h1.8v1.8h-1.8ZM698.80 611.60h1.8v1.8h-1.8ZM700.60 611.60h1.8v1.8h-1.8ZM702.40 611.60h1.8v1.8h-1.8ZM704.20 611.60h1.8v1.8h-1.8ZM691.60 609.80h1.8v1.8h-1.8ZM693.40 609.80h1.8v1.8h-1.8ZM695.20 609.80h1.8v1.8h-1.8ZM697.00 609.80h1.8v1.8h-1.8ZM698.80 609.80h1.8v1.8h-1.8ZM700.60 609.80h1.8v1.8h-1.8ZM702.40 609.80h1.8v1.8h-1.8ZM704.20 609.80h1.8v1.8h-1.8Z" fill="#ffffff" shape-rendering="auto"/><path d="M817.20 624.20h1.8v1.8h-1.8ZM815.40 624.20h1.8v1.8h-1.8ZM813.60 624.20h1.8v1.8h-1.8ZM811.80 624.20h1.8v1.8h-1.8ZM810.00 624.20h1.8v1.8h-1.8ZM808.20 624.20h1.8v1.8h-1.8ZM806.40 624.20h1.8v1.8h-1.8ZM804.60 624.20h1.8v1.8h-1.8ZM802.80 624.20h1.8v1.8h-1.8ZM801.00 624.20h1.8v1.8h-1.8ZM817.20 622.40h1.8v1.8h-1.8ZM810.00 622.40h1.8v1.8h-1.8ZM806.40 622.40h1.8v1.8h-1.8ZM817.20 620.60h1.8v1.8h-1.8ZM810.00 620.60h1.8v1.8h-1.8ZM808.20 620.60h1.8v1.8h-1.8ZM806.40 620.60h1.8v1.8h-1.8ZM817.20 618.80h1.8v1.8h-1.8ZM810.00 618.80h1.8v1.8h-1.8ZM817.20 617.00h1.8v1.8h-1.8ZM815.40 617.00h1.8v1.8h-1.8ZM813.60 617.00h1.8v1.8h-1.8ZM811.80 617.00h1.8v1.8h-1.8ZM810.00 617.00h1.8v1.8h-1.8ZM817.20 615.20h1.8v1.8h-1.8ZM813.60 615.20h1.8v1.8h-1.8ZM817.20 613.40h1.8v1.8h-1.8ZM815.40 613.40h1.8v1.8h-1.8ZM813.60 613.40h1.8v1.8h-1.8ZM817.20 611.60h1.8v1.8h-1.8ZM817.20 609.80h1.8v1.8h-1.8Z" fill="#8e8f91" shape-rendering="auto"/><path d="M815.40 622.40h1.8v1.8h-1.8ZM813.60 622.40h1.8v1.8h-1.8ZM811.80 622.40h1.8v1.8h-1.8ZM808.20 622.40h1.8v1.8h-1.8ZM804.60 622.40h1.8v1.8h-1.8ZM802.80 622.40h1.8v1.8h-1.8ZM801.00 622.40h1.8v1.8h-1.8ZM815.40 620.60h1.8v1.8h-1.8ZM813.60 620.60h1.8v1.8h-1.8ZM811.80 620.60h1.8v1.8h-1.8ZM804.60 620.60h1.8v1.8h-1.8ZM815.40 618.80h1.8v1.8h-1.8ZM813.60 618.80h1.8v1.8h-1.8ZM811.80 618.80h1.8v1.8h-1.8ZM808.20 618.80h1.8v1.8h-1.8ZM806.40 618.80h1.8v1.8h-1.8ZM804.60 618.80h1.8v1.8h-1.8ZM808.20 617.00h1.8v1.8h-1.8ZM815.40 615.20h1.8v1.8h-1.8ZM811.80 615.20h1.8v1.8h-1.8ZM810.00 615.20h1.8v1.8h-1.8ZM808.20 615.20h1.8v1.8h-1.8ZM811.80 613.40h1.8v1.8h-1.8ZM815.40 611.60h1.8v1.8h-1.8ZM813.60 611.60h1.8v1.8h-1.8ZM811.80 611.60h1.8v1.8h-1.8ZM815.40 609.80h1.8v1.8h-1.8Z" fill="#2a2b2e" shape-rendering="auto"/><path d="M802.80 620.60h1.8v1.8h-1.8ZM801.00 620.60h1.8v1.8h-1.8ZM802.80 618.80h1.8v1.8h-1.8ZM801.00 618.80h1.8v1.8h-1.8ZM806.40 617.00h1.8v1.8h-1.8ZM804.60 617.00h1.8v1.8h-1.8ZM802.80 617.00h1.8v1.8h-1.8ZM801.00 617.00h1.8v1.8h-1.8ZM806.40 615.20h1.8v1.8h-1.8ZM804.60 615.20h1.8v1.8h-1.8ZM802.80 615.20h1.8v1.8h-1.8ZM801.00 615.20h1.8v1.8h-1.8ZM810.00 613.40h1.8v1.8h-1.8ZM808.20 613.40h1.8v1.8h-1.8ZM806.40 613.40h1.8v1.8h-1.8ZM804.60 613.40h1.8v1.8h-1.8ZM802.80 613.40h1.8v1.8h-1.8ZM801.00 613.40h1.8v1.8h-1.8ZM810.00 611.60h1.8v1.8h-1.8ZM808.20 611.60h1.8v1.8h-1.8ZM806.40 611.60h1.8v1.8h-1.8ZM804.60 611.60h1.8v1.8h-1.8ZM802.80 611.60h1.8v1.8h-1.8ZM801.00 611.60h1.8v1.8h-1.8ZM813.60 609.80h1.8v1.8h-1.8ZM811.80 609.80h1.8v1.8h-1.8ZM810.00 609.80h1.8v1.8h-1.8ZM808.20 609.80h1.8v1.8h-1.8ZM806.40 609.80h1.8v1.8h-1.8ZM804.60 609.80h1.8v1.8h-1.8ZM802.80 609.80h1.8v1.8h-1.8ZM801.00 609.80h1.8v1.8h-1.8Z" fill="#ffffff" shape-rendering="auto"/><rect x="14" y="0" width="1" height="789" fill="#a4a8ae" /><rect x="14" y="788" width="928" height="1" fill="#a4a8ae" /><rect x="0" y="780" width="14" height="1" fill="#a4a8ae" /><rect x="0" y="690" width="14" height="1" fill="#a4a8ae" /><rect x="0" y="600" width="14" height="1" fill="#a4a8ae" /><rect x="0" y="510" width="14" height="1" fill="#a4a8ae" /><rect x="0" y="420" width="14" height="1" fill="#a4a8ae" /><rect x="0" y="330" width="14" height="1" fill="#a4a8ae" /><rect x="0" y="240" width="14" height="1" fill="#a4a8ae" /><rect x="0" y="150" width="14" height="1" fill="#a4a8ae" /><rect x="0" y="60" width="14" height="1" fill="#a4a8ae" /><rect x="51" y="788" width="1" height="16" fill="#a4a8ae" /><rect x="141" y="788" width="1" height="16" fill="#a4a8ae" /><rect x="231" y="788" width="1" height="16" fill="#a4a8ae" /><rect x="321" y="788" width="1" height="16" fill="#a4a8ae" /><rect x="411" y="788" width="1" height="16" fill="#a4a8ae" /><rect x="501" y="788" width="1" height="16" fill="#a4a8ae" /><rect x="591" y="788" width="1" height="16" fill="#a4a8ae" /><rect x="681" y="788" width="1" height="16" fill="#a4a8ae" /><rect x="771" y="788" width="1" height="16" fill="#a4a8ae" /><rect x="861" y="788" width="1" height="16" fill="#a4a8ae" /></svg>
<div style="font-family:'Liberation Sans',sans-serif;font-size:10.4px;color:#a4a8ae;position:absolute;white-space:nowrap;line-height:10px;left:54px;top:792px;letter-spacing:0.3px;">0</div>
<div style="font-family:'Liberation Sans',sans-serif;font-size:10.4px;color:#a4a8ae;position:absolute;white-space:nowrap;line-height:10px;left:144px;top:792px;letter-spacing:0.3px;">100</div>
<div style="font-family:'Liberation Sans',sans-serif;font-size:10.4px;color:#a4a8ae;position:absolute;white-space:nowrap;line-height:10px;left:234px;top:792px;letter-spacing:0.3px;">200</div>
<div style="font-family:'Liberation Sans',sans-serif;font-size:10.4px;color:#a4a8ae;position:absolute;white-space:nowrap;line-height:10px;left:324px;top:792px;letter-spacing:0.3px;">300</div>
<div style="font-family:'Liberation Sans',sans-serif;font-size:10.4px;color:#a4a8ae;position:absolute;white-space:nowrap;line-height:10px;left:414px;top:792px;letter-spacing:0.3px;">400</div>
<div style="font-family:'Liberation Sans',sans-serif;font-size:10.4px;color:#a4a8ae;position:absolute;white-space:nowrap;line-height:10px;left:504px;top:792px;letter-spacing:0.3px;">500</div>
<div style="font-family:'Liberation Sans',sans-serif;font-size:10.4px;color:#a4a8ae;position:absolute;white-space:nowrap;line-height:10px;left:594px;top:792px;letter-spacing:0.3px;">600</div>
<div style="font-family:'Liberation Sans',sans-serif;font-size:10.4px;color:#a4a8ae;position:absolute;white-space:nowrap;line-height:10px;left:684px;top:792px;letter-spacing:0.3px;">700</div>
<div style="font-family:'Liberation Sans',sans-serif;font-size:10.4px;color:#a4a8ae;position:absolute;white-space:nowrap;line-height:10px;left:774px;top:792px;letter-spacing:0.3px;">800</div>
<div style="font-family:'Liberation Sans',sans-serif;font-size:10.4px;color:#a4a8ae;position:absolute;white-space:nowrap;line-height:10px;left:864px;top:792px;letter-spacing:0.3px;">900</div>
<div style="font-family:'Liberation Sans',sans-serif;font-size:10.4px;color:#a4a8ae;position:absolute;white-space:nowrap;line-height:10px;left:4.5px;top:779px;transform-origin:0 0;transform:rotate(-90deg);letter-spacing:0.4px;">-100</div>
<div style="font-family:'Liberation Sans',sans-serif;font-size:10.4px;color:#a4a8ae;position:absolute;white-space:nowrap;line-height:10px;left:4.5px;top:689px;transform-origin:0 0;transform:rotate(-90deg);letter-spacing:0.4px;">0</div>
<div style="font-family:'Liberation Sans',sans-serif;font-size:10.4px;color:#a4a8ae;position:absolute;white-space:nowrap;line-height:10px;left:4.5px;top:599px;transform-origin:0 0;transform:rotate(-90deg);letter-spacing:0.4px;">100</div>
<div style="font-family:'Liberation Sans',sans-serif;font-size:10.4px;color:#a4a8ae;position:absolute;white-space:nowrap;line-height:10px;left:4.5px;top:509px;transform-origin:0 0;transform:rotate(-90deg);letter-spacing:0.4px;">200</div>
<div style="font-family:'Liberation Sans',sans-serif;font-size:10.4px;color:#a4a8ae;position:absolute;white-space:nowrap;line-height:10px;left:4.5px;top:419px;transform-origin:0 0;transform:rotate(-90deg);letter-spacing:0.4px;">300</div>
<div style="font-family:'Liberation Sans',sans-serif;font-size:10.4px;color:#a4a8ae;position:absolute;white-space:nowrap;line-height:10px;left:4.5px;top:329px;transform-origin:0 0;transform:rotate(-90deg);letter-spacing:0.4px;">400</div>
<div style="font-family:'Liberation Sans',sans-serif;font-size:10.4px;color:#a4a8ae;position:absolute;white-space:nowrap;line-height:10px;left:4.5px;top:239px;transform-origin:0 0;transform:rotate(-90deg);letter-spacing:0.4px;">500</div>
<div style="font-family:'Liberation Sans',sans-serif;font-size:10.4px;color:#a4a8ae;position:absolute;white-space:nowrap;line-height:10px;left:4.5px;top:149px;transform-origin:0 0;transform:rotate(-90deg);letter-spacing:0.4px;">600</div>
<div style="font-family:'Liberation Sans',sans-serif;font-size:10.4px;color:#a4a8ae;position:absolute;white-space:nowrap;line-height:10px;left:4.5px;top:59px;transform-origin:0 0;transform:rotate(-90deg);letter-spacing:0.4px;">700</div>
</div>
<div style="position:absolute;left:719.2px;top:206.5px;height:24px;line-height:24px;white-space:nowrap;color:#f5f5f5;font-family:'Liberation Sans', sans-serif;font-size:20px;font-weight:normal;-webkit-text-stroke:0.55px currentColor;transform:scaleX(1.0271);transform-origin:0 0;">Language</div>
<div style="position:absolute;left:427px;top:342px;height:24px;line-height:24px;white-space:nowrap;color:#f9f9f9;font-family:'Liberation Sans', sans-serif;font-size:20px;font-weight:normal;-webkit-text-stroke:0.55px currentColor;transform:scaleX(1.0303);transform-origin:0 0;">Text</div>
<div style="position:absolute;left:482.5px;top:612px;height:24px;line-height:24px;white-space:nowrap;color:#111111;font-family:'Liberation Sans', sans-serif;font-size:20px;font-weight:normal;-webkit-text-stroke:0.9px currentColor;transform:scaleX(0.9426);transform-origin:0 0;">EN</div>
<div style="position:absolute;left:662px;top:612px;height:24px;line-height:24px;white-space:nowrap;color:#111111;font-family:'Liberation Sans', sans-serif;font-size:20px;font-weight:normal;-webkit-text-stroke:0.9px currentColor;transform:scaleX(0.8886);transform-origin:0 0;">AR</div>
<div style="position:absolute;left:842.8px;top:612px;height:24px;line-height:24px;white-space:nowrap;color:#111111;font-family:'Liberation Sans', sans-serif;font-size:20px;font-weight:normal;-webkit-text-stroke:0.9px currentColor;transform:scaleX(0.9037);transform-origin:0 0;">PT</div>
<div style="position:absolute;left:1023.2px;top:612px;height:24px;line-height:24px;white-space:nowrap;color:#111111;font-family:'Liberation Sans', sans-serif;font-size:20px;font-weight:normal;-webkit-text-stroke:0.9px currentColor;transform:scaleX(0.9639);transform-origin:0 0;">JA</div>
<div class="abs" style="left:895px;top:56px;width:313px;height:40px;border-radius:20px;background:#3a3d42;"></div>
<div class="abs" style="left:940px;top:61px;width:30px;height:30px;border-radius:15px;background:#282a2e;"></div>
<div class="abs" style="left:1031px;top:61px;width:52px;height:30px;border-radius:15px;background:#282a2e;"></div>
<div class="abs" style="left:1093px;top:61px;width:30px;height:30px;border-radius:15px;background:#282a2e;"></div>
<div class="abs" style="left:1020px;top:61px;width:1px;height:30px;background:#55585d;"></div>
<svg class="abs" style="left:908px;top:69px" width="14" height="14" viewBox="0 0 14 14"><rect x="4.5" y="4.5" width="5" height="5" fill="#9eacba"/><path d="M7 0.5 L9 2.5 H5 Z M7 13.5 L9 11.5 H5 Z M0.5 7 L2.5 5 V9 Z M13.5 7 L11.5 5 V9 Z" fill="#9eacba"/><path d="M7 2 V4.5 M7 9.5 V12 M2 7 H4.5 M9.5 7 H12" stroke="#9eacba" stroke-width="1"/></svg>
<svg class="abs" style="left:948px;top:69px" width="15" height="15" viewBox="0 0 15 15"><path d="M10 3.2 A5.8 5.8 0 1 1 4.5 2.4" fill="none" stroke="#e8e8e8" stroke-width="1.2"/><path d="M4 7.5 L7.5 4 L11 7.5 L7.5 11 Z" fill="#f0f0f0"/><path d="M9 1 H13.8 V5.8 Z" fill="#c9d2da"/></svg>
<svg class="abs" style="left:988px;top:69px" width="15" height="15" viewBox="0 0 15 15"><rect x="0.5" y="7.5" width="6" height="6.5" fill="#9eacba"/><path d="M0.8 5 V0.8 H5 M9 14.2 H14.2 V9" stroke="#9eacba" stroke-width="1.1" fill="none"/><path d="M8 6.5 L13.5 1 M9.5 1 H14 V5.5" stroke="#9eacba" stroke-width="1.1" fill="none"/></svg>
<svg class="abs" style="left:1039px;top:69px" width="14" height="14" viewBox="0 0 14 14"><rect x="1.65" y="0" width="1.5" height="14" fill="#eeeff2"/><rect x="0" y="1.65" width="14" height="1.5" fill="#eeeff2"/><rect x="4.75" y="0" width="1.5" height="14" fill="#eeeff2"/><rect x="0" y="4.75" width="14" height="1.5" fill="#eeeff2"/><rect x="7.85" y="0" width="1.5" height="14" fill="#eeeff2"/><rect x="0" y="7.85" width="14" height="1.5" fill="#eeeff2"/><rect x="10.85" y="0" width="1.5" height="14" fill="#eeeff2"/><rect x="0" y="10.85" width="14" height="1.5" fill="#eeeff2"/></svg>
<svg class="abs" style="left:1064px;top:73px" width="10" height="7" viewBox="0 0 10 7"><path d="M0.5 0.5 H9.5 L5 6.5 Z" fill="#8c8e92"/></svg>
<div class="abs" style="left:1093px;top:66px;width:30px;height:20px;line-height:20px;text-align:center;font-family:'Liberation Sans',sans-serif;font-weight:bold;font-size:13px;color:#f2f2f2;letter-spacing:-0.3px;">2D</div>
<svg class="abs" style="left:1140px;top:68px" width="15" height="15" viewBox="0 0 15 15"><path d="M1 3 L7.5 0.8 L14 3 L12 13.5 H3 Z M1 3 L5 5 H10 L14 3 M5 5 L3 13.5 M10 5 L12 13.5" fill="none" stroke="#6f7a85" stroke-width="0.9"/></svg>
<svg class="abs" style="left:1180px;top:70px" width="16" height="13" viewBox="0 0 16 13"><path d="M0.4 6 Q6.8 -3.5 13.2 6 Q6.8 15.5 0.4 6 Z" fill="#9eacba"/><circle cx="6.8" cy="6" r="3" fill="#3a3d42"/><circle cx="6.8" cy="6" r="1.7" fill="#9eacba"/><path d="M9 8.6 H15.8 L12.4 12.4 Z" fill="#9eacba" stroke="#3a3d42" stroke-width="0.9"/></svg>
</body></html>
